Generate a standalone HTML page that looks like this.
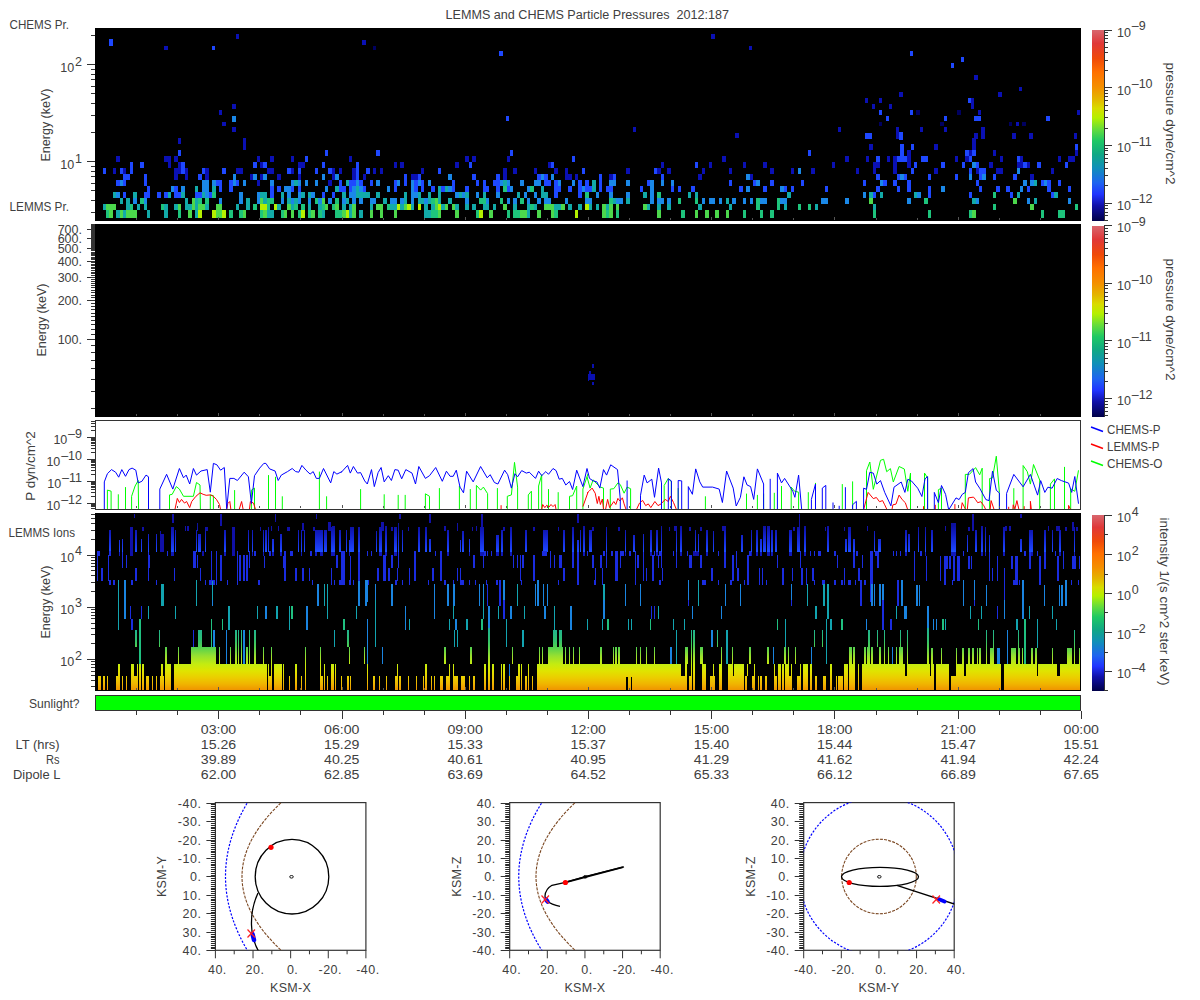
<!DOCTYPE html>
<html><head><meta charset="utf-8"><style>
html,body{margin:0;padding:0;background:#fff;width:1200px;height:1000px;overflow:hidden}
svg{display:block;font-family:"Liberation Sans", sans-serif}
</style></head><body>
<svg width="1200" height="1000" viewBox="0 0 1200 1000">
<text x="445.5" y="19" font-size="12.5" text-anchor="start" fill="#404040"  textLength="283.5" lengthAdjust="spacingAndGlyphs">LEMMS and CHEMS Particle Pressures&#160;&#160;2012:187</text>
<rect x="95" y="28" width="986" height="193" fill="#000" />
<rect x="95" y="224" width="986" height="193" fill="#000" />
<rect x="95.5" y="420.5" width="985" height="89" fill="#fff" stroke="#333" stroke-width="1"/>
<rect x="95" y="513" width="986" height="178" fill="#000" />
<rect x="95.5" y="695.5" width="985" height="15" fill="#00ff00" stroke="#333" stroke-width="1"/>
<g shape-rendering="crispEdges"><rect x="178" y="138" width="3" height="6" fill="#0a10b4"/><rect x="178" y="150" width="3" height="6" fill="#1e48ff"/><rect x="116" y="156" width="4" height="6" fill="#0a10b4"/><rect x="164" y="156" width="4" height="6" fill="#0a10b4"/><rect x="168" y="156" width="3" height="6" fill="#0a10b4"/><rect x="174" y="156" width="4" height="6" fill="#0a10b4"/><rect x="130" y="162" width="3" height="6" fill="#1e48ff"/><rect x="140" y="162" width="4" height="6" fill="#1e48ff"/><rect x="168" y="162" width="3" height="6" fill="#0a10b4"/><rect x="178" y="162" width="3" height="6" fill="#0a10b4"/><rect x="181" y="162" width="4" height="6" fill="#1e48ff"/><rect x="103" y="168" width="3" height="6" fill="#1e48ff"/><rect x="113" y="168" width="3" height="6" fill="#0a10b4"/><rect x="120" y="168" width="3" height="6" fill="#1e48ff"/><rect x="123" y="168" width="3" height="6" fill="#0a10b4"/><rect x="130" y="168" width="3" height="6" fill="#1e48ff"/><rect x="174" y="168" width="4" height="6" fill="#0a10b4"/><rect x="178" y="168" width="3" height="6" fill="#0a10b4"/><rect x="181" y="168" width="4" height="6" fill="#1e48ff"/><rect x="185" y="168" width="3" height="6" fill="#0a10b4"/><rect x="202" y="168" width="3" height="6" fill="#1e48ff"/><rect x="205" y="168" width="4" height="6" fill="#0a10b4"/><rect x="123" y="174" width="3" height="6" fill="#1e48ff"/><rect x="126" y="174" width="4" height="6" fill="#1e48ff"/><rect x="144" y="174" width="3" height="6" fill="#1e48ff"/><rect x="174" y="174" width="4" height="6" fill="#0a10b4"/><rect x="185" y="174" width="3" height="6" fill="#0a10b4"/><rect x="198" y="174" width="4" height="6" fill="#1e48ff"/><rect x="205" y="174" width="4" height="6" fill="#0a10b4"/><rect x="116" y="180" width="4" height="6" fill="#1e48ff"/><rect x="120" y="180" width="3" height="6" fill="#1a88e8"/><rect x="123" y="180" width="3" height="6" fill="#1e48ff"/><rect x="144" y="180" width="3" height="6" fill="#1e48ff"/><rect x="202" y="180" width="3" height="6" fill="#1a88e8"/><rect x="205" y="180" width="4" height="6" fill="#1a88e8"/><rect x="212" y="180" width="4" height="6" fill="#1a88e8"/><rect x="216" y="180" width="3" height="6" fill="#1e48ff"/><rect x="147" y="186" width="3" height="6" fill="#1e48ff"/><rect x="171" y="186" width="3" height="6" fill="#1a88e8"/><rect x="174" y="186" width="4" height="6" fill="#1e48ff"/><rect x="181" y="186" width="4" height="6" fill="#1a88e8"/><rect x="195" y="186" width="3" height="6" fill="#12aaa8"/><rect x="202" y="186" width="3" height="6" fill="#1a88e8"/><rect x="205" y="186" width="4" height="6" fill="#1a88e8"/><rect x="212" y="186" width="4" height="6" fill="#12aaa8"/><rect x="113" y="192" width="3" height="6" fill="#12aaa8"/><rect x="116" y="192" width="4" height="6" fill="#1a88e8"/><rect x="123" y="192" width="3" height="6" fill="#1e48ff"/><rect x="133" y="192" width="4" height="6" fill="#12aaa8"/><rect x="144" y="192" width="3" height="6" fill="#1e48ff"/><rect x="147" y="192" width="3" height="6" fill="#1e48ff"/><rect x="157" y="192" width="4" height="6" fill="#1e48ff"/><rect x="164" y="192" width="4" height="6" fill="#1e48ff"/><rect x="168" y="192" width="3" height="6" fill="#12aaa8"/><rect x="174" y="192" width="4" height="6" fill="#1e48ff"/><rect x="178" y="192" width="3" height="6" fill="#1e48ff"/><rect x="181" y="192" width="4" height="6" fill="#12aaa8"/><rect x="195" y="192" width="3" height="6" fill="#1e48ff"/><rect x="198" y="192" width="4" height="6" fill="#1e48ff"/><rect x="202" y="192" width="3" height="6" fill="#12aaa8"/><rect x="205" y="192" width="4" height="6" fill="#1a88e8"/><rect x="209" y="192" width="3" height="6" fill="#1e48ff"/><rect x="212" y="192" width="4" height="6" fill="#1ec47c"/><rect x="120" y="198" width="3" height="6" fill="#12aaa8"/><rect x="126" y="198" width="4" height="6" fill="#12aaa8"/><rect x="133" y="198" width="4" height="6" fill="#1a88e8"/><rect x="140" y="198" width="4" height="6" fill="#1ec47c"/><rect x="144" y="198" width="3" height="6" fill="#1a88e8"/><rect x="185" y="198" width="3" height="6" fill="#12aaa8"/><rect x="192" y="198" width="3" height="6" fill="#4cd84c"/><rect x="195" y="198" width="3" height="6" fill="#12aaa8"/><rect x="198" y="198" width="4" height="6" fill="#1ec47c"/><rect x="205" y="198" width="4" height="6" fill="#1ec47c"/><rect x="103" y="204" width="3" height="6" fill="#12aaa8"/><rect x="106" y="204" width="3" height="6" fill="#4cd84c"/><rect x="109" y="204" width="4" height="6" fill="#4cd84c"/><rect x="113" y="204" width="3" height="6" fill="#4cd84c"/><rect x="126" y="204" width="4" height="6" fill="#12aaa8"/><rect x="130" y="204" width="3" height="6" fill="#1ec47c"/><rect x="137" y="204" width="3" height="6" fill="#12aaa8"/><rect x="144" y="204" width="3" height="6" fill="#12aaa8"/><rect x="161" y="204" width="3" height="6" fill="#1ec47c"/><rect x="164" y="204" width="4" height="6" fill="#12aaa8"/><rect x="174" y="204" width="4" height="6" fill="#12aaa8"/><rect x="178" y="204" width="3" height="6" fill="#4cd84c"/><rect x="185" y="204" width="3" height="6" fill="#12aaa8"/><rect x="188" y="204" width="4" height="6" fill="#12aaa8"/><rect x="192" y="204" width="3" height="6" fill="#4cd84c"/><rect x="195" y="204" width="3" height="6" fill="#12aaa8"/><rect x="198" y="204" width="4" height="6" fill="#4cd84c"/><rect x="202" y="204" width="3" height="6" fill="#4cd84c"/><rect x="205" y="204" width="4" height="6" fill="#12aaa8"/><rect x="216" y="204" width="3" height="6" fill="#4cd84c"/><rect x="106" y="210" width="3" height="8" fill="#1ec47c"/><rect x="109" y="210" width="4" height="8" fill="#4cd84c"/><rect x="116" y="210" width="4" height="8" fill="#12aaa8"/><rect x="120" y="210" width="3" height="8" fill="#4cd84c"/><rect x="123" y="210" width="3" height="8" fill="#12aaa8"/><rect x="126" y="210" width="4" height="8" fill="#4cd84c"/><rect x="130" y="210" width="3" height="8" fill="#4cd84c"/><rect x="133" y="210" width="4" height="8" fill="#4cd84c"/><rect x="147" y="210" width="3" height="8" fill="#12aaa8"/><rect x="164" y="210" width="4" height="8" fill="#12aaa8"/><rect x="178" y="210" width="3" height="8" fill="#1ec47c"/><rect x="188" y="210" width="4" height="8" fill="#4cd84c"/><rect x="195" y="210" width="3" height="8" fill="#12aaa8"/><rect x="198" y="210" width="4" height="8" fill="#b4f000"/><rect x="212" y="210" width="4" height="8" fill="#b4f000"/><rect x="216" y="210" width="3" height="8" fill="#4cd84c"/><rect x="243" y="138" width="3" height="6" fill="#0a10b4"/><rect x="243" y="144" width="3" height="6" fill="#0a10b4"/><rect x="325" y="150" width="3" height="6" fill="#1e48ff"/><rect x="257" y="156" width="3" height="6" fill="#0a10b4"/><rect x="270" y="156" width="4" height="6" fill="#0a10b4"/><rect x="291" y="156" width="3" height="6" fill="#0a10b4"/><rect x="305" y="156" width="3" height="6" fill="#1e48ff"/><rect x="253" y="162" width="4" height="6" fill="#1e48ff"/><rect x="260" y="162" width="3" height="6" fill="#0a10b4"/><rect x="263" y="162" width="4" height="6" fill="#1e48ff"/><rect x="298" y="162" width="3" height="6" fill="#0a10b4"/><rect x="301" y="162" width="4" height="6" fill="#0a10b4"/><rect x="322" y="162" width="3" height="6" fill="#1e48ff"/><rect x="222" y="168" width="4" height="6" fill="#1e48ff"/><rect x="236" y="168" width="3" height="6" fill="#0a10b4"/><rect x="239" y="168" width="4" height="6" fill="#0a10b4"/><rect x="267" y="168" width="3" height="6" fill="#0a10b4"/><rect x="270" y="168" width="4" height="6" fill="#0a10b4"/><rect x="287" y="168" width="4" height="6" fill="#1e48ff"/><rect x="291" y="168" width="3" height="6" fill="#0a10b4"/><rect x="298" y="168" width="3" height="6" fill="#1e48ff"/><rect x="315" y="168" width="3" height="6" fill="#1e48ff"/><rect x="328" y="168" width="4" height="6" fill="#1e48ff"/><rect x="332" y="168" width="3" height="6" fill="#0a10b4"/><rect x="339" y="168" width="3" height="6" fill="#0a10b4"/><rect x="233" y="174" width="3" height="6" fill="#1a88e8"/><rect x="250" y="174" width="3" height="6" fill="#0a10b4"/><rect x="253" y="174" width="4" height="6" fill="#1a88e8"/><rect x="260" y="174" width="3" height="6" fill="#0a10b4"/><rect x="263" y="174" width="4" height="6" fill="#1a88e8"/><rect x="277" y="174" width="4" height="6" fill="#0a10b4"/><rect x="298" y="174" width="3" height="6" fill="#0a10b4"/><rect x="322" y="174" width="3" height="6" fill="#1a88e8"/><rect x="332" y="174" width="3" height="6" fill="#0a10b4"/><rect x="335" y="174" width="4" height="6" fill="#1a88e8"/><rect x="219" y="180" width="3" height="6" fill="#1e48ff"/><rect x="229" y="180" width="4" height="6" fill="#1e48ff"/><rect x="233" y="180" width="3" height="6" fill="#1a88e8"/><rect x="236" y="180" width="3" height="6" fill="#1e48ff"/><rect x="243" y="180" width="3" height="6" fill="#1a88e8"/><rect x="257" y="180" width="3" height="6" fill="#0a10b4"/><rect x="270" y="180" width="4" height="6" fill="#1a88e8"/><rect x="291" y="180" width="3" height="6" fill="#1a88e8"/><rect x="294" y="180" width="4" height="6" fill="#12aaa8"/><rect x="298" y="180" width="3" height="6" fill="#1a88e8"/><rect x="305" y="180" width="3" height="6" fill="#1a88e8"/><rect x="315" y="180" width="3" height="6" fill="#1a88e8"/><rect x="328" y="180" width="4" height="6" fill="#0a10b4"/><rect x="339" y="180" width="3" height="6" fill="#1e48ff"/><rect x="219" y="186" width="3" height="6" fill="#1e48ff"/><rect x="229" y="186" width="4" height="6" fill="#1e48ff"/><rect x="270" y="186" width="4" height="6" fill="#1e48ff"/><rect x="277" y="186" width="4" height="6" fill="#1e48ff"/><rect x="284" y="186" width="3" height="6" fill="#1a88e8"/><rect x="287" y="186" width="4" height="6" fill="#1a88e8"/><rect x="291" y="186" width="3" height="6" fill="#1e48ff"/><rect x="298" y="186" width="3" height="6" fill="#1e48ff"/><rect x="325" y="186" width="3" height="6" fill="#1a88e8"/><rect x="335" y="186" width="4" height="6" fill="#12aaa8"/><rect x="339" y="186" width="3" height="6" fill="#1e48ff"/><rect x="239" y="192" width="4" height="6" fill="#1a88e8"/><rect x="257" y="192" width="3" height="6" fill="#1a88e8"/><rect x="260" y="192" width="3" height="6" fill="#12aaa8"/><rect x="263" y="192" width="4" height="6" fill="#12aaa8"/><rect x="270" y="192" width="4" height="6" fill="#1e48ff"/><rect x="281" y="192" width="3" height="6" fill="#12aaa8"/><rect x="287" y="192" width="4" height="6" fill="#1a88e8"/><rect x="298" y="192" width="3" height="6" fill="#1a88e8"/><rect x="301" y="192" width="4" height="6" fill="#12aaa8"/><rect x="308" y="192" width="3" height="6" fill="#12aaa8"/><rect x="311" y="192" width="4" height="6" fill="#1a88e8"/><rect x="322" y="192" width="3" height="6" fill="#1e48ff"/><rect x="332" y="192" width="3" height="6" fill="#1e48ff"/><rect x="219" y="198" width="3" height="6" fill="#1a88e8"/><rect x="239" y="198" width="4" height="6" fill="#1a88e8"/><rect x="246" y="198" width="4" height="6" fill="#12aaa8"/><rect x="257" y="198" width="3" height="6" fill="#1a88e8"/><rect x="260" y="198" width="3" height="6" fill="#4cd84c"/><rect x="263" y="198" width="4" height="6" fill="#12aaa8"/><rect x="267" y="198" width="3" height="6" fill="#1ec47c"/><rect x="270" y="198" width="4" height="6" fill="#1ec47c"/><rect x="281" y="198" width="3" height="6" fill="#1a88e8"/><rect x="287" y="198" width="4" height="6" fill="#12aaa8"/><rect x="291" y="198" width="3" height="6" fill="#1a88e8"/><rect x="294" y="198" width="4" height="6" fill="#12aaa8"/><rect x="298" y="198" width="3" height="6" fill="#1a88e8"/><rect x="308" y="198" width="3" height="6" fill="#1a88e8"/><rect x="315" y="198" width="3" height="6" fill="#1ec47c"/><rect x="318" y="198" width="4" height="6" fill="#1a88e8"/><rect x="322" y="198" width="3" height="6" fill="#4cd84c"/><rect x="328" y="198" width="4" height="6" fill="#1a88e8"/><rect x="335" y="198" width="4" height="6" fill="#1ec47c"/><rect x="219" y="204" width="3" height="6" fill="#4cd84c"/><rect x="236" y="204" width="3" height="6" fill="#12aaa8"/><rect x="246" y="204" width="4" height="6" fill="#12aaa8"/><rect x="253" y="204" width="4" height="6" fill="#1ec47c"/><rect x="260" y="204" width="3" height="6" fill="#b4f000"/><rect x="263" y="204" width="4" height="6" fill="#b4f000"/><rect x="267" y="204" width="3" height="6" fill="#1ec47c"/><rect x="274" y="204" width="3" height="6" fill="#b4f000"/><rect x="277" y="204" width="4" height="6" fill="#12aaa8"/><rect x="287" y="204" width="4" height="6" fill="#4cd84c"/><rect x="291" y="204" width="3" height="6" fill="#12aaa8"/><rect x="294" y="204" width="4" height="6" fill="#1ec47c"/><rect x="301" y="204" width="4" height="6" fill="#1ec47c"/><rect x="308" y="204" width="3" height="6" fill="#12aaa8"/><rect x="318" y="204" width="4" height="6" fill="#12aaa8"/><rect x="322" y="204" width="3" height="6" fill="#1ec47c"/><rect x="325" y="204" width="3" height="6" fill="#4cd84c"/><rect x="332" y="204" width="3" height="6" fill="#1ec47c"/><rect x="335" y="204" width="4" height="6" fill="#4cd84c"/><rect x="219" y="210" width="3" height="8" fill="#4cd84c"/><rect x="222" y="210" width="4" height="8" fill="#b4f000"/><rect x="229" y="210" width="4" height="8" fill="#1ec47c"/><rect x="239" y="210" width="4" height="8" fill="#1ec47c"/><rect x="243" y="210" width="3" height="8" fill="#4cd84c"/><rect x="260" y="210" width="3" height="8" fill="#1ec47c"/><rect x="263" y="210" width="4" height="8" fill="#4cd84c"/><rect x="267" y="210" width="3" height="8" fill="#12aaa8"/><rect x="270" y="210" width="4" height="8" fill="#12aaa8"/><rect x="281" y="210" width="3" height="8" fill="#1ec47c"/><rect x="284" y="210" width="3" height="8" fill="#4cd84c"/><rect x="291" y="210" width="3" height="8" fill="#4cd84c"/><rect x="298" y="210" width="3" height="8" fill="#1ec47c"/><rect x="301" y="210" width="4" height="8" fill="#b4f000"/><rect x="308" y="210" width="3" height="8" fill="#1ec47c"/><rect x="311" y="210" width="4" height="8" fill="#4cd84c"/><rect x="318" y="210" width="4" height="8" fill="#1ec47c"/><rect x="322" y="210" width="3" height="8" fill="#12aaa8"/><rect x="335" y="210" width="4" height="8" fill="#1ec47c"/><rect x="339" y="210" width="3" height="8" fill="#1ec47c"/><rect x="376" y="150" width="4" height="6" fill="#1e48ff"/><rect x="349" y="156" width="3" height="6" fill="#0a10b4"/><rect x="356" y="162" width="3" height="6" fill="#1e48ff"/><rect x="394" y="162" width="3" height="6" fill="#0a10b4"/><rect x="400" y="162" width="4" height="6" fill="#0a10b4"/><rect x="455" y="162" width="4" height="6" fill="#0a10b4"/><rect x="352" y="168" width="4" height="6" fill="#0a10b4"/><rect x="356" y="168" width="3" height="6" fill="#1e48ff"/><rect x="366" y="168" width="4" height="6" fill="#1e48ff"/><rect x="373" y="168" width="3" height="6" fill="#0a10b4"/><rect x="380" y="168" width="3" height="6" fill="#0a10b4"/><rect x="421" y="168" width="3" height="6" fill="#0a10b4"/><rect x="438" y="168" width="3" height="6" fill="#1e48ff"/><rect x="352" y="174" width="4" height="6" fill="#0a10b4"/><rect x="356" y="174" width="3" height="6" fill="#1e48ff"/><rect x="363" y="174" width="3" height="6" fill="#0a10b4"/><rect x="404" y="174" width="3" height="6" fill="#1e48ff"/><rect x="411" y="174" width="3" height="6" fill="#0a10b4"/><rect x="414" y="174" width="4" height="6" fill="#0a10b4"/><rect x="418" y="174" width="3" height="6" fill="#1e48ff"/><rect x="448" y="174" width="4" height="6" fill="#1a88e8"/><rect x="346" y="180" width="3" height="6" fill="#12aaa8"/><rect x="349" y="180" width="3" height="6" fill="#1e48ff"/><rect x="352" y="180" width="4" height="6" fill="#1e48ff"/><rect x="356" y="180" width="3" height="6" fill="#1a88e8"/><rect x="359" y="180" width="4" height="6" fill="#1e48ff"/><rect x="370" y="180" width="3" height="6" fill="#1e48ff"/><rect x="376" y="180" width="4" height="6" fill="#1a88e8"/><rect x="394" y="180" width="3" height="6" fill="#1e48ff"/><rect x="397" y="180" width="3" height="6" fill="#1a88e8"/><rect x="404" y="180" width="3" height="6" fill="#1e48ff"/><rect x="411" y="180" width="3" height="6" fill="#1a88e8"/><rect x="414" y="180" width="4" height="6" fill="#1e48ff"/><rect x="418" y="180" width="3" height="6" fill="#1a88e8"/><rect x="421" y="180" width="3" height="6" fill="#1e48ff"/><rect x="428" y="180" width="3" height="6" fill="#1a88e8"/><rect x="452" y="180" width="3" height="6" fill="#1e48ff"/><rect x="342" y="186" width="4" height="6" fill="#1e48ff"/><rect x="349" y="186" width="3" height="6" fill="#1e48ff"/><rect x="352" y="186" width="4" height="6" fill="#1a88e8"/><rect x="356" y="186" width="3" height="6" fill="#12aaa8"/><rect x="359" y="186" width="4" height="6" fill="#1a88e8"/><rect x="363" y="186" width="3" height="6" fill="#1e48ff"/><rect x="387" y="186" width="3" height="6" fill="#1a88e8"/><rect x="394" y="186" width="3" height="6" fill="#1e48ff"/><rect x="411" y="186" width="3" height="6" fill="#1a88e8"/><rect x="414" y="186" width="4" height="6" fill="#1e48ff"/><rect x="421" y="186" width="3" height="6" fill="#1e48ff"/><rect x="431" y="186" width="4" height="6" fill="#1e48ff"/><rect x="438" y="186" width="3" height="6" fill="#12aaa8"/><rect x="441" y="186" width="4" height="6" fill="#1e48ff"/><rect x="445" y="186" width="3" height="6" fill="#12aaa8"/><rect x="448" y="186" width="4" height="6" fill="#1a88e8"/><rect x="452" y="186" width="3" height="6" fill="#1e48ff"/><rect x="342" y="192" width="4" height="6" fill="#12aaa8"/><rect x="349" y="192" width="3" height="6" fill="#1a88e8"/><rect x="352" y="192" width="4" height="6" fill="#1a88e8"/><rect x="356" y="192" width="3" height="6" fill="#12aaa8"/><rect x="359" y="192" width="4" height="6" fill="#12aaa8"/><rect x="363" y="192" width="3" height="6" fill="#12aaa8"/><rect x="366" y="192" width="4" height="6" fill="#12aaa8"/><rect x="376" y="192" width="4" height="6" fill="#12aaa8"/><rect x="404" y="192" width="3" height="6" fill="#12aaa8"/><rect x="411" y="192" width="3" height="6" fill="#1a88e8"/><rect x="414" y="192" width="4" height="6" fill="#1a88e8"/><rect x="418" y="192" width="3" height="6" fill="#12aaa8"/><rect x="428" y="192" width="3" height="6" fill="#12aaa8"/><rect x="438" y="192" width="3" height="6" fill="#12aaa8"/><rect x="455" y="192" width="4" height="6" fill="#1a88e8"/><rect x="459" y="192" width="3" height="6" fill="#12aaa8"/><rect x="462" y="192" width="3" height="6" fill="#1a88e8"/><rect x="342" y="198" width="4" height="6" fill="#1a88e8"/><rect x="346" y="198" width="3" height="6" fill="#12aaa8"/><rect x="352" y="198" width="4" height="6" fill="#1a88e8"/><rect x="359" y="198" width="4" height="6" fill="#1a88e8"/><rect x="370" y="198" width="3" height="6" fill="#1a88e8"/><rect x="373" y="198" width="3" height="6" fill="#1a88e8"/><rect x="383" y="198" width="4" height="6" fill="#12aaa8"/><rect x="390" y="198" width="4" height="6" fill="#1a88e8"/><rect x="394" y="198" width="3" height="6" fill="#1a88e8"/><rect x="400" y="198" width="4" height="6" fill="#1a88e8"/><rect x="404" y="198" width="3" height="6" fill="#12aaa8"/><rect x="411" y="198" width="3" height="6" fill="#1a88e8"/><rect x="418" y="198" width="3" height="6" fill="#12aaa8"/><rect x="421" y="198" width="3" height="6" fill="#12aaa8"/><rect x="424" y="198" width="4" height="6" fill="#1a88e8"/><rect x="428" y="198" width="3" height="6" fill="#12aaa8"/><rect x="431" y="198" width="4" height="6" fill="#1ec47c"/><rect x="435" y="198" width="3" height="6" fill="#4cd84c"/><rect x="438" y="198" width="3" height="6" fill="#12aaa8"/><rect x="448" y="198" width="4" height="6" fill="#12aaa8"/><rect x="342" y="204" width="4" height="6" fill="#12aaa8"/><rect x="349" y="204" width="3" height="6" fill="#12aaa8"/><rect x="352" y="204" width="4" height="6" fill="#4cd84c"/><rect x="370" y="204" width="3" height="6" fill="#12aaa8"/><rect x="376" y="204" width="4" height="6" fill="#4cd84c"/><rect x="380" y="204" width="3" height="6" fill="#4cd84c"/><rect x="387" y="204" width="3" height="6" fill="#1ec47c"/><rect x="390" y="204" width="4" height="6" fill="#12aaa8"/><rect x="394" y="204" width="3" height="6" fill="#12aaa8"/><rect x="397" y="204" width="3" height="6" fill="#b4f000"/><rect x="400" y="204" width="4" height="6" fill="#12aaa8"/><rect x="404" y="204" width="3" height="6" fill="#4cd84c"/><rect x="407" y="204" width="4" height="6" fill="#b4f000"/><rect x="411" y="204" width="3" height="6" fill="#12aaa8"/><rect x="418" y="204" width="3" height="6" fill="#b4f000"/><rect x="424" y="204" width="4" height="6" fill="#12aaa8"/><rect x="431" y="204" width="4" height="6" fill="#12aaa8"/><rect x="435" y="204" width="3" height="6" fill="#4cd84c"/><rect x="438" y="204" width="3" height="6" fill="#b4f000"/><rect x="441" y="204" width="4" height="6" fill="#12aaa8"/><rect x="445" y="204" width="3" height="6" fill="#4cd84c"/><rect x="452" y="204" width="3" height="6" fill="#4cd84c"/><rect x="455" y="204" width="4" height="6" fill="#12aaa8"/><rect x="342" y="210" width="4" height="8" fill="#4cd84c"/><rect x="346" y="210" width="3" height="8" fill="#b4f000"/><rect x="349" y="210" width="3" height="8" fill="#12aaa8"/><rect x="352" y="210" width="4" height="8" fill="#4cd84c"/><rect x="359" y="210" width="4" height="8" fill="#12aaa8"/><rect x="370" y="210" width="3" height="8" fill="#4cd84c"/><rect x="380" y="210" width="3" height="8" fill="#4cd84c"/><rect x="394" y="210" width="3" height="8" fill="#4cd84c"/><rect x="424" y="210" width="4" height="8" fill="#12aaa8"/><rect x="428" y="210" width="3" height="8" fill="#12aaa8"/><rect x="431" y="210" width="4" height="8" fill="#1ec47c"/><rect x="435" y="210" width="3" height="8" fill="#1ec47c"/><rect x="438" y="210" width="3" height="8" fill="#4cd84c"/><rect x="455" y="210" width="4" height="8" fill="#4cd84c"/><rect x="510" y="150" width="3" height="6" fill="#1e48ff"/><rect x="465" y="156" width="4" height="6" fill="#0a10b4"/><rect x="472" y="156" width="4" height="6" fill="#0a10b4"/><rect x="507" y="156" width="3" height="6" fill="#0a10b4"/><rect x="572" y="156" width="3" height="6" fill="#1e48ff"/><rect x="469" y="162" width="3" height="6" fill="#1e48ff"/><rect x="548" y="162" width="3" height="6" fill="#0a10b4"/><rect x="551" y="162" width="3" height="6" fill="#1e48ff"/><rect x="503" y="168" width="4" height="6" fill="#0a10b4"/><rect x="513" y="168" width="4" height="6" fill="#0a10b4"/><rect x="534" y="168" width="3" height="6" fill="#0a10b4"/><rect x="554" y="168" width="4" height="6" fill="#0a10b4"/><rect x="565" y="168" width="3" height="6" fill="#0a10b4"/><rect x="582" y="168" width="3" height="6" fill="#1e48ff"/><rect x="472" y="174" width="4" height="6" fill="#1e48ff"/><rect x="496" y="174" width="4" height="6" fill="#1e48ff"/><rect x="503" y="174" width="4" height="6" fill="#0a10b4"/><rect x="537" y="174" width="4" height="6" fill="#1e48ff"/><rect x="541" y="174" width="3" height="6" fill="#1a88e8"/><rect x="544" y="174" width="4" height="6" fill="#1e48ff"/><rect x="551" y="174" width="3" height="6" fill="#1a88e8"/><rect x="565" y="174" width="3" height="6" fill="#0a10b4"/><rect x="568" y="174" width="4" height="6" fill="#0a10b4"/><rect x="575" y="174" width="3" height="6" fill="#0a10b4"/><rect x="476" y="180" width="3" height="6" fill="#1e48ff"/><rect x="483" y="180" width="3" height="6" fill="#1e48ff"/><rect x="493" y="180" width="3" height="6" fill="#1e48ff"/><rect x="496" y="180" width="4" height="6" fill="#1e48ff"/><rect x="500" y="180" width="3" height="6" fill="#1a88e8"/><rect x="503" y="180" width="4" height="6" fill="#12aaa8"/><rect x="507" y="180" width="3" height="6" fill="#1a88e8"/><rect x="520" y="180" width="4" height="6" fill="#1a88e8"/><rect x="534" y="180" width="3" height="6" fill="#1a88e8"/><rect x="537" y="180" width="4" height="6" fill="#1a88e8"/><rect x="544" y="180" width="4" height="6" fill="#1e48ff"/><rect x="548" y="180" width="3" height="6" fill="#1e48ff"/><rect x="554" y="180" width="4" height="6" fill="#1e48ff"/><rect x="558" y="180" width="3" height="6" fill="#1a88e8"/><rect x="572" y="180" width="3" height="6" fill="#1a88e8"/><rect x="578" y="180" width="4" height="6" fill="#1e48ff"/><rect x="585" y="180" width="4" height="6" fill="#1e48ff"/><rect x="465" y="186" width="4" height="6" fill="#1e48ff"/><rect x="483" y="186" width="3" height="6" fill="#1e48ff"/><rect x="486" y="186" width="3" height="6" fill="#1e48ff"/><rect x="496" y="186" width="4" height="6" fill="#1e48ff"/><rect x="503" y="186" width="4" height="6" fill="#1ec47c"/><rect x="507" y="186" width="3" height="6" fill="#1e48ff"/><rect x="510" y="186" width="3" height="6" fill="#1a88e8"/><rect x="527" y="186" width="3" height="6" fill="#1a88e8"/><rect x="530" y="186" width="4" height="6" fill="#1ec47c"/><rect x="541" y="186" width="3" height="6" fill="#12aaa8"/><rect x="554" y="186" width="4" height="6" fill="#1e48ff"/><rect x="558" y="186" width="3" height="6" fill="#1e48ff"/><rect x="568" y="186" width="4" height="6" fill="#1e48ff"/><rect x="578" y="186" width="4" height="6" fill="#1e48ff"/><rect x="582" y="186" width="3" height="6" fill="#1a88e8"/><rect x="585" y="186" width="4" height="6" fill="#1e48ff"/><rect x="465" y="192" width="4" height="6" fill="#12aaa8"/><rect x="476" y="192" width="3" height="6" fill="#1a88e8"/><rect x="483" y="192" width="3" height="6" fill="#12aaa8"/><rect x="496" y="192" width="4" height="6" fill="#1a88e8"/><rect x="517" y="192" width="3" height="6" fill="#12aaa8"/><rect x="524" y="192" width="3" height="6" fill="#1a88e8"/><rect x="534" y="192" width="3" height="6" fill="#1a88e8"/><rect x="541" y="192" width="3" height="6" fill="#12aaa8"/><rect x="544" y="192" width="4" height="6" fill="#12aaa8"/><rect x="554" y="192" width="4" height="6" fill="#1e48ff"/><rect x="578" y="192" width="4" height="6" fill="#1e48ff"/><rect x="585" y="192" width="4" height="6" fill="#1ec47c"/><rect x="465" y="198" width="4" height="6" fill="#1a88e8"/><rect x="479" y="198" width="4" height="6" fill="#1ec47c"/><rect x="483" y="198" width="3" height="6" fill="#1ec47c"/><rect x="486" y="198" width="3" height="6" fill="#1a88e8"/><rect x="500" y="198" width="3" height="6" fill="#1ec47c"/><rect x="507" y="198" width="3" height="6" fill="#1a88e8"/><rect x="513" y="198" width="4" height="6" fill="#1a88e8"/><rect x="520" y="198" width="4" height="6" fill="#1ec47c"/><rect x="527" y="198" width="3" height="6" fill="#1a88e8"/><rect x="537" y="198" width="4" height="6" fill="#1a88e8"/><rect x="544" y="198" width="4" height="6" fill="#1a88e8"/><rect x="548" y="198" width="3" height="6" fill="#1a88e8"/><rect x="565" y="198" width="3" height="6" fill="#1a88e8"/><rect x="585" y="198" width="4" height="6" fill="#1a88e8"/><rect x="465" y="204" width="4" height="6" fill="#12aaa8"/><rect x="472" y="204" width="4" height="6" fill="#12aaa8"/><rect x="483" y="204" width="3" height="6" fill="#12aaa8"/><rect x="486" y="204" width="3" height="6" fill="#12aaa8"/><rect x="493" y="204" width="3" height="6" fill="#12aaa8"/><rect x="503" y="204" width="4" height="6" fill="#4cd84c"/><rect x="513" y="204" width="4" height="6" fill="#12aaa8"/><rect x="527" y="204" width="3" height="6" fill="#12aaa8"/><rect x="530" y="204" width="4" height="6" fill="#1ec47c"/><rect x="534" y="204" width="3" height="6" fill="#12aaa8"/><rect x="544" y="204" width="4" height="6" fill="#4cd84c"/><rect x="548" y="204" width="3" height="6" fill="#4cd84c"/><rect x="551" y="204" width="3" height="6" fill="#4cd84c"/><rect x="554" y="204" width="4" height="6" fill="#12aaa8"/><rect x="558" y="204" width="3" height="6" fill="#12aaa8"/><rect x="561" y="204" width="4" height="6" fill="#4cd84c"/><rect x="568" y="204" width="4" height="6" fill="#12aaa8"/><rect x="578" y="204" width="4" height="6" fill="#12aaa8"/><rect x="585" y="204" width="4" height="6" fill="#b4f000"/><rect x="476" y="210" width="3" height="8" fill="#1ec47c"/><rect x="479" y="210" width="4" height="8" fill="#b4f000"/><rect x="489" y="210" width="4" height="8" fill="#4cd84c"/><rect x="507" y="210" width="3" height="8" fill="#1ec47c"/><rect x="513" y="210" width="4" height="8" fill="#1ec47c"/><rect x="517" y="210" width="3" height="8" fill="#1ec47c"/><rect x="520" y="210" width="4" height="8" fill="#4cd84c"/><rect x="524" y="210" width="3" height="8" fill="#4cd84c"/><rect x="527" y="210" width="3" height="8" fill="#12aaa8"/><rect x="537" y="210" width="4" height="8" fill="#4cd84c"/><rect x="551" y="210" width="3" height="8" fill="#4cd84c"/><rect x="554" y="210" width="4" height="8" fill="#1ec47c"/><rect x="575" y="210" width="3" height="8" fill="#b4f000"/><rect x="661" y="162" width="3" height="6" fill="#0a10b4"/><rect x="695" y="162" width="3" height="6" fill="#1e48ff"/><rect x="709" y="162" width="3" height="6" fill="#0a10b4"/><rect x="626" y="168" width="4" height="6" fill="#0a10b4"/><rect x="654" y="168" width="3" height="6" fill="#1e48ff"/><rect x="657" y="168" width="4" height="6" fill="#0a10b4"/><rect x="667" y="168" width="4" height="6" fill="#0a10b4"/><rect x="702" y="168" width="3" height="6" fill="#0a10b4"/><rect x="599" y="174" width="3" height="6" fill="#1e48ff"/><rect x="609" y="174" width="4" height="6" fill="#0a10b4"/><rect x="613" y="174" width="3" height="6" fill="#1e48ff"/><rect x="661" y="174" width="3" height="6" fill="#1e48ff"/><rect x="698" y="174" width="4" height="6" fill="#0a10b4"/><rect x="592" y="180" width="4" height="6" fill="#12aaa8"/><rect x="599" y="180" width="3" height="6" fill="#1e48ff"/><rect x="609" y="180" width="4" height="6" fill="#1a88e8"/><rect x="613" y="180" width="3" height="6" fill="#1a88e8"/><rect x="626" y="180" width="4" height="6" fill="#1a88e8"/><rect x="647" y="180" width="3" height="6" fill="#1e48ff"/><rect x="650" y="180" width="4" height="6" fill="#1a88e8"/><rect x="661" y="180" width="3" height="6" fill="#1a88e8"/><rect x="671" y="180" width="3" height="6" fill="#1a88e8"/><rect x="589" y="186" width="3" height="6" fill="#1e48ff"/><rect x="592" y="186" width="4" height="6" fill="#12aaa8"/><rect x="599" y="186" width="3" height="6" fill="#1e48ff"/><rect x="606" y="186" width="3" height="6" fill="#1e48ff"/><rect x="609" y="186" width="4" height="6" fill="#1e48ff"/><rect x="640" y="186" width="3" height="6" fill="#1e48ff"/><rect x="650" y="186" width="4" height="6" fill="#1a88e8"/><rect x="671" y="186" width="3" height="6" fill="#1e48ff"/><rect x="678" y="186" width="3" height="6" fill="#1e48ff"/><rect x="691" y="186" width="4" height="6" fill="#1e48ff"/><rect x="596" y="192" width="3" height="6" fill="#1a88e8"/><rect x="609" y="192" width="4" height="6" fill="#1a88e8"/><rect x="626" y="192" width="4" height="6" fill="#1a88e8"/><rect x="643" y="192" width="4" height="6" fill="#12aaa8"/><rect x="650" y="192" width="4" height="6" fill="#1a88e8"/><rect x="657" y="192" width="4" height="6" fill="#1ec47c"/><rect x="688" y="192" width="3" height="6" fill="#12aaa8"/><rect x="695" y="192" width="3" height="6" fill="#12aaa8"/><rect x="589" y="198" width="3" height="6" fill="#1a88e8"/><rect x="609" y="198" width="4" height="6" fill="#1ec47c"/><rect x="613" y="198" width="3" height="6" fill="#12aaa8"/><rect x="616" y="198" width="3" height="6" fill="#1a88e8"/><rect x="619" y="198" width="4" height="6" fill="#1a88e8"/><rect x="626" y="198" width="4" height="6" fill="#12aaa8"/><rect x="650" y="198" width="4" height="6" fill="#1a88e8"/><rect x="657" y="198" width="4" height="6" fill="#1a88e8"/><rect x="661" y="198" width="3" height="6" fill="#1a88e8"/><rect x="667" y="198" width="4" height="6" fill="#1a88e8"/><rect x="678" y="198" width="3" height="6" fill="#1ec47c"/><rect x="695" y="198" width="3" height="6" fill="#1ec47c"/><rect x="702" y="198" width="3" height="6" fill="#1a88e8"/><rect x="709" y="198" width="3" height="6" fill="#1a88e8"/><rect x="589" y="204" width="3" height="6" fill="#12aaa8"/><rect x="596" y="204" width="3" height="6" fill="#12aaa8"/><rect x="602" y="204" width="4" height="6" fill="#4cd84c"/><rect x="606" y="204" width="3" height="6" fill="#12aaa8"/><rect x="609" y="204" width="4" height="6" fill="#4cd84c"/><rect x="616" y="204" width="3" height="6" fill="#4cd84c"/><rect x="643" y="204" width="4" height="6" fill="#4cd84c"/><rect x="647" y="204" width="3" height="6" fill="#12aaa8"/><rect x="657" y="204" width="4" height="6" fill="#12aaa8"/><rect x="667" y="204" width="4" height="6" fill="#12aaa8"/><rect x="698" y="204" width="4" height="6" fill="#12aaa8"/><rect x="602" y="210" width="4" height="8" fill="#4cd84c"/><rect x="606" y="210" width="3" height="8" fill="#1ec47c"/><rect x="609" y="210" width="4" height="8" fill="#4cd84c"/><rect x="616" y="210" width="3" height="8" fill="#1ec47c"/><rect x="657" y="210" width="4" height="8" fill="#4cd84c"/><rect x="681" y="210" width="4" height="8" fill="#1ec47c"/><rect x="695" y="210" width="3" height="8" fill="#4cd84c"/><rect x="705" y="210" width="4" height="8" fill="#4cd84c"/><rect x="808" y="150" width="3" height="6" fill="#1e48ff"/><rect x="722" y="156" width="4" height="6" fill="#0a10b4"/><rect x="743" y="162" width="3" height="6" fill="#0a10b4"/><rect x="763" y="162" width="4" height="6" fill="#0a10b4"/><rect x="832" y="162" width="3" height="6" fill="#0a10b4"/><rect x="729" y="168" width="3" height="6" fill="#0a10b4"/><rect x="770" y="168" width="4" height="6" fill="#0a10b4"/><rect x="791" y="168" width="3" height="6" fill="#0a10b4"/><rect x="798" y="168" width="3" height="6" fill="#1a88e8"/><rect x="811" y="168" width="4" height="6" fill="#0a10b4"/><rect x="746" y="174" width="4" height="6" fill="#1a88e8"/><rect x="750" y="174" width="3" height="6" fill="#0a10b4"/><rect x="729" y="180" width="3" height="6" fill="#1e48ff"/><rect x="753" y="180" width="3" height="6" fill="#1e48ff"/><rect x="756" y="180" width="4" height="6" fill="#1a88e8"/><rect x="770" y="180" width="4" height="6" fill="#1e48ff"/><rect x="801" y="180" width="3" height="6" fill="#1e48ff"/><rect x="739" y="186" width="4" height="6" fill="#1e48ff"/><rect x="746" y="186" width="4" height="6" fill="#1a88e8"/><rect x="763" y="186" width="4" height="6" fill="#1e48ff"/><rect x="780" y="186" width="4" height="6" fill="#1a88e8"/><rect x="784" y="186" width="3" height="6" fill="#1e48ff"/><rect x="791" y="186" width="3" height="6" fill="#1e48ff"/><rect x="825" y="186" width="3" height="6" fill="#1e48ff"/><rect x="787" y="192" width="4" height="6" fill="#12aaa8"/><rect x="712" y="198" width="3" height="6" fill="#1a88e8"/><rect x="719" y="198" width="3" height="6" fill="#1a88e8"/><rect x="726" y="198" width="3" height="6" fill="#12aaa8"/><rect x="732" y="198" width="4" height="6" fill="#1a88e8"/><rect x="743" y="198" width="3" height="6" fill="#1a88e8"/><rect x="750" y="198" width="3" height="6" fill="#1a88e8"/><rect x="756" y="198" width="4" height="6" fill="#1ec47c"/><rect x="760" y="198" width="3" height="6" fill="#1a88e8"/><rect x="763" y="198" width="4" height="6" fill="#1a88e8"/><rect x="777" y="198" width="3" height="6" fill="#1ec47c"/><rect x="780" y="198" width="4" height="6" fill="#1a88e8"/><rect x="784" y="198" width="3" height="6" fill="#1a88e8"/><rect x="821" y="198" width="4" height="6" fill="#1a88e8"/><rect x="825" y="198" width="3" height="6" fill="#1a88e8"/><rect x="729" y="204" width="3" height="6" fill="#12aaa8"/><rect x="756" y="204" width="4" height="6" fill="#1ec47c"/><rect x="777" y="204" width="3" height="6" fill="#1ec47c"/><rect x="784" y="204" width="3" height="6" fill="#12aaa8"/><rect x="798" y="204" width="3" height="6" fill="#1ec47c"/><rect x="808" y="204" width="3" height="6" fill="#1ec47c"/><rect x="815" y="204" width="3" height="6" fill="#12aaa8"/><rect x="715" y="210" width="4" height="8" fill="#4cd84c"/><rect x="726" y="210" width="3" height="8" fill="#4cd84c"/><rect x="743" y="210" width="3" height="8" fill="#1ec47c"/><rect x="760" y="210" width="3" height="8" fill="#1ec47c"/><rect x="770" y="210" width="4" height="8" fill="#1ec47c"/><rect x="869" y="144" width="4" height="6" fill="#0a10b4"/><rect x="900" y="144" width="4" height="6" fill="#1e48ff"/><rect x="911" y="144" width="3" height="6" fill="#1e48ff"/><rect x="934" y="144" width="4" height="6" fill="#0a10b4"/><rect x="900" y="150" width="4" height="6" fill="#1e48ff"/><rect x="907" y="150" width="4" height="6" fill="#0a10b4"/><rect x="845" y="156" width="4" height="6" fill="#0a10b4"/><rect x="866" y="156" width="3" height="6" fill="#0a10b4"/><rect x="876" y="156" width="4" height="6" fill="#1e48ff"/><rect x="887" y="156" width="3" height="6" fill="#0a10b4"/><rect x="893" y="156" width="4" height="6" fill="#0a10b4"/><rect x="897" y="156" width="3" height="6" fill="#1e48ff"/><rect x="900" y="156" width="4" height="6" fill="#1e48ff"/><rect x="904" y="156" width="3" height="6" fill="#1e48ff"/><rect x="907" y="156" width="4" height="6" fill="#0a10b4"/><rect x="921" y="156" width="3" height="6" fill="#1e48ff"/><rect x="924" y="156" width="4" height="6" fill="#1e48ff"/><rect x="955" y="156" width="3" height="6" fill="#0a10b4"/><rect x="873" y="162" width="3" height="6" fill="#0a10b4"/><rect x="876" y="162" width="4" height="6" fill="#0a10b4"/><rect x="893" y="162" width="4" height="6" fill="#0a10b4"/><rect x="907" y="162" width="4" height="6" fill="#0a10b4"/><rect x="914" y="162" width="3" height="6" fill="#1e48ff"/><rect x="941" y="162" width="4" height="6" fill="#1e48ff"/><rect x="856" y="168" width="3" height="6" fill="#0a10b4"/><rect x="873" y="168" width="3" height="6" fill="#0a10b4"/><rect x="893" y="168" width="4" height="6" fill="#0a10b4"/><rect x="911" y="168" width="3" height="6" fill="#1e48ff"/><rect x="934" y="168" width="4" height="6" fill="#0a10b4"/><rect x="876" y="174" width="4" height="6" fill="#1e48ff"/><rect x="897" y="174" width="3" height="6" fill="#1e48ff"/><rect x="900" y="174" width="4" height="6" fill="#1a88e8"/><rect x="904" y="174" width="3" height="6" fill="#1e48ff"/><rect x="928" y="174" width="3" height="6" fill="#1e48ff"/><rect x="955" y="174" width="3" height="6" fill="#1e48ff"/><rect x="863" y="180" width="3" height="6" fill="#1e48ff"/><rect x="880" y="180" width="3" height="6" fill="#1a88e8"/><rect x="883" y="180" width="4" height="6" fill="#1e48ff"/><rect x="893" y="180" width="4" height="6" fill="#1e48ff"/><rect x="907" y="180" width="4" height="6" fill="#1e48ff"/><rect x="876" y="186" width="4" height="6" fill="#1e48ff"/><rect x="897" y="186" width="3" height="6" fill="#1e48ff"/><rect x="907" y="186" width="4" height="6" fill="#1e48ff"/><rect x="928" y="186" width="3" height="6" fill="#1e48ff"/><rect x="941" y="186" width="4" height="6" fill="#1a88e8"/><rect x="863" y="192" width="3" height="6" fill="#1a88e8"/><rect x="869" y="192" width="4" height="6" fill="#12aaa8"/><rect x="873" y="192" width="3" height="6" fill="#1e48ff"/><rect x="880" y="192" width="3" height="6" fill="#12aaa8"/><rect x="914" y="192" width="3" height="6" fill="#12aaa8"/><rect x="917" y="192" width="4" height="6" fill="#1a88e8"/><rect x="928" y="192" width="3" height="6" fill="#1e48ff"/><rect x="845" y="198" width="4" height="6" fill="#1a88e8"/><rect x="869" y="198" width="4" height="6" fill="#4cd84c"/><rect x="907" y="198" width="4" height="6" fill="#1a88e8"/><rect x="924" y="198" width="4" height="6" fill="#1ec47c"/><rect x="873" y="204" width="3" height="6" fill="#12aaa8"/><rect x="873" y="210" width="3" height="8" fill="#1ec47c"/><rect x="928" y="210" width="3" height="8" fill="#1ec47c"/><rect x="972" y="138" width="4" height="6" fill="#0a10b4"/><rect x="972" y="144" width="4" height="6" fill="#0a10b4"/><rect x="1075" y="144" width="3" height="6" fill="#1e48ff"/><rect x="965" y="150" width="4" height="6" fill="#1e48ff"/><rect x="969" y="150" width="3" height="6" fill="#0a10b4"/><rect x="972" y="150" width="4" height="6" fill="#1e48ff"/><rect x="993" y="150" width="3" height="6" fill="#0a10b4"/><rect x="1075" y="150" width="3" height="6" fill="#0a10b4"/><rect x="965" y="156" width="4" height="6" fill="#0a10b4"/><rect x="969" y="156" width="3" height="6" fill="#1e48ff"/><rect x="1000" y="156" width="3" height="6" fill="#0a10b4"/><rect x="1017" y="156" width="3" height="6" fill="#1e48ff"/><rect x="1020" y="156" width="3" height="6" fill="#0a10b4"/><rect x="1058" y="156" width="3" height="6" fill="#0a10b4"/><rect x="1068" y="156" width="3" height="6" fill="#0a10b4"/><rect x="1071" y="156" width="4" height="6" fill="#0a10b4"/><rect x="962" y="162" width="3" height="6" fill="#1e48ff"/><rect x="972" y="162" width="4" height="6" fill="#1a88e8"/><rect x="976" y="162" width="3" height="6" fill="#1e48ff"/><rect x="989" y="162" width="4" height="6" fill="#0a10b4"/><rect x="1017" y="162" width="3" height="6" fill="#0a10b4"/><rect x="1020" y="162" width="3" height="6" fill="#0a10b4"/><rect x="1023" y="162" width="4" height="6" fill="#1e48ff"/><rect x="1027" y="162" width="3" height="6" fill="#0a10b4"/><rect x="1037" y="162" width="4" height="6" fill="#1e48ff"/><rect x="1065" y="162" width="3" height="6" fill="#1e48ff"/><rect x="969" y="168" width="3" height="6" fill="#1e48ff"/><rect x="976" y="168" width="3" height="6" fill="#0a10b4"/><rect x="979" y="168" width="3" height="6" fill="#1e48ff"/><rect x="982" y="168" width="4" height="6" fill="#1e48ff"/><rect x="996" y="168" width="4" height="6" fill="#0a10b4"/><rect x="1000" y="168" width="3" height="6" fill="#0a10b4"/><rect x="1017" y="168" width="3" height="6" fill="#1a88e8"/><rect x="1051" y="168" width="3" height="6" fill="#0a10b4"/><rect x="969" y="174" width="3" height="6" fill="#1a88e8"/><rect x="979" y="174" width="3" height="6" fill="#1e48ff"/><rect x="982" y="174" width="4" height="6" fill="#1a88e8"/><rect x="993" y="174" width="3" height="6" fill="#1e48ff"/><rect x="1013" y="174" width="4" height="6" fill="#1e48ff"/><rect x="1030" y="174" width="4" height="6" fill="#0a10b4"/><rect x="976" y="180" width="3" height="6" fill="#1e48ff"/><rect x="1023" y="180" width="4" height="6" fill="#1a88e8"/><rect x="1030" y="180" width="4" height="6" fill="#1a88e8"/><rect x="1034" y="180" width="3" height="6" fill="#12aaa8"/><rect x="1041" y="180" width="3" height="6" fill="#1e48ff"/><rect x="1044" y="180" width="3" height="6" fill="#1a88e8"/><rect x="1047" y="180" width="4" height="6" fill="#1e48ff"/><rect x="1058" y="180" width="3" height="6" fill="#1e48ff"/><rect x="979" y="186" width="3" height="6" fill="#1e48ff"/><rect x="996" y="186" width="4" height="6" fill="#1e48ff"/><rect x="1006" y="186" width="4" height="6" fill="#1e48ff"/><rect x="1020" y="186" width="3" height="6" fill="#1a88e8"/><rect x="1027" y="186" width="3" height="6" fill="#1e48ff"/><rect x="1047" y="186" width="4" height="6" fill="#1e48ff"/><rect x="1068" y="186" width="3" height="6" fill="#1e48ff"/><rect x="969" y="192" width="3" height="6" fill="#1e48ff"/><rect x="993" y="192" width="3" height="6" fill="#1ec47c"/><rect x="1010" y="192" width="3" height="6" fill="#1e48ff"/><rect x="1017" y="192" width="3" height="6" fill="#12aaa8"/><rect x="1051" y="192" width="3" height="6" fill="#1e48ff"/><rect x="1054" y="192" width="4" height="6" fill="#12aaa8"/><rect x="972" y="198" width="4" height="6" fill="#12aaa8"/><rect x="976" y="198" width="3" height="6" fill="#1a88e8"/><rect x="1013" y="198" width="4" height="6" fill="#4cd84c"/><rect x="1027" y="198" width="3" height="6" fill="#1a88e8"/><rect x="1034" y="198" width="3" height="6" fill="#12aaa8"/><rect x="1068" y="198" width="3" height="6" fill="#1a88e8"/><rect x="993" y="204" width="3" height="6" fill="#1ec47c"/><rect x="1030" y="204" width="4" height="6" fill="#4cd84c"/><rect x="1075" y="204" width="3" height="6" fill="#1ec47c"/><rect x="969" y="210" width="3" height="8" fill="#1ec47c"/><rect x="972" y="210" width="4" height="8" fill="#4cd84c"/><rect x="1041" y="210" width="3" height="8" fill="#1ec47c"/><rect x="1058" y="210" width="3" height="8" fill="#1ec47c"/><rect x="1061" y="210" width="4" height="8" fill="#1ec47c"/><rect x="109" y="39" width="4" height="7" fill="#1e48ff"/><rect x="164" y="46" width="4" height="4" fill="#0a10b4"/><rect x="212" y="46" width="3" height="4" fill="#1e48ff"/><rect x="236" y="34" width="3" height="5" fill="#0a10b4"/><rect x="232" y="104" width="4" height="5" fill="#0a10b4"/><rect x="219" y="110" width="3" height="5" fill="#0a10b4"/><rect x="232" y="116" width="4" height="6" fill="#1a88e8"/><rect x="222" y="122" width="4" height="4" fill="#0a10b4"/><rect x="232" y="127" width="4" height="5" fill="#0a10b4"/><rect x="362" y="40" width="4" height="5" fill="#0a10b4"/><rect x="373" y="46" width="3" height="4" fill="#000060"/><rect x="499" y="51" width="4" height="5" fill="#1e48ff"/><rect x="506" y="116" width="3" height="5" fill="#1e48ff"/><rect x="711" y="34" width="4" height="5" fill="#0a10b4"/><rect x="749" y="46" width="3" height="4" fill="#0a10b4"/><rect x="633" y="127" width="3" height="5" fill="#0a10b4"/><rect x="735" y="133" width="4" height="5" fill="#0a10b4"/><rect x="910" y="51" width="3" height="5" fill="#1e48ff"/><rect x="961" y="57" width="3" height="5" fill="#1e48ff"/><rect x="951" y="63" width="3" height="5" fill="#1e48ff"/><rect x="974" y="75" width="4" height="5" fill="#0a10b4"/><rect x="1019" y="87" width="3" height="4" fill="#0a10b4"/><rect x="899" y="92" width="4" height="5" fill="#0a10b4"/><rect x="998" y="92" width="4" height="5" fill="#0a10b4"/><rect x="865" y="98" width="3" height="5" fill="#0a10b4"/><rect x="879" y="98" width="3" height="5" fill="#0a10b4"/><rect x="968" y="98" width="3" height="5" fill="#1e48ff"/><rect x="971" y="98" width="3" height="11" fill="#0a10b4"/><rect x="872" y="104" width="3" height="5" fill="#0a10b4"/><rect x="889" y="104" width="3" height="5" fill="#0a10b4"/><rect x="879" y="110" width="3" height="5" fill="#1e48ff"/><rect x="910" y="110" width="3" height="5" fill="#1e48ff"/><rect x="916" y="110" width="4" height="5" fill="#000060"/><rect x="957" y="110" width="4" height="5" fill="#000060"/><rect x="978" y="110" width="3" height="5" fill="#0a10b4"/><rect x="1077" y="110" width="3" height="5" fill="#0a10b4"/><rect x="886" y="116" width="3" height="5" fill="#1e48ff"/><rect x="944" y="116" width="3" height="5" fill="#1e48ff"/><rect x="974" y="116" width="7" height="5" fill="#1e48ff"/><rect x="1046" y="116" width="4" height="5" fill="#1e48ff"/><rect x="879" y="122" width="3" height="4" fill="#000060"/><rect x="940" y="122" width="4" height="4" fill="#000060"/><rect x="1009" y="122" width="3" height="4" fill="#000060"/><rect x="1016" y="122" width="3" height="4" fill="#0a10b4"/><rect x="1022" y="122" width="4" height="4" fill="#000060"/><rect x="838" y="127" width="3" height="5" fill="#0a10b4"/><rect x="896" y="127" width="3" height="12" fill="#0a10b4"/><rect x="920" y="127" width="3" height="5" fill="#0a10b4"/><rect x="944" y="127" width="3" height="5" fill="#0a10b4"/><rect x="981" y="127" width="4" height="12" fill="#0a10b4"/><rect x="865" y="133" width="7" height="6" fill="#1e48ff"/><rect x="899" y="132" width="4" height="8" fill="#1e48ff"/><rect x="974" y="133" width="4" height="6" fill="#0a10b4"/><rect x="1012" y="133" width="4" height="6" fill="#0a10b4"/><rect x="1029" y="133" width="4" height="6" fill="#0a10b4"/><rect x="1074" y="133" width="3" height="6" fill="#0a10b4"/></g><g clip-path="url(#p3clip)" fill="none" stroke-width="1" stroke-linejoin="round"><polyline points="107.4,509.7 107.4,490.1 111.1,491.2 111.1,509.7" stroke="#00ff00"/><polyline points="118.3,509.7 118.3,494.3" stroke="#00ff00"/><polyline points="125.5,509.7 125.5,487.1" stroke="#00ff00"/><polyline points="131.6,509.7 131.6,496.3 135.1,486.0 138.2,480.5 138.6,509.7" stroke="#00ff00"/><polyline points="148.5,509.7 148.5,496.3" stroke="#00ff00"/><polyline points="169.5,509.7 169.5,494.9 172.2,494.3 176.3,486.6 179.4,489.1 183.5,496.3 193.4,496.3 196.5,482.5 200.0,485.0 200.4,509.7" stroke="#00ff00"/><polyline points="210.3,509.7 210.3,494.9 213.4,495.7 213.4,509.7" stroke="#00ff00"/><polyline points="234.6,509.7 234.6,490.1" stroke="#00ff00"/><polyline points="251.4,509.7 251.4,490.1 254.5,488.1 254.5,509.7" stroke="#00ff00"/><polyline points="268.5,509.7 268.5,475.1" stroke="#00ff00"/><polyline points="275.5,509.7 275.5,476.8" stroke="#00ff00"/><polyline points="282.3,509.7 282.3,496.3" stroke="#00ff00"/><polyline points="319.4,509.7 319.4,471.6" stroke="#00ff00"/><polyline points="326.6,509.7 326.6,496.3" stroke="#00ff00"/><polyline points="174.9,509.7 177.3,498.4 179.4,502.5 181.5,499.4 184.5,503.1 186.6,501.5 189.7,507.6 191.7,501.5 195.9,496.3 200.0,492.8 203.1,494.3 206.2,495.3 210.3,494.9 213.4,496.3 216.4,499.4 219.5,504.5 220.6,509.7" stroke="#ff0000"/><polyline points="226.7,509.7 227.8,503.5 229.8,501.5 230.9,509.7" stroke="#ff0000"/><polyline points="239.1,509.7 241.6,501.5 243.2,509.7" stroke="#ff0000"/><polyline points="249.4,509.7 250.4,501.5 253.5,503.1 255.6,509.7" stroke="#ff0000"/><polyline points="104.3,509.7 104.3,481.9 107.4,473.7 111.5,469.6 115.6,472.2 118.7,477.2 121.8,469.6 125.5,476.3 129.0,469.6 132.1,468.1 135.8,470.2 138.2,482.9 141.9,481.3 146.0,475.1 148.5,476.8 148.5,509.7" stroke="#0000ff"/><polyline points="159.8,509.7 159.8,489.1 166.6,474.3 172.8,489.1 179.4,468.5 183.5,477.8 186.2,475.1 189.7,484.0 193.4,468.5 196.5,475.1 201.0,471.0 207.2,469.6 210.3,492.2 213.4,463.4 216.9,464.8 220.6,470.2 224.3,467.5 226.7,508.7 229.8,478.4 233.9,478.4 237.4,480.5 244.2,472.2 248.4,476.8 251.4,503.5 254.5,475.7 259.7,468.1 263.8,463.4 265.9,463.4 269.6,468.9 275.1,471.0 278.2,480.5 281.3,475.1 287.5,471.6 292.2,468.5 295.7,471.6 298.8,472.2 301.9,465.4 306.0,470.2 310.1,474.1 313.2,471.6 316.3,478.4 319.4,478.4 323.5,468.5 330.7,482.9 333.8,471.6 336.9,474.1 342.0,471.6" stroke="#0000ff"/><polyline points="360.6,509.7 360.6,489.1" stroke="#00ff00"/><polyline points="384.2,509.7 384.2,494.3" stroke="#00ff00"/><polyline points="398.2,509.7 398.2,494.9" stroke="#00ff00"/><polyline points="405.2,509.7 405.2,494.9" stroke="#00ff00"/><polyline points="425.4,509.7 425.4,493.8 429.5,496.3 429.5,509.7" stroke="#00ff00"/><polyline points="439.4,509.7 439.4,488.1" stroke="#00ff00"/><polyline points="459.4,509.7 459.4,486.0" stroke="#00ff00"/><polyline points="470.3,509.7 470.3,489.1" stroke="#00ff00"/><polyline points="476.4,509.7 476.4,485.4 480.6,490.1 483.4,487.1 487.6,493.6 487.6,509.7" stroke="#00ff00"/><polyline points="497.4,509.7 497.4,488.1" stroke="#00ff00"/><polyline points="507.3,509.7 507.3,496.3 511.4,494.9 514.5,462.4 517.6,487.1 517.6,509.7" stroke="#00ff00"/><polyline points="528.3,509.7 528.3,494.9 531.4,491.2 531.4,509.7" stroke="#00ff00"/><polyline points="538.6,509.7 538.6,486.0 541.7,474.7 541.7,509.7" stroke="#00ff00"/><polyline points="548.5,509.7 548.5,489.1" stroke="#00ff00"/><polyline points="558.2,509.7 558.2,492.2" stroke="#00ff00"/><polyline points="569.5,509.7 569.5,496.3 572.6,495.7 576.7,486.0 576.7,509.7" stroke="#00ff00"/><polyline points="582.9,509.7 582.9,489.1 588.0,473.7" stroke="#00ff00"/><polyline points="501.1,509.7 501.1,505.2" stroke="#ff0000"/><polyline points="541.7,509.7 542.7,504.5 544.8,507.6 546.8,505.2 548.9,507.2 551.0,504.5 553.0,506.6 555.1,504.5 556.1,509.7" stroke="#ff0000"/><polyline points="582.9,506.6 588.0,492.2" stroke="#ff0000"/><polyline points="341.0,472.6 347.6,465.4 350.3,473.1 353.4,466.5 357.5,473.1 360.6,472.6 364.7,480.9 367.3,484.0 371.5,469.6 374.3,486.6 378.1,472.6 381.1,467.5 384.2,481.9 388.3,475.7 391.4,480.5 394.9,469.6 398.2,470.2 401.7,478.8 405.8,469.6 412.0,473.1 415.5,484.0 418.8,466.5 425.4,478.4 429.5,475.7 435.7,467.5 442.3,481.3 446.4,471.2 450.1,476.3 453.2,476.3 456.3,470.2 460.0,487.1 463.5,492.8 466.6,471.2 473.2,481.9 480.6,466.5 487.2,477.8 490.2,474.7 494.4,482.5 497.9,484.0 504.6,470.2 507.7,474.7 511.4,488.1 514.9,473.7 517.6,476.8 521.7,470.6 526.3,473.1 529.3,472.2 535.5,478.4 538.6,471.2 541.7,475.7 545.8,471.6 548.5,474.3 553.0,468.5 556.1,470.6 559.2,479.2 562.3,478.4 565.8,485.0 569.5,481.5 572.6,489.5 576.7,470.2 582.9,486.6 587.0,468.5" stroke="#0000ff"/><polyline points="587.0,476.8 590.1,488.1 593.2,479.8 596.9,484.0 600.4,487.1 603.5,488.1 603.5,509.7" stroke="#00ff00"/><polyline points="610.3,509.7 610.3,489.1 613.8,488.7 617.9,482.9 620.3,484.6 624.1,493.2 627.1,487.1 630.6,488.7 630.6,509.7" stroke="#00ff00"/><polyline points="640.5,509.7 640.5,495.7" stroke="#00ff00"/><polyline points="664.2,509.7 664.2,485.4 668.3,478.4 671.4,481.9 671.4,509.7" stroke="#00ff00"/><polyline points="678.2,509.7 678.2,488.1" stroke="#00ff00"/><polyline points="705.4,509.7 705.4,496.3" stroke="#00ff00"/><polyline points="746.5,509.7 746.5,493.6" stroke="#00ff00"/><polyline points="757.4,509.7 757.4,494.9" stroke="#00ff00"/><polyline points="763.6,509.7 763.6,493.6" stroke="#00ff00"/><polyline points="774.3,509.7 774.3,492.8" stroke="#00ff00"/><polyline points="781.5,509.7 781.5,486.0" stroke="#00ff00"/><polyline points="791.2,509.7 791.2,487.1 794.5,491.2 798.6,492.2 798.6,509.7" stroke="#00ff00"/><polyline points="808.3,509.7 808.3,492.2" stroke="#00ff00"/><polyline points="815.5,509.7 815.5,482.9" stroke="#00ff00"/><polyline points="587.0,493.2 589.1,491.2 592.1,488.1 595.2,493.2 597.3,503.5 598.9,496.3 600.4,504.5 602.4,499.0 603.5,509.7" stroke="#ff0000"/><polyline points="605.5,509.7 607.6,499.4 609.6,507.6 613.8,501.5 615.8,504.5 617.9,498.4 619.9,501.0 622.4,497.8 624.1,503.9 626.1,509.7" stroke="#ff0000"/><polyline points="636.4,509.7 639.5,503.1 642.6,500.4 645.7,505.6 648.3,503.9 650.8,507.6 654.9,501.5 658.0,505.6 661.1,503.9 665.2,499.4 668.3,501.5 670.4,496.3 673.5,502.5 676.5,509.7" stroke="#ff0000"/><polyline points="587.0,468.5 589.5,478.4 593.2,480.9 596.9,481.9 599.8,488.1 603.5,469.6 606.6,475.1 610.7,464.8 617.5,469.6 620.3,499.4 620.3,509.7" stroke="#0000ff"/><polyline points="627.1,509.7 627.1,480.5" stroke="#0000ff"/><polyline points="640.5,509.7 640.5,495.3 644.2,475.1 647.1,482.9 651.8,479.2 654.5,497.3 658.6,468.1 661.5,482.9 661.5,509.7" stroke="#0000ff"/><polyline points="668.3,509.7 668.3,478.8 671.4,480.9 671.4,509.7" stroke="#0000ff"/><polyline points="678.2,509.7 678.2,480.5 681.7,480.9 681.7,509.7" stroke="#0000ff"/><polyline points="688.3,509.7 688.3,486.6 692.4,494.3 695.7,468.9 699.8,481.9 702.7,487.1 712.6,487.1 719.2,489.1 722.4,502.5 726.6,471.0 733.2,488.1 736.2,506.0 740.4,497.3 743.9,476.8 747.1,485.0 750.6,486.6 753.7,499.4 757.4,468.9 763.6,484.0 763.6,509.7" stroke="#0000ff"/><polyline points="770.2,509.7 770.2,478.8" stroke="#0000ff"/><polyline points="777.4,509.7 777.4,473.1 781.5,482.9 784.6,478.4 792.8,491.2 794.9,497.3 798.6,475.1 801.7,509.7" stroke="#0000ff"/><polyline points="811.4,509.7 811.4,499.4 815.5,484.0 815.5,509.7" stroke="#0000ff"/><polyline points="822.3,509.7 822.3,488.1 825.8,485.4 825.8,509.7" stroke="#0000ff"/><polyline points="833.0,509.7 833.0,502.5" stroke="#0000ff"/><polyline points="842.3,509.9 842.3,484.1" stroke="#00ff00"/><polyline points="852.6,509.9 852.6,481.4" stroke="#00ff00"/><polyline points="866.5,509.9 866.5,470.7 869.8,462.0 873.3,489.3 880.5,460.3 883.6,459.3 886.7,471.7 890.4,468.6 893.3,482.0 899.1,466.5 904.3,469.0 907.8,491.3 910.5,473.1 910.5,509.9" stroke="#00ff00"/><polyline points="924.5,509.9 924.5,473.1 927.6,477.9 927.6,509.9" stroke="#00ff00"/><polyline points="938.4,509.9 938.4,489.7 941.5,488.2 941.5,509.9" stroke="#00ff00"/><polyline points="965.3,509.9 965.3,474.4 969.4,474.4 975.6,467.6 979.7,474.8 982.2,468.2 982.2,509.9" stroke="#00ff00"/><polyline points="989.6,509.9 989.6,478.5 992.5,477.9 996.3,456.2 999.4,492.4 999.4,509.9" stroke="#00ff00"/><polyline points="1013.8,509.9 1013.8,488.2" stroke="#00ff00"/><polyline points="1023.1,509.9 1023.1,465.5 1027.3,471.7 1030.4,484.1 1033.5,464.5 1039.7,480.0 1039.7,509.9" stroke="#00ff00"/><polyline points="1050.4,509.9 1050.4,484.1 1054.5,478.9 1054.5,509.9" stroke="#00ff00"/><polyline points="1064.5,509.9 1064.5,466.9" stroke="#00ff00"/><polyline points="1070.7,509.9 1070.7,488.9 1074.8,491.3 1078.5,470.3" stroke="#00ff00"/><polyline points="863.6,509.9 868.1,492.4 873.3,498.6 876.4,497.5 879.5,501.7 882.6,500.6 884.7,504.8 887.1,509.9" stroke="#ff0000"/><polyline points="891.9,509.9 892.9,504.8 896.0,504.1 899.1,495.1 902.2,499.6 905.3,502.7 907.8,509.9" stroke="#ff0000"/><polyline points="923.5,509.9 923.5,506.2" stroke="#ff0000"/><polyline points="935.3,509.9 935.3,504.8" stroke="#ff0000"/><polyline points="954.9,509.9 954.9,504.1" stroke="#ff0000"/><polyline points="961.1,509.9 962.2,502.7 965.3,508.9" stroke="#ff0000"/><polyline points="967.3,509.9 968.4,497.9 973.5,497.1 975.6,499.6 977.7,502.7 980.8,501.7 983.9,505.8 985.9,509.9" stroke="#ff0000"/><polyline points="990.1,509.9 991.1,500.6 994.2,509.9" stroke="#ff0000"/><polyline points="1008.7,509.9 1008.7,506.8" stroke="#ff0000"/><polyline points="1012.8,509.9 1013.2,504.8 1014.9,508.9 1016.9,500.6 1019.0,509.9" stroke="#ff0000"/><polyline points="1024.2,509.9 1024.2,506.2" stroke="#ff0000"/><polyline points="1030.4,509.9 1030.4,501.3 1031.4,509.9" stroke="#ff0000"/><polyline points="1068.6,509.9 1068.6,505.4 1070.7,509.9" stroke="#ff0000"/><polyline points="839.2,509.9 839.2,505.8" stroke="#0000ff"/><polyline points="845.4,509.9 845.4,487.2" stroke="#0000ff"/><polyline points="852.6,509.9 852.6,504.8 856.4,501.3 856.4,509.9" stroke="#0000ff"/><polyline points="863.6,509.9 863.6,488.2 866.5,489.3 869.8,472.3 873.3,473.1 876.8,484.1 880.5,480.6 884.7,492.4 890.9,505.8 894.0,487.2 901.2,482.0 904.9,492.4 907.8,479.3 911.5,481.0 917.7,488.2 921.9,496.5 925.0,478.9 927.6,476.5 927.6,509.9" stroke="#0000ff"/><polyline points="934.3,509.9 934.3,492.4 938.4,502.7 941.5,485.5 945.6,494.4 948.7,509.9 956.0,497.9 959.1,499.6 962.2,494.4 965.3,492.4 968.4,472.7 973.1,468.6 975.6,482.0 979.7,488.2 985.9,499.6 989.0,500.6 992.5,471.1 996.3,490.3 999.4,493.0 999.4,509.9" stroke="#0000ff"/><polyline points="1006.6,509.9 1006.6,493.4 1013.8,474.4 1023.1,486.8 1030.4,474.4 1037.6,495.1 1040.7,480.6 1044.8,492.4 1047.9,487.2 1052.1,488.2 1057.2,478.5 1061.4,480.6 1068.6,483.1 1071.7,492.4 1074.8,476.5 1078.5,503.7" stroke="#0000ff"/></g><g shape-rendering="crispEdges" fill="#0a10b0"><rect x="588" y="374" width="7" height="6"/><rect x="589" y="371" width="2" height="3"/><rect x="592" y="364" width="2" height="4"/><rect x="592" y="382" width="2" height="3"/><rect x="588" y="380" width="1" height="1"/></g><g shape-rendering="crispEdges"><rect x="134" y="514" width="1" height="4" fill="#1010a8"/><rect x="172" y="514" width="2" height="9" fill="#1010a8"/><rect x="220" y="514" width="2" height="12" fill="#1010a8"/><rect x="185" y="526" width="1" height="5" fill="#1010a8"/><rect x="187" y="526" width="2" height="5" fill="#1010a8"/><rect x="197" y="523" width="1" height="8" fill="url(#bgrad)"/><rect x="109" y="530" width="2" height="22" fill="url(#bgrad)"/><rect x="130" y="527" width="3" height="29" fill="#1010a8"/><rect x="135" y="530" width="2" height="22" fill="url(#bgrad)"/><rect x="142" y="527" width="2" height="4" fill="#1010a8"/><rect x="141" y="539" width="1" height="13" fill="url(#bgrad)"/><rect x="119" y="540" width="1" height="16" fill="url(#bgrad)"/><rect x="122" y="539" width="1" height="13" fill="url(#bgrad)"/><rect x="122" y="552" width="1" height="16" fill="#1a2ce0"/><rect x="148" y="534" width="1" height="18" fill="url(#bgrad)"/><rect x="148" y="552" width="1" height="29" fill="#1a2ce0"/><rect x="149" y="555" width="1" height="13" fill="#1a2ce0"/><rect x="156" y="534" width="1" height="18" fill="url(#bgrad)"/><rect x="160" y="531" width="1" height="21" fill="#1010a8"/><rect x="161" y="534" width="3" height="18" fill="#1010a8"/><rect x="171" y="527" width="3" height="29" fill="url(#bgrad)"/><rect x="175" y="530" width="1" height="22" fill="url(#bgrad)"/><rect x="196" y="530" width="1" height="22" fill="url(#bgrad)"/><rect x="198" y="534" width="3" height="18" fill="url(#bgrad)"/><rect x="205" y="527" width="1" height="25" fill="url(#bgrad)"/><rect x="206" y="527" width="2" height="4" fill="#1010a8"/><rect x="224" y="530" width="2" height="26" fill="url(#bgrad)"/><rect x="232" y="527" width="3" height="29" fill="#1010a8"/><rect x="248" y="530" width="1" height="22" fill="url(#bgrad)"/><rect x="252" y="530" width="1" height="26" fill="url(#bgrad)"/><rect x="97" y="551" width="3" height="5" fill="#1a2ce0"/><rect x="97" y="556" width="1" height="25" fill="#1a2ce0"/><rect x="101" y="568" width="2" height="13" fill="#1a2ce0"/><rect x="108" y="555" width="1" height="26" fill="#1a2ce0"/><rect x="109" y="551" width="2" height="5" fill="#1a2ce0"/><rect x="109" y="580" width="2" height="5" fill="#1a2ce0"/><rect x="113" y="580" width="2" height="5" fill="#1a2ce0"/><rect x="118" y="580" width="1" height="22" fill="#12a4b0"/><rect x="124" y="580" width="2" height="22" fill="#1a84e0"/><rect x="126" y="555" width="1" height="13" fill="#1a2ce0"/><rect x="131" y="580" width="2" height="5" fill="#1a2ce0"/><rect x="135" y="568" width="2" height="13" fill="#1a2ce0"/><rect x="156" y="580" width="1" height="5" fill="#1a2ce0"/><rect x="161" y="584" width="3" height="18" fill="#12a4b0"/><rect x="167" y="551" width="1" height="5" fill="#1a2ce0"/><rect x="174" y="568" width="1" height="13" fill="#1a2ce0"/><rect x="193" y="551" width="3" height="17" fill="#1a2ce0"/><rect x="197" y="555" width="1" height="13" fill="#1a2ce0"/><rect x="202" y="551" width="2" height="5" fill="#1010a8"/><rect x="196" y="580" width="1" height="22" fill="#12a4b0"/><rect x="200" y="568" width="1" height="13" fill="#1a2ce0"/><rect x="205" y="580" width="1" height="5" fill="#1a2ce0"/><rect x="209" y="580" width="6" height="5" fill="#1a2ce0"/><rect x="211" y="551" width="1" height="30" fill="#1a2ce0"/><rect x="212" y="581" width="1" height="21" fill="#12a4b0"/><rect x="216" y="551" width="1" height="34" fill="#1a2ce0"/><rect x="220" y="555" width="2" height="26" fill="#1a2ce0"/><rect x="227" y="580" width="1" height="5" fill="#1a2ce0"/><rect x="237" y="551" width="1" height="34" fill="#1a2ce0"/><rect x="239" y="555" width="2" height="26" fill="#1a2ce0"/><rect x="243" y="555" width="2" height="26" fill="#1a2ce0"/><rect x="246" y="555" width="2" height="26" fill="#1a2ce0"/><rect x="249" y="551" width="1" height="17" fill="#1a2ce0"/><rect x="254" y="551" width="2" height="5" fill="#1a2ce0"/><rect x="258" y="580" width="2" height="5" fill="#1a2ce0"/><rect x="118" y="600" width="1" height="30" fill="#12a4b0"/><rect x="124" y="600" width="2" height="19" fill="#1a84e0"/><rect x="130" y="606" width="1" height="13" fill="#1a2ce0"/><rect x="131" y="619" width="2" height="11" fill="#1a2ce0"/><rect x="141" y="606" width="1" height="13" fill="#1a2ce0"/><rect x="139" y="619" width="2" height="45" fill="#20c080"/><rect x="139" y="664" width="2" height="26" fill="url(#ygrad)"/><rect x="148" y="606" width="1" height="13" fill="#12a4b0"/><rect x="161" y="600" width="3" height="6" fill="#12a4b0"/><rect x="175" y="606" width="1" height="13" fill="#12a4b0"/><rect x="196" y="600" width="1" height="6" fill="#12a4b0"/><rect x="212" y="600" width="1" height="6" fill="#1a84e0"/><rect x="228" y="606" width="2" height="24" fill="#12a4b0"/><rect x="257" y="606" width="1" height="13" fill="#12a4b0"/><rect x="135" y="630" width="2" height="17" fill="url(#ygrad)"/><rect x="159" y="630" width="1" height="17" fill="url(#ygrad)"/><rect x="193" y="630" width="1" height="17" fill="#1a2ce0"/><rect x="198" y="630" width="4" height="17" fill="url(#ygrad)"/><rect x="211" y="619" width="1" height="28" fill="#20c080"/><rect x="213" y="630" width="2" height="17" fill="#1a84e0"/><rect x="222" y="619" width="1" height="11" fill="#20c080"/><rect x="226" y="630" width="1" height="42" fill="#1a84e0"/><rect x="235" y="630" width="2" height="34" fill="url(#ygrad)"/><rect x="238" y="630" width="1" height="34" fill="url(#ygrad)"/><rect x="241" y="630" width="1" height="34" fill="url(#ygrad)"/><rect x="243" y="630" width="2" height="34" fill="#1a84e0"/><rect x="249" y="630" width="1" height="34" fill="url(#ygrad)"/><rect x="254" y="630" width="2" height="34" fill="url(#ygrad)"/><rect x="165" y="647" width="2" height="43" fill="url(#ygrad)"/><rect x="178" y="647" width="1" height="17" fill="url(#ygrad)"/><rect x="191" y="647" width="6" height="17" fill="url(#ygrad)"/><rect x="197" y="647" width="19" height="17" fill="url(#ygrad)"/><rect x="219" y="647" width="1" height="17" fill="url(#ygrad)"/><rect x="230" y="647" width="1" height="17" fill="url(#ygrad)"/><rect x="246" y="647" width="2" height="17" fill="url(#ygrad)"/><rect x="174" y="664" width="86" height="26" fill="url(#ygrad)"/><rect x="98" y="676" width="3" height="14" fill="url(#ygrad)"/><rect x="103" y="676" width="2" height="14" fill="url(#ygrad)"/><rect x="107" y="676" width="1" height="14" fill="url(#ygrad)"/><rect x="116" y="676" width="4" height="14" fill="url(#ygrad)"/><rect x="118" y="664" width="2" height="12" fill="url(#ygrad)"/><rect x="122" y="676" width="1" height="14" fill="url(#ygrad)"/><rect x="126" y="676" width="1" height="14" fill="url(#ygrad)"/><rect x="131" y="676" width="6" height="14" fill="url(#ygrad)"/><rect x="131" y="664" width="3" height="12" fill="url(#ygrad)"/><rect x="137" y="664" width="1" height="26" fill="url(#ygrad)"/><rect x="142" y="664" width="2" height="26" fill="url(#ygrad)"/><rect x="146" y="676" width="3" height="14" fill="url(#ygrad)"/><rect x="152" y="676" width="1" height="14" fill="url(#ygrad)"/><rect x="156" y="676" width="1" height="14" fill="url(#ygrad)"/><rect x="160" y="676" width="4" height="14" fill="url(#ygrad)"/><rect x="161" y="664" width="2" height="12" fill="url(#ygrad)"/><rect x="167" y="664" width="4" height="26" fill="url(#ygrad)"/><rect x="275" y="514" width="1" height="8" fill="#1010a8"/><rect x="316" y="514" width="1" height="5" fill="#1010a8"/><rect x="399" y="514" width="2" height="5" fill="#1010a8"/><rect x="260" y="527" width="1" height="4" fill="#1010a8"/><rect x="271" y="526" width="1" height="5" fill="#1010a8"/><rect x="278" y="526" width="1" height="5" fill="#1010a8"/><rect x="287" y="527" width="3" height="4" fill="#1010a8"/><rect x="302" y="523" width="2" height="8" fill="#1010a8"/><rect x="313" y="527" width="2" height="4" fill="#1010a8"/><rect x="328" y="522" width="3" height="9" fill="#1010a8"/><rect x="332" y="526" width="3" height="5" fill="#1010a8"/><rect x="381" y="522" width="3" height="9" fill="#1010a8"/><rect x="391" y="527" width="2" height="4" fill="#1010a8"/><rect x="408" y="527" width="1" height="4" fill="#1010a8"/><rect x="263" y="530" width="1" height="26" fill="url(#bgrad)"/><rect x="265" y="530" width="2" height="22" fill="url(#bgrad)"/><rect x="268" y="527" width="1" height="25" fill="url(#bgrad)"/><rect x="269" y="551" width="2" height="5" fill="#1a2ce0"/><rect x="272" y="539" width="2" height="17" fill="url(#bgrad)"/><rect x="280" y="534" width="2" height="22" fill="url(#bgrad)"/><rect x="284" y="551" width="2" height="30" fill="#1a2ce0"/><rect x="283" y="556" width="1" height="12" fill="#1a2ce0"/><rect x="290" y="551" width="3" height="5" fill="#1a2ce0"/><rect x="298" y="530" width="1" height="22" fill="url(#bgrad)"/><rect x="301" y="530" width="1" height="26" fill="url(#bgrad)"/><rect x="304" y="530" width="1" height="22" fill="url(#bgrad)"/><rect x="310" y="551" width="2" height="5" fill="#1a2ce0"/><rect x="315" y="530" width="2" height="26" fill="url(#bgrad)"/><rect x="317" y="530" width="3" height="22" fill="url(#bgrad)"/><rect x="320" y="530" width="3" height="26" fill="url(#bgrad)"/><rect x="324" y="530" width="3" height="22" fill="url(#bgrad)"/><rect x="331" y="527" width="4" height="29" fill="url(#bgrad)"/><rect x="339" y="530" width="2" height="22" fill="url(#bgrad)"/><rect x="341" y="551" width="4" height="34" fill="#1a2ce0"/><rect x="346" y="530" width="1" height="22" fill="url(#bgrad)"/><rect x="349" y="540" width="1" height="16" fill="url(#bgrad)"/><rect x="350" y="527" width="4" height="25" fill="url(#bgrad)"/><rect x="358" y="527" width="2" height="25" fill="url(#bgrad)"/><rect x="358" y="552" width="2" height="29" fill="#1a2ce0"/><rect x="358" y="581" width="2" height="21" fill="#1a84e0"/><rect x="367" y="551" width="1" height="5" fill="#1a2ce0"/><rect x="371" y="551" width="1" height="5" fill="#1a2ce0"/><rect x="376" y="531" width="1" height="21" fill="url(#bgrad)"/><rect x="379" y="527" width="3" height="29" fill="url(#bgrad)"/><rect x="385" y="526" width="2" height="30" fill="url(#bgrad)"/><rect x="394" y="527" width="3" height="29" fill="url(#bgrad)"/><rect x="398" y="523" width="1" height="29" fill="url(#bgrad)"/><rect x="398" y="552" width="1" height="16" fill="#1a2ce0"/><rect x="402" y="530" width="1" height="22" fill="url(#bgrad)"/><rect x="418" y="527" width="2" height="25" fill="url(#bgrad)"/><rect x="264" y="556" width="1" height="12" fill="#1a2ce0"/><rect x="259" y="580" width="1" height="5" fill="#1a2ce0"/><rect x="295" y="568" width="2" height="13" fill="#1a2ce0"/><rect x="302" y="568" width="2" height="13" fill="#1a2ce0"/><rect x="309" y="568" width="1" height="13" fill="#1a2ce0"/><rect x="312" y="580" width="1" height="5" fill="#1a2ce0"/><rect x="331" y="568" width="1" height="17" fill="#1a2ce0"/><rect x="334" y="580" width="1" height="5" fill="#1a2ce0"/><rect x="336" y="555" width="2" height="13" fill="#1a2ce0"/><rect x="339" y="580" width="3" height="5" fill="#1a2ce0"/><rect x="349" y="580" width="2" height="5" fill="#1a2ce0"/><rect x="350" y="556" width="1" height="25" fill="#1a2ce0"/><rect x="353" y="580" width="1" height="5" fill="#1a2ce0"/><rect x="365" y="580" width="3" height="22" fill="#1a84e0"/><rect x="368" y="580" width="1" height="5" fill="#1a2ce0"/><rect x="377" y="568" width="2" height="13" fill="#1a2ce0"/><rect x="383" y="555" width="3" height="26" fill="#1a2ce0"/><rect x="388" y="568" width="2" height="13" fill="#1a2ce0"/><rect x="391" y="555" width="2" height="13" fill="#1a2ce0"/><rect x="395" y="580" width="2" height="5" fill="#1a2ce0"/><rect x="397" y="568" width="1" height="13" fill="#1a2ce0"/><rect x="402" y="580" width="1" height="5" fill="#1a2ce0"/><rect x="409" y="568" width="1" height="17" fill="#1a2ce0"/><rect x="414" y="551" width="2" height="30" fill="#1a2ce0"/><rect x="317" y="584" width="2" height="18" fill="#1a84e0"/><rect x="324" y="584" width="1" height="18" fill="#12a4b0"/><rect x="327" y="584" width="1" height="18" fill="#12a4b0"/><rect x="375" y="584" width="1" height="18" fill="#1a84e0"/><rect x="391" y="584" width="2" height="18" fill="#1a84e0"/><rect x="317" y="600" width="2" height="6" fill="#1a84e0"/><rect x="324" y="600" width="1" height="6" fill="#12a4b0"/><rect x="327" y="600" width="1" height="19" fill="#12a4b0"/><rect x="358" y="600" width="2" height="6" fill="#1a84e0"/><rect x="365" y="600" width="2" height="6" fill="#1a84e0"/><rect x="375" y="600" width="1" height="47" fill="#12a4b0"/><rect x="391" y="600" width="2" height="6" fill="#1a84e0"/><rect x="265" y="606" width="2" height="13" fill="#1a84e0"/><rect x="276" y="606" width="2" height="13" fill="#12a4b0"/><rect x="289" y="606" width="1" height="24" fill="#12a4b0"/><rect x="291" y="606" width="2" height="13" fill="#20c080"/><rect x="306" y="606" width="2" height="24" fill="#1a84e0"/><rect x="356" y="606" width="1" height="13" fill="#12a4b0"/><rect x="405" y="606" width="1" height="24" fill="#1a84e0"/><rect x="409" y="619" width="1" height="11" fill="#12a4b0"/><rect x="343" y="619" width="2" height="11" fill="#20c080"/><rect x="334" y="630" width="1" height="17" fill="#12a4b0"/><rect x="347" y="630" width="2" height="17" fill="url(#ygrad)"/><rect x="349" y="647" width="1" height="17" fill="url(#ygrad)"/><rect x="367" y="619" width="1" height="45" fill="#1a84e0"/><rect x="367" y="664" width="1" height="26" fill="url(#ygrad)"/><rect x="263" y="647" width="1" height="17" fill="url(#ygrad)"/><rect x="271" y="647" width="1" height="43" fill="url(#ygrad)"/><rect x="305" y="647" width="1" height="43" fill="url(#ygrad)"/><rect x="320" y="647" width="1" height="29" fill="url(#ygrad)"/><rect x="364" y="647" width="1" height="17" fill="url(#ygrad)"/><rect x="382" y="647" width="1" height="17" fill="#1a84e0"/><rect x="259" y="664" width="8" height="26" fill="url(#ygrad)"/><rect x="268" y="664" width="1" height="26" fill="url(#ygrad)"/><rect x="269" y="676" width="3" height="14" fill="url(#ygrad)"/><rect x="274" y="664" width="8" height="26" fill="url(#ygrad)"/><rect x="283" y="664" width="1" height="26" fill="url(#ygrad)"/><rect x="289" y="676" width="1" height="14" fill="url(#ygrad)"/><rect x="295" y="664" width="2" height="26" fill="url(#ygrad)"/><rect x="301" y="676" width="1" height="14" fill="url(#ygrad)"/><rect x="320" y="676" width="3" height="14" fill="url(#ygrad)"/><rect x="324" y="664" width="1" height="26" fill="url(#ygrad)"/><rect x="327" y="676" width="1" height="14" fill="url(#ygrad)"/><rect x="331" y="664" width="3" height="26" fill="url(#ygrad)"/><rect x="335" y="664" width="1" height="26" fill="url(#ygrad)"/><rect x="341" y="676" width="1" height="14" fill="url(#ygrad)"/><rect x="347" y="676" width="2" height="14" fill="url(#ygrad)"/><rect x="350" y="676" width="1" height="14" fill="url(#ygrad)"/><rect x="373" y="676" width="2" height="14" fill="url(#ygrad)"/><rect x="379" y="676" width="1" height="14" fill="url(#ygrad)"/><rect x="386" y="676" width="1" height="14" fill="url(#ygrad)"/><rect x="395" y="676" width="3" height="14" fill="url(#ygrad)"/><rect x="397" y="664" width="1" height="12" fill="url(#ygrad)"/><rect x="399" y="676" width="2" height="14" fill="url(#ygrad)"/><rect x="408" y="676" width="1" height="14" fill="url(#ygrad)"/><rect x="416" y="676" width="1" height="14" fill="url(#ygrad)"/><rect x="423" y="676" width="1" height="14" fill="url(#ygrad)"/><rect x="429" y="514" width="2" height="9" fill="#1010a8"/><rect x="481" y="514" width="2" height="13" fill="#1010a8"/><rect x="481" y="527" width="2" height="25" fill="url(#bgrad)"/><rect x="577" y="514" width="2" height="9" fill="#1010a8"/><rect x="425" y="527" width="2" height="25" fill="url(#bgrad)"/><rect x="429" y="539" width="2" height="13" fill="url(#bgrad)"/><rect x="444" y="526" width="2" height="5" fill="#1010a8"/><rect x="447" y="530" width="2" height="26" fill="url(#bgrad)"/><rect x="457" y="523" width="1" height="8" fill="#1010a8"/><rect x="460" y="540" width="1" height="12" fill="url(#bgrad)"/><rect x="462" y="531" width="2" height="21" fill="url(#bgrad)"/><rect x="469" y="539" width="1" height="17" fill="url(#bgrad)"/><rect x="472" y="527" width="1" height="4" fill="#1010a8"/><rect x="476" y="526" width="1" height="5" fill="#1010a8"/><rect x="480" y="527" width="4" height="29" fill="url(#bgrad)"/><rect x="484" y="551" width="2" height="5" fill="#1a2ce0"/><rect x="487" y="551" width="1" height="5" fill="#1a2ce0"/><rect x="491" y="551" width="1" height="5" fill="#1a2ce0"/><rect x="496" y="535" width="3" height="21" fill="url(#bgrad)"/><rect x="501" y="530" width="2" height="26" fill="url(#bgrad)"/><rect x="503" y="527" width="2" height="4" fill="#1010a8"/><rect x="510" y="527" width="2" height="29" fill="url(#bgrad)"/><rect x="525" y="530" width="2" height="22" fill="url(#bgrad)"/><rect x="533" y="527" width="2" height="4" fill="#1010a8"/><rect x="543" y="530" width="5" height="22" fill="url(#bgrad)"/><rect x="542" y="551" width="5" height="5" fill="#1a2ce0"/><rect x="550" y="551" width="1" height="17" fill="#1a2ce0"/><rect x="558" y="527" width="1" height="4" fill="#1010a8"/><rect x="563" y="530" width="2" height="22" fill="url(#bgrad)"/><rect x="572" y="527" width="2" height="25" fill="url(#bgrad)"/><rect x="572" y="552" width="2" height="16" fill="#1a2ce0"/><rect x="577" y="540" width="2" height="12" fill="url(#bgrad)"/><rect x="577" y="552" width="2" height="33" fill="#1a2ce0"/><rect x="580" y="530" width="1" height="22" fill="url(#bgrad)"/><rect x="583" y="526" width="2" height="30" fill="url(#bgrad)"/><rect x="587" y="551" width="1" height="5" fill="#1a2ce0"/><rect x="435" y="551" width="1" height="5" fill="#1a2ce0"/><rect x="440" y="551" width="2" height="30" fill="#1a2ce0"/><rect x="432" y="568" width="2" height="13" fill="#1a2ce0"/><rect x="428" y="580" width="1" height="5" fill="#1a2ce0"/><rect x="444" y="580" width="2" height="5" fill="#1a2ce0"/><rect x="453" y="580" width="1" height="5" fill="#1a2ce0"/><rect x="457" y="568" width="1" height="13" fill="#1a2ce0"/><rect x="460" y="568" width="1" height="13" fill="#1a2ce0"/><rect x="460" y="580" width="4" height="5" fill="#1a2ce0"/><rect x="469" y="580" width="1" height="5" fill="#1a2ce0"/><rect x="473" y="555" width="2" height="13" fill="#1a2ce0"/><rect x="475" y="580" width="1" height="5" fill="#1a2ce0"/><rect x="483" y="555" width="1" height="13" fill="#1a2ce0"/><rect x="486" y="580" width="1" height="5" fill="#1a2ce0"/><rect x="496" y="580" width="2" height="5" fill="#1a2ce0"/><rect x="513" y="555" width="1" height="13" fill="#1a2ce0"/><rect x="517" y="555" width="1" height="13" fill="#1a2ce0"/><rect x="520" y="555" width="1" height="26" fill="#1a2ce0"/><rect x="522" y="555" width="2" height="13" fill="#1a2ce0"/><rect x="521" y="580" width="1" height="5" fill="#1a2ce0"/><rect x="533" y="555" width="2" height="26" fill="#1a2ce0"/><rect x="554" y="555" width="1" height="13" fill="#1a2ce0"/><rect x="559" y="555" width="3" height="13" fill="#1a2ce0"/><rect x="563" y="568" width="2" height="13" fill="#1a2ce0"/><rect x="558" y="580" width="1" height="5" fill="#1a2ce0"/><rect x="434" y="584" width="1" height="18" fill="#1a84e0"/><rect x="447" y="584" width="2" height="18" fill="#1a84e0"/><rect x="453" y="584" width="2" height="18" fill="#1a84e0"/><rect x="479" y="584" width="1" height="18" fill="#1a84e0"/><rect x="483" y="584" width="1" height="18" fill="#1a84e0"/><rect x="487" y="584" width="1" height="18" fill="#1a2ce0"/><rect x="499" y="580" width="2" height="22" fill="#1a2ce0"/><rect x="503" y="580" width="2" height="22" fill="#1a84e0"/><rect x="517" y="584" width="1" height="18" fill="#12a4b0"/><rect x="535" y="584" width="1" height="18" fill="#1a84e0"/><rect x="537" y="580" width="2" height="22" fill="#1a84e0"/><rect x="543" y="584" width="1" height="18" fill="#1a84e0"/><rect x="547" y="584" width="1" height="18" fill="#1a84e0"/><rect x="434" y="600" width="1" height="19" fill="#1a84e0"/><rect x="447" y="600" width="2" height="6" fill="#1a84e0"/><rect x="453" y="600" width="2" height="6" fill="#1a84e0"/><rect x="453" y="606" width="1" height="13" fill="#12a4b0"/><rect x="479" y="600" width="1" height="6" fill="#1a84e0"/><rect x="483" y="600" width="1" height="19" fill="#12a4b0"/><rect x="487" y="600" width="1" height="6" fill="#1a2ce0"/><rect x="499" y="600" width="2" height="6" fill="#1a2ce0"/><rect x="503" y="600" width="2" height="19" fill="#1a2ce0"/><rect x="517" y="600" width="1" height="6" fill="#12a4b0"/><rect x="535" y="600" width="1" height="6" fill="#1a84e0"/><rect x="537" y="600" width="2" height="6" fill="#1a84e0"/><rect x="543" y="600" width="1" height="6" fill="#1a84e0"/><rect x="547" y="600" width="1" height="6" fill="#1a84e0"/><rect x="544" y="606" width="2" height="13" fill="#1a84e0"/><rect x="488" y="606" width="2" height="22" fill="#1a84e0"/><rect x="488" y="628" width="2" height="36" fill="url(#ygrad)"/><rect x="488" y="664" width="2" height="26" fill="url(#ygrad)"/><rect x="498" y="606" width="1" height="13" fill="#12a4b0"/><rect x="510" y="606" width="2" height="13" fill="#1a84e0"/><rect x="524" y="606" width="1" height="13" fill="#12a4b0"/><rect x="554" y="606" width="1" height="24" fill="#12a4b0"/><rect x="570" y="606" width="2" height="24" fill="#1a84e0"/><rect x="587" y="619" width="1" height="11" fill="#12a4b0"/><rect x="449" y="619" width="1" height="11" fill="#12a4b0"/><rect x="455" y="619" width="2" height="11" fill="#1a84e0"/><rect x="454" y="630" width="1" height="17" fill="#12a4b0"/><rect x="457" y="630" width="1" height="17" fill="#12a4b0"/><rect x="466" y="619" width="2" height="11" fill="#12a4b0"/><rect x="481" y="619" width="2" height="11" fill="#20c080"/><rect x="506" y="619" width="1" height="28" fill="#12a4b0"/><rect x="522" y="630" width="2" height="17" fill="#12a4b0"/><rect x="444" y="647" width="2" height="17" fill="url(#ygrad)"/><rect x="470" y="647" width="2" height="17" fill="url(#ygrad)"/><rect x="512" y="647" width="1" height="17" fill="url(#ygrad)"/><rect x="425" y="664" width="2" height="26" fill="url(#ygrad)"/><rect x="423" y="676" width="1" height="14" fill="url(#ygrad)"/><rect x="431" y="676" width="1" height="14" fill="url(#ygrad)"/><rect x="434" y="676" width="1" height="14" fill="url(#ygrad)"/><rect x="440" y="676" width="3" height="14" fill="url(#ygrad)"/><rect x="446" y="676" width="4" height="14" fill="url(#ygrad)"/><rect x="449" y="664" width="1" height="12" fill="url(#ygrad)"/><rect x="453" y="664" width="1" height="12" fill="url(#ygrad)"/><rect x="453" y="676" width="5" height="14" fill="url(#ygrad)"/><rect x="461" y="676" width="4" height="14" fill="url(#ygrad)"/><rect x="469" y="676" width="1" height="14" fill="url(#ygrad)"/><rect x="473" y="676" width="2" height="14" fill="url(#ygrad)"/><rect x="484" y="664" width="2" height="26" fill="url(#ygrad)"/><rect x="492" y="664" width="2" height="26" fill="url(#ygrad)"/><rect x="501" y="664" width="1" height="26" fill="url(#ygrad)"/><rect x="503" y="664" width="2" height="26" fill="url(#ygrad)"/><rect x="509" y="664" width="1" height="12" fill="#1a84e0"/><rect x="509" y="676" width="1" height="14" fill="url(#ygrad)"/><rect x="516" y="676" width="4" height="14" fill="url(#ygrad)"/><rect x="518" y="664" width="2" height="12" fill="url(#ygrad)"/><rect x="521" y="664" width="1" height="26" fill="url(#ygrad)"/><rect x="525" y="676" width="2" height="14" fill="url(#ygrad)"/><rect x="528" y="664" width="1" height="26" fill="url(#ygrad)"/><rect x="532" y="676" width="1" height="14" fill="url(#ygrad)"/><rect x="537" y="664" width="51" height="26" fill="url(#ygrad)"/><rect x="548" y="647" width="15" height="17" fill="url(#ygrad)"/><rect x="553" y="630" width="4" height="17" fill="url(#ygrad)"/><rect x="559" y="630" width="3" height="17" fill="url(#ygrad)"/><rect x="539" y="647" width="1" height="17" fill="url(#ygrad)"/><rect x="542" y="647" width="1" height="17" fill="url(#ygrad)"/><rect x="565" y="647" width="1" height="17" fill="url(#ygrad)"/><rect x="569" y="647" width="1" height="17" fill="url(#ygrad)"/><rect x="573" y="647" width="1" height="17" fill="url(#ygrad)"/><rect x="579" y="647" width="1" height="17" fill="url(#ygrad)"/><rect x="589" y="530" width="3" height="22" fill="url(#bgrad)"/><rect x="592" y="527" width="2" height="4" fill="#1010a8"/><rect x="587" y="551" width="1" height="5" fill="#1a2ce0"/><rect x="592" y="555" width="2" height="13" fill="#1a2ce0"/><rect x="595" y="568" width="1" height="17" fill="#1a2ce0"/><rect x="594" y="580" width="1" height="5" fill="#1a2ce0"/><rect x="600" y="555" width="2" height="13" fill="#1a2ce0"/><rect x="602" y="568" width="1" height="17" fill="#1a2ce0"/><rect x="603" y="551" width="2" height="5" fill="#1a2ce0"/><rect x="603" y="584" width="2" height="18" fill="#12a4b0"/><rect x="606" y="527" width="1" height="25" fill="url(#bgrad)"/><rect x="606" y="552" width="1" height="16" fill="#1a2ce0"/><rect x="611" y="551" width="2" height="5" fill="#1a2ce0"/><rect x="615" y="551" width="3" height="30" fill="#1a2ce0"/><rect x="618" y="527" width="2" height="4" fill="#1010a8"/><rect x="620" y="551" width="1" height="17" fill="#1a2ce0"/><rect x="621" y="551" width="3" height="5" fill="#1a2ce0"/><rect x="625" y="530" width="1" height="26" fill="url(#bgrad)"/><rect x="625" y="584" width="1" height="18" fill="#1a84e0"/><rect x="629" y="551" width="2" height="5" fill="#1a2ce0"/><rect x="633" y="535" width="2" height="17" fill="url(#bgrad)"/><rect x="635" y="551" width="1" height="34" fill="#1a2ce0"/><rect x="637" y="555" width="2" height="13" fill="#1a2ce0"/><rect x="640" y="584" width="1" height="18" fill="#1a84e0"/><rect x="643" y="534" width="1" height="18" fill="url(#bgrad)"/><rect x="643" y="552" width="1" height="29" fill="#1a2ce0"/><rect x="646" y="568" width="1" height="13" fill="#1a2ce0"/><rect x="650" y="530" width="2" height="26" fill="url(#bgrad)"/><rect x="652" y="555" width="2" height="26" fill="#1a2ce0"/><rect x="654" y="551" width="1" height="5" fill="#1a2ce0"/><rect x="656" y="530" width="2" height="26" fill="url(#bgrad)"/><rect x="658" y="555" width="1" height="13" fill="#1a2ce0"/><rect x="659" y="551" width="3" height="5" fill="#1a2ce0"/><rect x="661" y="526" width="1" height="26" fill="url(#bgrad)"/><rect x="661" y="552" width="1" height="16" fill="#1a2ce0"/><rect x="662" y="568" width="1" height="13" fill="#1a2ce0"/><rect x="659" y="580" width="2" height="5" fill="#1a2ce0"/><rect x="669" y="527" width="1" height="4" fill="#1010a8"/><rect x="673" y="551" width="1" height="5" fill="#1a2ce0"/><rect x="674" y="526" width="3" height="5" fill="#1010a8"/><rect x="676" y="530" width="1" height="22" fill="url(#bgrad)"/><rect x="676" y="552" width="1" height="16" fill="#1a2ce0"/><rect x="680" y="526" width="2" height="30" fill="url(#bgrad)"/><rect x="687" y="551" width="1" height="5" fill="#1a2ce0"/><rect x="688" y="580" width="1" height="22" fill="#1a84e0"/><rect x="689" y="527" width="2" height="4" fill="#1010a8"/><rect x="689" y="555" width="3" height="13" fill="#1a2ce0"/><rect x="693" y="551" width="6" height="5" fill="#1010a8"/><rect x="695" y="530" width="1" height="22" fill="url(#bgrad)"/><rect x="698" y="534" width="1" height="18" fill="url(#bgrad)"/><rect x="698" y="580" width="1" height="22" fill="#12a4b0"/><rect x="700" y="527" width="2" height="4" fill="#1010a8"/><rect x="700" y="555" width="2" height="13" fill="#1a2ce0"/><rect x="702" y="580" width="4" height="5" fill="#1a2ce0"/><rect x="706" y="530" width="2" height="26" fill="url(#bgrad)"/><rect x="711" y="568" width="2" height="13" fill="#1a2ce0"/><rect x="713" y="531" width="1" height="21" fill="url(#bgrad)"/><rect x="718" y="551" width="1" height="5" fill="#1a2ce0"/><rect x="718" y="580" width="1" height="5" fill="#1a2ce0"/><rect x="722" y="526" width="4" height="5" fill="#1010a8"/><rect x="724" y="530" width="2" height="22" fill="url(#bgrad)"/><rect x="724" y="552" width="2" height="16" fill="#1a2ce0"/><rect x="725" y="584" width="1" height="18" fill="#1a84e0"/><rect x="730" y="580" width="2" height="5" fill="#1a2ce0"/><rect x="732" y="555" width="2" height="26" fill="#1a2ce0"/><rect x="736" y="551" width="1" height="17" fill="#1a2ce0"/><rect x="737" y="568" width="2" height="13" fill="#1a2ce0"/><rect x="740" y="584" width="1" height="18" fill="#1a84e0"/><rect x="741" y="535" width="2" height="17" fill="url(#bgrad)"/><rect x="744" y="580" width="1" height="5" fill="#1a2ce0"/><rect x="747" y="555" width="2" height="30" fill="#1a2ce0"/><rect x="749" y="551" width="3" height="5" fill="#1a2ce0"/><rect x="751" y="530" width="1" height="22" fill="url(#bgrad)"/><rect x="603" y="600" width="2" height="19" fill="#1a84e0"/><rect x="625" y="600" width="1" height="6" fill="#1a84e0"/><rect x="640" y="600" width="1" height="6" fill="#1a84e0"/><rect x="651" y="606" width="1" height="13" fill="#1a2ce0"/><rect x="654" y="606" width="1" height="13" fill="#1a2ce0"/><rect x="658" y="606" width="1" height="13" fill="#12a4b0"/><rect x="688" y="600" width="1" height="6" fill="#1a2ce0"/><rect x="692" y="606" width="1" height="13" fill="#1a84e0"/><rect x="698" y="600" width="1" height="6" fill="#12a4b0"/><rect x="721" y="606" width="1" height="13" fill="#1a84e0"/><rect x="725" y="600" width="1" height="6" fill="#1a84e0"/><rect x="740" y="600" width="1" height="6" fill="#1a84e0"/><rect x="587" y="619" width="1" height="11" fill="#12a4b0"/><rect x="602" y="619" width="1" height="11" fill="#12a4b0"/><rect x="607" y="619" width="2" height="11" fill="#20c080"/><rect x="628" y="619" width="1" height="11" fill="#12a4b0"/><rect x="631" y="619" width="1" height="11" fill="#12a4b0"/><rect x="650" y="619" width="1" height="11" fill="#20c080"/><rect x="673" y="619" width="1" height="11" fill="#12a4b0"/><rect x="684" y="619" width="1" height="11" fill="#12a4b0"/><rect x="676" y="630" width="1" height="34" fill="#12a4b0"/><rect x="691" y="630" width="1" height="34" fill="url(#ygrad)"/><rect x="691" y="664" width="1" height="26" fill="url(#ygrad)"/><rect x="693" y="630" width="2" height="34" fill="url(#ygrad)"/><rect x="693" y="664" width="2" height="26" fill="url(#ygrad)"/><rect x="711" y="630" width="2" height="17" fill="#1a84e0"/><rect x="717" y="630" width="1" height="17" fill="url(#ygrad)"/><rect x="726" y="630" width="2" height="34" fill="#12a4b0"/><rect x="600" y="647" width="2" height="17" fill="url(#ygrad)"/><rect x="613" y="647" width="1" height="17" fill="url(#ygrad)"/><rect x="615" y="647" width="2" height="17" fill="url(#ygrad)"/><rect x="618" y="647" width="2" height="17" fill="url(#ygrad)"/><rect x="636" y="647" width="1" height="17" fill="url(#ygrad)"/><rect x="640" y="647" width="1" height="17" fill="url(#ygrad)"/><rect x="646" y="647" width="1" height="17" fill="url(#ygrad)"/><rect x="654" y="647" width="1" height="17" fill="url(#ygrad)"/><rect x="670" y="647" width="2" height="17" fill="#1a84e0"/><rect x="685" y="647" width="3" height="17" fill="url(#ygrad)"/><rect x="700" y="647" width="3" height="17" fill="url(#ygrad)"/><rect x="721" y="647" width="1" height="17" fill="url(#ygrad)"/><rect x="732" y="647" width="1" height="17" fill="url(#ygrad)"/><rect x="749" y="647" width="2" height="17" fill="url(#ygrad)"/><rect x="587" y="664" width="39" height="26" fill="url(#ygrad)"/><rect x="626" y="664" width="2" height="13" fill="url(#ygrad)"/><rect x="628" y="664" width="3" height="26" fill="url(#ygrad)"/><rect x="631" y="664" width="1" height="13" fill="url(#ygrad)"/><rect x="632" y="664" width="49" height="26" fill="url(#ygrad)"/><rect x="681" y="676" width="5" height="14" fill="url(#ygrad)"/><rect x="685" y="664" width="2" height="26" fill="url(#ygrad)"/><rect x="689" y="676" width="2" height="14" fill="url(#ygrad)"/><rect x="702" y="664" width="4" height="26" fill="url(#ygrad)"/><rect x="710" y="676" width="5" height="14" fill="url(#ygrad)"/><rect x="713" y="664" width="1" height="12" fill="url(#ygrad)"/><rect x="719" y="664" width="3" height="26" fill="url(#ygrad)"/><rect x="728" y="664" width="5" height="26" fill="url(#ygrad)"/><rect x="734" y="664" width="10" height="26" fill="url(#ygrad)"/><rect x="733" y="676" width="1" height="14" fill="url(#ygrad)"/><rect x="745" y="676" width="2" height="14" fill="url(#ygrad)"/><rect x="747" y="664" width="1" height="12" fill="url(#ygrad)"/><rect x="799" y="514" width="1" height="13" fill="#1010a8"/><rect x="751" y="530" width="1" height="26" fill="url(#bgrad)"/><rect x="756" y="530" width="2" height="26" fill="url(#bgrad)"/><rect x="760" y="539" width="2" height="17" fill="url(#bgrad)"/><rect x="763" y="526" width="3" height="26" fill="url(#bgrad)"/><rect x="767" y="526" width="3" height="30" fill="url(#bgrad)"/><rect x="771" y="530" width="2" height="26" fill="url(#bgrad)"/><rect x="775" y="530" width="2" height="22" fill="url(#bgrad)"/><rect x="777" y="555" width="1" height="13" fill="#1a2ce0"/><rect x="789" y="530" width="3" height="26" fill="url(#bgrad)"/><rect x="793" y="527" width="2" height="4" fill="#1010a8"/><rect x="797" y="527" width="3" height="25" fill="url(#bgrad)"/><rect x="800" y="551" width="1" height="17" fill="#1a2ce0"/><rect x="804" y="526" width="2" height="30" fill="url(#bgrad)"/><rect x="810" y="551" width="1" height="5" fill="#1a2ce0"/><rect x="814" y="551" width="1" height="5" fill="#1a2ce0"/><rect x="818" y="551" width="3" height="5" fill="#1a2ce0"/><rect x="825" y="527" width="1" height="4" fill="#1010a8"/><rect x="827" y="526" width="2" height="26" fill="url(#bgrad)"/><rect x="834" y="551" width="2" height="5" fill="#1a2ce0"/><rect x="837" y="555" width="1" height="13" fill="#1a2ce0"/><rect x="844" y="527" width="1" height="4" fill="#1010a8"/><rect x="845" y="539" width="2" height="13" fill="url(#bgrad)"/><rect x="848" y="527" width="3" height="25" fill="url(#bgrad)"/><rect x="853" y="539" width="2" height="13" fill="url(#bgrad)"/><rect x="853" y="552" width="2" height="16" fill="#1a2ce0"/><rect x="856" y="551" width="2" height="5" fill="#1a2ce0"/><rect x="862" y="555" width="1" height="13" fill="#1a2ce0"/><rect x="867" y="526" width="1" height="5" fill="#1010a8"/><rect x="870" y="551" width="3" height="51" fill="#1a2ce0"/><rect x="874" y="531" width="1" height="21" fill="url(#bgrad)"/><rect x="875" y="551" width="2" height="5" fill="#1a2ce0"/><rect x="877" y="551" width="2" height="17" fill="#1a2ce0"/><rect x="878" y="539" width="3" height="13" fill="url(#bgrad)"/><rect x="893" y="551" width="1" height="5" fill="#1a2ce0"/><rect x="896" y="551" width="1" height="5" fill="#1a2ce0"/><rect x="900" y="551" width="1" height="5" fill="#1a2ce0"/><rect x="905" y="530" width="2" height="26" fill="url(#bgrad)"/><rect x="908" y="534" width="2" height="18" fill="url(#bgrad)"/><rect x="914" y="551" width="1" height="30" fill="#1a2ce0"/><rect x="759" y="568" width="1" height="17" fill="#1a2ce0"/><rect x="762" y="568" width="1" height="17" fill="#1a2ce0"/><rect x="766" y="580" width="1" height="5" fill="#1a2ce0"/><rect x="782" y="568" width="2" height="17" fill="#1a2ce0"/><rect x="792" y="568" width="1" height="13" fill="#1a2ce0"/><rect x="801" y="568" width="2" height="17" fill="#1a2ce0"/><rect x="806" y="568" width="1" height="17" fill="#1a2ce0"/><rect x="812" y="568" width="2" height="13" fill="#1a2ce0"/><rect x="814" y="580" width="1" height="5" fill="#1a2ce0"/><rect x="822" y="580" width="3" height="5" fill="#1a2ce0"/><rect x="834" y="580" width="2" height="5" fill="#1a2ce0"/><rect x="841" y="580" width="2" height="5" fill="#1a2ce0"/><rect x="844" y="568" width="1" height="17" fill="#1a2ce0"/><rect x="848" y="580" width="3" height="5" fill="#1a2ce0"/><rect x="855" y="580" width="1" height="5" fill="#1a2ce0"/><rect x="858" y="568" width="2" height="13" fill="#1a2ce0"/><rect x="860" y="580" width="2" height="22" fill="#1a2ce0"/><rect x="864" y="580" width="2" height="5" fill="#1a2ce0"/><rect x="897" y="580" width="2" height="22" fill="#1a2ce0"/><rect x="901" y="580" width="2" height="22" fill="#1a84e0"/><rect x="791" y="584" width="1" height="18" fill="#1a84e0"/><rect x="807" y="584" width="1" height="18" fill="#12a4b0"/><rect x="823" y="584" width="2" height="18" fill="#12a4b0"/><rect x="827" y="584" width="2" height="18" fill="#12a4b0"/><rect x="871" y="584" width="2" height="18" fill="#1a84e0"/><rect x="874" y="584" width="1" height="18" fill="#1a84e0"/><rect x="879" y="584" width="2" height="18" fill="#1a84e0"/><rect x="882" y="584" width="2" height="18" fill="#1a84e0"/><rect x="791" y="600" width="1" height="6" fill="#1a2ce0"/><rect x="807" y="600" width="1" height="6" fill="#12a4b0"/><rect x="823" y="600" width="2" height="6" fill="#12a4b0"/><rect x="827" y="600" width="2" height="19" fill="#12a4b0"/><rect x="860" y="600" width="2" height="6" fill="#1a2ce0"/><rect x="871" y="600" width="2" height="6" fill="#1a84e0"/><rect x="874" y="600" width="1" height="6" fill="#1a84e0"/><rect x="879" y="600" width="2" height="6" fill="#1a84e0"/><rect x="882" y="600" width="2" height="30" fill="#1a2ce0"/><rect x="897" y="600" width="2" height="6" fill="#1a2ce0"/><rect x="901" y="600" width="2" height="6" fill="#1a84e0"/><rect x="815" y="606" width="2" height="13" fill="#12a4b0"/><rect x="896" y="606" width="1" height="13" fill="#12a4b0"/><rect x="904" y="606" width="3" height="13" fill="#1a84e0"/><rect x="777" y="619" width="1" height="11" fill="#20c080"/><rect x="785" y="619" width="1" height="28" fill="#12a4b0"/><rect x="826" y="619" width="1" height="45" fill="#12a4b0"/><rect x="830" y="619" width="2" height="11" fill="#12a4b0"/><rect x="841" y="619" width="2" height="11" fill="#20c080"/><rect x="866" y="619" width="1" height="11" fill="#1a84e0"/><rect x="890" y="619" width="2" height="11" fill="#1a2ce0"/><rect x="814" y="630" width="1" height="17" fill="url(#ygrad)"/><rect x="822" y="630" width="1" height="17" fill="url(#ygrad)"/><rect x="868" y="630" width="2" height="17" fill="url(#ygrad)"/><rect x="877" y="630" width="1" height="17" fill="url(#ygrad)"/><rect x="884" y="630" width="1" height="34" fill="url(#ygrad)"/><rect x="900" y="630" width="1" height="17" fill="url(#ygrad)"/><rect x="907" y="630" width="1" height="34" fill="url(#ygrad)"/><rect x="767" y="647" width="2" height="17" fill="url(#ygrad)"/><rect x="773" y="647" width="1" height="17" fill="#1a84e0"/><rect x="784" y="647" width="2" height="17" fill="url(#ygrad)"/><rect x="788" y="647" width="1" height="17" fill="url(#ygrad)"/><rect x="795" y="647" width="1" height="17" fill="url(#ygrad)"/><rect x="811" y="647" width="1" height="17" fill="#1a84e0"/><rect x="849" y="647" width="3" height="17" fill="url(#ygrad)"/><rect x="853" y="647" width="2" height="17" fill="url(#ygrad)"/><rect x="864" y="647" width="2" height="17" fill="url(#ygrad)"/><rect x="867" y="647" width="3" height="17" fill="url(#ygrad)"/><rect x="871" y="647" width="2" height="17" fill="url(#ygrad)"/><rect x="879" y="647" width="2" height="17" fill="url(#ygrad)"/><rect x="888" y="647" width="1" height="17" fill="url(#ygrad)"/><rect x="892" y="647" width="1" height="17" fill="#1a84e0"/><rect x="896" y="647" width="1" height="17" fill="url(#ygrad)"/><rect x="899" y="647" width="4" height="17" fill="url(#ygrad)"/><rect x="754" y="664" width="1" height="26" fill="url(#ygrad)"/><rect x="752" y="676" width="3" height="14" fill="url(#ygrad)"/><rect x="758" y="676" width="1" height="14" fill="url(#ygrad)"/><rect x="760" y="676" width="2" height="14" fill="url(#ygrad)"/><rect x="765" y="676" width="2" height="14" fill="url(#ygrad)"/><rect x="774" y="676" width="3" height="14" fill="url(#ygrad)"/><rect x="774" y="664" width="1" height="12" fill="url(#ygrad)"/><rect x="778" y="664" width="3" height="26" fill="url(#ygrad)"/><rect x="782" y="664" width="2" height="26" fill="url(#ygrad)"/><rect x="785" y="664" width="4" height="26" fill="url(#ygrad)"/><rect x="789" y="676" width="3" height="14" fill="url(#ygrad)"/><rect x="791" y="664" width="1" height="12" fill="url(#ygrad)"/><rect x="797" y="676" width="4" height="14" fill="url(#ygrad)"/><rect x="800" y="664" width="1" height="12" fill="url(#ygrad)"/><rect x="803" y="664" width="5" height="26" fill="url(#ygrad)"/><rect x="810" y="664" width="2" height="26" fill="url(#ygrad)"/><rect x="815" y="676" width="2" height="14" fill="url(#ygrad)"/><rect x="823" y="676" width="3" height="14" fill="url(#ygrad)"/><rect x="830" y="664" width="2" height="26" fill="url(#ygrad)"/><rect x="836" y="676" width="1" height="14" fill="url(#ygrad)"/><rect x="838" y="676" width="5" height="14" fill="url(#ygrad)"/><rect x="844" y="664" width="2" height="26" fill="url(#ygrad)"/><rect x="846" y="664" width="2" height="26" fill="url(#ygrad)"/><rect x="849" y="664" width="6" height="26" fill="url(#ygrad)"/><rect x="858" y="664" width="1" height="26" fill="url(#ygrad)"/><rect x="862" y="664" width="43" height="26" fill="url(#ygrad)"/><rect x="905" y="676" width="2" height="14" fill="url(#ygrad)"/><rect x="907" y="664" width="9" height="26" fill="url(#ygrad)"/><rect x="972" y="514" width="2" height="17" fill="#1010a8"/><rect x="1020" y="514" width="2" height="4" fill="#1010a8"/><rect x="1072" y="522" width="2" height="9" fill="#1010a8"/><rect x="918" y="527" width="1" height="25" fill="url(#bgrad)"/><rect x="920" y="551" width="2" height="5" fill="#1a2ce0"/><rect x="925" y="527" width="1" height="29" fill="url(#bgrad)"/><rect x="926" y="556" width="1" height="25" fill="#1a2ce0"/><rect x="931" y="530" width="2" height="22" fill="url(#bgrad)"/><rect x="940" y="556" width="1" height="25" fill="#1a2ce0"/><rect x="945" y="526" width="1" height="5" fill="#1010a8"/><rect x="944" y="556" width="4" height="13" fill="#1a2ce0"/><rect x="944" y="569" width="2" height="16" fill="#1a2ce0"/><rect x="949" y="556" width="2" height="13" fill="#1a2ce0"/><rect x="951" y="523" width="5" height="33" fill="url(#bgrad)"/><rect x="953" y="556" width="2" height="25" fill="#1a2ce0"/><rect x="952" y="580" width="1" height="5" fill="#1a2ce0"/><rect x="957" y="556" width="3" height="25" fill="#1a2ce0"/><rect x="963" y="551" width="1" height="5" fill="#1a2ce0"/><rect x="963" y="580" width="1" height="23" fill="#1a84e0"/><rect x="967" y="535" width="1" height="17" fill="url(#bgrad)"/><rect x="968" y="527" width="2" height="4" fill="#1010a8"/><rect x="968" y="556" width="2" height="13" fill="#1a2ce0"/><rect x="971" y="556" width="1" height="13" fill="#1a2ce0"/><rect x="975" y="530" width="2" height="22" fill="url(#bgrad)"/><rect x="981" y="526" width="2" height="30" fill="url(#bgrad)"/><rect x="985" y="527" width="1" height="29" fill="url(#bgrad)"/><rect x="989" y="535" width="1" height="17" fill="url(#bgrad)"/><rect x="989" y="552" width="1" height="29" fill="#1a2ce0"/><rect x="992" y="568" width="1" height="13" fill="#1a2ce0"/><rect x="997" y="556" width="1" height="25" fill="#1a2ce0"/><rect x="1003" y="527" width="2" height="29" fill="url(#bgrad)"/><rect x="1004" y="568" width="1" height="35" fill="#1a2ce0"/><rect x="1005" y="526" width="2" height="5" fill="#1010a8"/><rect x="1009" y="526" width="2" height="5" fill="#1010a8"/><rect x="1011" y="556" width="2" height="13" fill="#1a2ce0"/><rect x="1013" y="580" width="2" height="5" fill="#1a2ce0"/><rect x="1015" y="556" width="3" height="29" fill="#1a2ce0"/><rect x="1019" y="580" width="1" height="5" fill="#1a2ce0"/><rect x="1020" y="539" width="2" height="13" fill="url(#bgrad)"/><rect x="1022" y="580" width="2" height="23" fill="#1a84e0"/><rect x="1024" y="551" width="2" height="5" fill="#1a2ce0"/><rect x="1029" y="530" width="2" height="22" fill="url(#bgrad)"/><rect x="1029" y="552" width="2" height="17" fill="#1a2ce0"/><rect x="1031" y="530" width="2" height="26" fill="url(#bgrad)"/><rect x="1037" y="551" width="1" height="5" fill="#1a2ce0"/><rect x="1039" y="556" width="2" height="29" fill="#1a2ce0"/><rect x="1044" y="530" width="2" height="22" fill="url(#bgrad)"/><rect x="1044" y="552" width="2" height="17" fill="#1a2ce0"/><rect x="1048" y="526" width="1" height="5" fill="#1010a8"/><rect x="1052" y="530" width="1" height="22" fill="url(#bgrad)"/><rect x="1055" y="551" width="1" height="5" fill="#1a2ce0"/><rect x="1056" y="526" width="4" height="5" fill="#1010a8"/><rect x="1057" y="556" width="2" height="25" fill="#1a2ce0"/><rect x="1059" y="530" width="2" height="26" fill="url(#bgrad)"/><rect x="1063" y="551" width="1" height="18" fill="#1a2ce0"/><rect x="1065" y="527" width="2" height="4" fill="#1010a8"/><rect x="1065" y="580" width="2" height="23" fill="#1a84e0"/><rect x="1071" y="580" width="1" height="5" fill="#1a2ce0"/><rect x="1072" y="556" width="4" height="13" fill="#1a2ce0"/><rect x="1074" y="527" width="1" height="29" fill="url(#bgrad)"/><rect x="1076" y="527" width="2" height="4" fill="#1010a8"/><rect x="1078" y="580" width="1" height="5" fill="#1a2ce0"/><rect x="1079" y="556" width="1" height="13" fill="#1a2ce0"/><rect x="916" y="585" width="2" height="18" fill="#1a84e0"/><rect x="919" y="585" width="1" height="18" fill="#1a84e0"/><rect x="974" y="580" width="1" height="23" fill="#1a84e0"/><rect x="986" y="585" width="1" height="18" fill="#1a84e0"/><rect x="1044" y="585" width="1" height="18" fill="#1a84e0"/><rect x="1059" y="585" width="1" height="18" fill="#1a84e0"/><rect x="1061" y="585" width="2" height="18" fill="#1a84e0"/><rect x="916" y="600" width="2" height="6" fill="#1a84e0"/><rect x="919" y="600" width="1" height="6" fill="#1a84e0"/><rect x="963" y="600" width="1" height="6" fill="#1a84e0"/><rect x="974" y="600" width="1" height="6" fill="#1a2ce0"/><rect x="986" y="600" width="1" height="6" fill="#1a84e0"/><rect x="1004" y="600" width="1" height="19" fill="#1a84e0"/><rect x="1022" y="600" width="2" height="19" fill="#1a84e0"/><rect x="1044" y="600" width="1" height="6" fill="#1a84e0"/><rect x="1059" y="600" width="1" height="6" fill="#1a84e0"/><rect x="1061" y="600" width="2" height="6" fill="#1a84e0"/><rect x="1065" y="600" width="2" height="6" fill="#1a84e0"/><rect x="927" y="606" width="2" height="22" fill="#1a84e0"/><rect x="927" y="628" width="2" height="36" fill="url(#ygrad)"/><rect x="970" y="606" width="1" height="13" fill="#12a4b0"/><rect x="981" y="606" width="1" height="13" fill="#12a4b0"/><rect x="997" y="606" width="1" height="13" fill="#1a2ce0"/><rect x="1029" y="606" width="1" height="13" fill="#12a4b0"/><rect x="1052" y="606" width="1" height="13" fill="#12a4b0"/><rect x="933" y="619" width="1" height="11" fill="#1a84e0"/><rect x="936" y="619" width="1" height="11" fill="#1a84e0"/><rect x="942" y="619" width="2" height="11" fill="#20c080"/><rect x="945" y="619" width="1" height="11" fill="#12a4b0"/><rect x="978" y="619" width="1" height="11" fill="#20c080"/><rect x="1016" y="619" width="2" height="11" fill="#12a4b0"/><rect x="1024" y="619" width="2" height="45" fill="#20c080"/><rect x="1037" y="619" width="1" height="29" fill="#12a4b0"/><rect x="1056" y="619" width="1" height="11" fill="#12a4b0"/><rect x="986" y="630" width="1" height="34" fill="url(#ygrad)"/><rect x="993" y="630" width="1" height="34" fill="url(#ygrad)"/><rect x="1007" y="630" width="1" height="34" fill="#1a84e0"/><rect x="1018" y="630" width="1" height="34" fill="url(#ygrad)"/><rect x="1074" y="630" width="1" height="34" fill="url(#ygrad)"/><rect x="931" y="648" width="2" height="28" fill="url(#ygrad)"/><rect x="941" y="648" width="1" height="16" fill="url(#ygrad)"/><rect x="956" y="648" width="1" height="16" fill="url(#ygrad)"/><rect x="962" y="648" width="2" height="16" fill="url(#ygrad)"/><rect x="968" y="648" width="2" height="16" fill="url(#ygrad)"/><rect x="972" y="648" width="2" height="16" fill="url(#ygrad)"/><rect x="977" y="648" width="1" height="16" fill="url(#ygrad)"/><rect x="979" y="648" width="2" height="16" fill="url(#ygrad)"/><rect x="990" y="648" width="4" height="16" fill="url(#ygrad)"/><rect x="997" y="648" width="3" height="16" fill="#1a84e0"/><rect x="1011" y="648" width="5" height="16" fill="url(#ygrad)"/><rect x="1018" y="648" width="2" height="16" fill="url(#ygrad)"/><rect x="1022" y="648" width="1" height="16" fill="url(#ygrad)"/><rect x="1031" y="648" width="2" height="16" fill="url(#ygrad)"/><rect x="1035" y="648" width="2" height="16" fill="url(#ygrad)"/><rect x="1052" y="648" width="1" height="16" fill="url(#ygrad)"/><rect x="1067" y="648" width="5" height="16" fill="url(#ygrad)"/><rect x="1079" y="648" width="1" height="16" fill="url(#ygrad)"/><rect x="915" y="664" width="15" height="26" fill="url(#ygrad)"/><rect x="931" y="664" width="3" height="26" fill="url(#ygrad)"/><rect x="930" y="676" width="1" height="14" fill="url(#ygrad)"/><rect x="936" y="664" width="13" height="26" fill="url(#ygrad)"/><rect x="951" y="676" width="5" height="14" fill="url(#ygrad)"/><rect x="956" y="664" width="8" height="26" fill="url(#ygrad)"/><rect x="964" y="676" width="2" height="14" fill="url(#ygrad)"/><rect x="966" y="664" width="35" height="26" fill="url(#ygrad)"/><rect x="1004" y="664" width="33" height="26" fill="url(#ygrad)"/><rect x="1037" y="676" width="1" height="14" fill="url(#ygrad)"/><rect x="1038" y="664" width="19" height="26" fill="url(#ygrad)"/><rect x="1057" y="676" width="3" height="14" fill="url(#ygrad)"/><rect x="1060" y="664" width="20" height="26" fill="url(#ygrad)"/></g>
<line x1="91" y1="212.5" x2="95" y2="212.5" stroke="#333" stroke-width="1" />
<line x1="91" y1="200.5" x2="95" y2="200.5" stroke="#333" stroke-width="1" />
<line x1="91" y1="190.5" x2="95" y2="190.5" stroke="#333" stroke-width="1" />
<line x1="91" y1="183.5" x2="95" y2="183.5" stroke="#333" stroke-width="1" />
<line x1="91" y1="176.5" x2="95" y2="176.5" stroke="#333" stroke-width="1" />
<line x1="91" y1="171.5" x2="95" y2="171.5" stroke="#333" stroke-width="1" />
<line x1="91" y1="166.5" x2="95" y2="166.5" stroke="#333" stroke-width="1" />
<line x1="87" y1="161.5" x2="95" y2="161.5" stroke="#333" stroke-width="1" />
<line x1="91" y1="132.5" x2="95" y2="132.5" stroke="#333" stroke-width="1" />
<line x1="91" y1="115.5" x2="95" y2="115.5" stroke="#333" stroke-width="1" />
<line x1="91" y1="103.5" x2="95" y2="103.5" stroke="#333" stroke-width="1" />
<line x1="91" y1="93.5" x2="95" y2="93.5" stroke="#333" stroke-width="1" />
<line x1="91" y1="86.5" x2="95" y2="86.5" stroke="#333" stroke-width="1" />
<line x1="91" y1="79.5" x2="95" y2="79.5" stroke="#333" stroke-width="1" />
<line x1="91" y1="74.5" x2="95" y2="74.5" stroke="#333" stroke-width="1" />
<line x1="91" y1="69.5" x2="95" y2="69.5" stroke="#333" stroke-width="1" />
<line x1="87" y1="64.5" x2="95" y2="64.5" stroke="#333" stroke-width="1" />
<line x1="91" y1="35.5" x2="95" y2="35.5" stroke="#333" stroke-width="1" />
<text x="82" y="72" font-size="12.5" text-anchor="end" fill="#404040">10<tspan dx="0.8" dy="-6.5">2</tspan></text>
<text x="82" y="169" font-size="12.5" text-anchor="end" fill="#404040">10<tspan dx="0.8" dy="-6.5">1</tspan></text>
<text x="9.5" y="29" font-size="12.5" text-anchor="start" fill="#404040"  textLength="59.5" lengthAdjust="spacingAndGlyphs">CHEMS Pr.</text>
<text x="9.5" y="211" font-size="12.5" text-anchor="start" fill="#404040"  textLength="59.5" lengthAdjust="spacingAndGlyphs">LEMMS Pr.</text>
<text transform="translate(50,125) rotate(-90)" font-size="12.5" text-anchor="middle" fill="#404040">Energy (keV)</text>
<line x1="91" y1="408.5" x2="95" y2="408.5" stroke="#333" stroke-width="1" />
<line x1="91" y1="391.5" x2="95" y2="391.5" stroke="#333" stroke-width="1" />
<line x1="91" y1="379.5" x2="95" y2="379.5" stroke="#333" stroke-width="1" />
<line x1="91" y1="368.5" x2="95" y2="368.5" stroke="#333" stroke-width="1" />
<line x1="91" y1="360.5" x2="95" y2="360.5" stroke="#333" stroke-width="1" />
<line x1="91" y1="352.5" x2="95" y2="352.5" stroke="#333" stroke-width="1" />
<line x1="91" y1="345.5" x2="95" y2="345.5" stroke="#333" stroke-width="1" />
<line x1="87" y1="339.5" x2="95" y2="339.5" stroke="#333" stroke-width="1" />
<line x1="91" y1="334.5" x2="95" y2="334.5" stroke="#333" stroke-width="1" />
<line x1="91" y1="329.5" x2="95" y2="329.5" stroke="#333" stroke-width="1" />
<line x1="91" y1="324.5" x2="95" y2="324.5" stroke="#333" stroke-width="1" />
<line x1="91" y1="320.5" x2="95" y2="320.5" stroke="#333" stroke-width="1" />
<line x1="91" y1="316.5" x2="95" y2="316.5" stroke="#333" stroke-width="1" />
<line x1="91" y1="313.5" x2="95" y2="313.5" stroke="#333" stroke-width="1" />
<line x1="91" y1="309.5" x2="95" y2="309.5" stroke="#333" stroke-width="1" />
<line x1="91" y1="306.5" x2="95" y2="306.5" stroke="#333" stroke-width="1" />
<line x1="91" y1="303.5" x2="95" y2="303.5" stroke="#333" stroke-width="1" />
<line x1="87" y1="300.5" x2="95" y2="300.5" stroke="#333" stroke-width="1" />
<line x1="91" y1="297.5" x2="95" y2="297.5" stroke="#333" stroke-width="1" />
<line x1="91" y1="295.5" x2="95" y2="295.5" stroke="#333" stroke-width="1" />
<line x1="91" y1="292.5" x2="95" y2="292.5" stroke="#333" stroke-width="1" />
<line x1="91" y1="290.5" x2="95" y2="290.5" stroke="#333" stroke-width="1" />
<line x1="91" y1="287.5" x2="95" y2="287.5" stroke="#333" stroke-width="1" />
<line x1="91" y1="285.5" x2="95" y2="285.5" stroke="#333" stroke-width="1" />
<line x1="91" y1="283.5" x2="95" y2="283.5" stroke="#333" stroke-width="1" />
<line x1="91" y1="281.5" x2="95" y2="281.5" stroke="#333" stroke-width="1" />
<line x1="91" y1="279.5" x2="95" y2="279.5" stroke="#333" stroke-width="1" />
<line x1="87" y1="277.5" x2="95" y2="277.5" stroke="#333" stroke-width="1" />
<line x1="91" y1="275.5" x2="95" y2="275.5" stroke="#333" stroke-width="1" />
<line x1="91" y1="273.5" x2="95" y2="273.5" stroke="#333" stroke-width="1" />
<line x1="91" y1="272.5" x2="95" y2="272.5" stroke="#333" stroke-width="1" />
<line x1="91" y1="270.5" x2="95" y2="270.5" stroke="#333" stroke-width="1" />
<line x1="91" y1="268.5" x2="95" y2="268.5" stroke="#333" stroke-width="1" />
<line x1="91" y1="267.5" x2="95" y2="267.5" stroke="#333" stroke-width="1" />
<line x1="91" y1="265.5" x2="95" y2="265.5" stroke="#333" stroke-width="1" />
<line x1="91" y1="264.5" x2="95" y2="264.5" stroke="#333" stroke-width="1" />
<line x1="91" y1="262.5" x2="95" y2="262.5" stroke="#333" stroke-width="1" />
<line x1="87" y1="261.5" x2="95" y2="261.5" stroke="#333" stroke-width="1" />
<line x1="91" y1="259.5" x2="95" y2="259.5" stroke="#333" stroke-width="1" />
<line x1="91" y1="258.5" x2="95" y2="258.5" stroke="#333" stroke-width="1" />
<line x1="91" y1="257.5" x2="95" y2="257.5" stroke="#333" stroke-width="1" />
<line x1="91" y1="255.5" x2="95" y2="255.5" stroke="#333" stroke-width="1" />
<line x1="91" y1="254.5" x2="95" y2="254.5" stroke="#333" stroke-width="1" />
<line x1="91" y1="253.5" x2="95" y2="253.5" stroke="#333" stroke-width="1" />
<line x1="91" y1="252.5" x2="95" y2="252.5" stroke="#333" stroke-width="1" />
<line x1="91" y1="250.5" x2="95" y2="250.5" stroke="#333" stroke-width="1" />
<line x1="91" y1="249.5" x2="95" y2="249.5" stroke="#333" stroke-width="1" />
<line x1="87" y1="248.5" x2="95" y2="248.5" stroke="#333" stroke-width="1" />
<line x1="91" y1="247.5" x2="95" y2="247.5" stroke="#333" stroke-width="1" />
<line x1="91" y1="246.5" x2="95" y2="246.5" stroke="#333" stroke-width="1" />
<line x1="91" y1="245.5" x2="95" y2="245.5" stroke="#333" stroke-width="1" />
<line x1="91" y1="244.5" x2="95" y2="244.5" stroke="#333" stroke-width="1" />
<line x1="91" y1="243.5" x2="95" y2="243.5" stroke="#333" stroke-width="1" />
<line x1="91" y1="242.5" x2="95" y2="242.5" stroke="#333" stroke-width="1" />
<line x1="91" y1="241.5" x2="95" y2="241.5" stroke="#333" stroke-width="1" />
<line x1="91" y1="240.5" x2="95" y2="240.5" stroke="#333" stroke-width="1" />
<line x1="91" y1="239.5" x2="95" y2="239.5" stroke="#333" stroke-width="1" />
<line x1="87" y1="238.5" x2="95" y2="238.5" stroke="#333" stroke-width="1" />
<line x1="91" y1="237.5" x2="95" y2="237.5" stroke="#333" stroke-width="1" />
<line x1="91" y1="236.5" x2="95" y2="236.5" stroke="#333" stroke-width="1" />
<line x1="91" y1="235.5" x2="95" y2="235.5" stroke="#333" stroke-width="1" />
<line x1="91" y1="234.5" x2="95" y2="234.5" stroke="#333" stroke-width="1" />
<line x1="91" y1="233.5" x2="95" y2="233.5" stroke="#333" stroke-width="1" />
<line x1="91" y1="232.5" x2="95" y2="232.5" stroke="#333" stroke-width="1" />
<line x1="91" y1="231.5" x2="95" y2="231.5" stroke="#333" stroke-width="1" />
<line x1="91" y1="231.5" x2="95" y2="231.5" stroke="#333" stroke-width="1" />
<line x1="91" y1="230.5" x2="95" y2="230.5" stroke="#333" stroke-width="1" />
<line x1="87" y1="229.5" x2="95" y2="229.5" stroke="#333" stroke-width="1" />
<line x1="91" y1="228.5" x2="95" y2="228.5" stroke="#333" stroke-width="1" />
<line x1="91" y1="227.5" x2="95" y2="227.5" stroke="#333" stroke-width="1" />
<line x1="91" y1="227.5" x2="95" y2="227.5" stroke="#333" stroke-width="1" />
<line x1="91" y1="226.5" x2="95" y2="226.5" stroke="#333" stroke-width="1" />
<line x1="91" y1="225.5" x2="95" y2="225.5" stroke="#333" stroke-width="1" />
<line x1="91" y1="224.5" x2="95" y2="224.5" stroke="#333" stroke-width="1" />
<text x="82" y="344.3" font-size="12.5" text-anchor="end" fill="#404040" >100.</text>
<text x="82" y="305.0155855658505" font-size="12.5" text-anchor="end" fill="#404040" >200.</text>
<text x="82" y="282.0356762590841" font-size="12.5" text-anchor="end" fill="#404040" >300.</text>
<text x="82" y="265.73117113170093" font-size="12.5" text-anchor="end" fill="#404040" >400.</text>
<text x="82" y="253.08441443414955" font-size="12.5" text-anchor="end" fill="#404040" >500.</text>
<text x="82" y="242.75126182493452" font-size="12.5" text-anchor="end" fill="#404040" >600.</text>
<text x="82" y="234.0147057781395" font-size="12.5" text-anchor="end" fill="#404040" >700.</text>
<text transform="translate(46,320) rotate(-90)" font-size="12.5" text-anchor="middle" fill="#404040">Energy (keV)</text>
<line x1="91" y1="508.5" x2="95" y2="508.5" stroke="#333" stroke-width="1" />
<line x1="91" y1="506.5" x2="95" y2="506.5" stroke="#333" stroke-width="1" />
<line x1="91" y1="505.5" x2="95" y2="505.5" stroke="#333" stroke-width="1" />
<line x1="91" y1="504.5" x2="95" y2="504.5" stroke="#333" stroke-width="1" />
<line x1="87" y1="503.5" x2="95" y2="503.5" stroke="#333" stroke-width="1" />
<line x1="91" y1="496.5" x2="95" y2="496.5" stroke="#333" stroke-width="1" />
<line x1="91" y1="492.5" x2="95" y2="492.5" stroke="#333" stroke-width="1" />
<line x1="91" y1="489.5" x2="95" y2="489.5" stroke="#333" stroke-width="1" />
<line x1="91" y1="487.5" x2="95" y2="487.5" stroke="#333" stroke-width="1" />
<line x1="91" y1="486.5" x2="95" y2="486.5" stroke="#333" stroke-width="1" />
<line x1="91" y1="484.5" x2="95" y2="484.5" stroke="#333" stroke-width="1" />
<line x1="91" y1="483.5" x2="95" y2="483.5" stroke="#333" stroke-width="1" />
<line x1="91" y1="482.5" x2="95" y2="482.5" stroke="#333" stroke-width="1" />
<line x1="87" y1="481.5" x2="95" y2="481.5" stroke="#333" stroke-width="1" />
<line x1="91" y1="474.5" x2="95" y2="474.5" stroke="#333" stroke-width="1" />
<line x1="91" y1="470.5" x2="95" y2="470.5" stroke="#333" stroke-width="1" />
<line x1="91" y1="467.5" x2="95" y2="467.5" stroke="#333" stroke-width="1" />
<line x1="91" y1="465.5" x2="95" y2="465.5" stroke="#333" stroke-width="1" />
<line x1="91" y1="464.5" x2="95" y2="464.5" stroke="#333" stroke-width="1" />
<line x1="91" y1="462.5" x2="95" y2="462.5" stroke="#333" stroke-width="1" />
<line x1="91" y1="461.5" x2="95" y2="461.5" stroke="#333" stroke-width="1" />
<line x1="91" y1="460.5" x2="95" y2="460.5" stroke="#333" stroke-width="1" />
<line x1="87" y1="459.5" x2="95" y2="459.5" stroke="#333" stroke-width="1" />
<line x1="91" y1="452.5" x2="95" y2="452.5" stroke="#333" stroke-width="1" />
<line x1="91" y1="448.5" x2="95" y2="448.5" stroke="#333" stroke-width="1" />
<line x1="91" y1="445.5" x2="95" y2="445.5" stroke="#333" stroke-width="1" />
<line x1="91" y1="443.5" x2="95" y2="443.5" stroke="#333" stroke-width="1" />
<line x1="91" y1="442.5" x2="95" y2="442.5" stroke="#333" stroke-width="1" />
<line x1="91" y1="440.5" x2="95" y2="440.5" stroke="#333" stroke-width="1" />
<line x1="91" y1="439.5" x2="95" y2="439.5" stroke="#333" stroke-width="1" />
<line x1="91" y1="438.5" x2="95" y2="438.5" stroke="#333" stroke-width="1" />
<line x1="87" y1="437.5" x2="95" y2="437.5" stroke="#333" stroke-width="1" />
<line x1="91" y1="430.5" x2="95" y2="430.5" stroke="#333" stroke-width="1" />
<line x1="91" y1="426.5" x2="95" y2="426.5" stroke="#333" stroke-width="1" />
<line x1="91" y1="423.5" x2="95" y2="423.5" stroke="#333" stroke-width="1" />
<line x1="91" y1="421.5" x2="95" y2="421.5" stroke="#333" stroke-width="1" />
<text x="82" y="444.09999999999997" font-size="12.5" text-anchor="end" fill="#404040">10<tspan dx="0.8" dy="-6.5">&#8211;9</tspan></text>
<text x="82" y="466.09999999999997" font-size="12.5" text-anchor="end" fill="#404040">10<tspan dx="0.8" dy="-6.5">&#8211;10</tspan></text>
<text x="82" y="488.09999999999997" font-size="12.5" text-anchor="end" fill="#404040">10<tspan dx="0.8" dy="-6.5">&#8211;11</tspan></text>
<text x="82" y="510.09999999999997" font-size="12.5" text-anchor="end" fill="#404040">10<tspan dx="0.8" dy="-6.5">&#8211;12</tspan></text>
<text transform="translate(34.5,466) rotate(-90)" font-size="12.5" text-anchor="middle" fill="#404040" textLength="69.5" lengthAdjust="spacingAndGlyphs">P dyn/cm^2</text>
<line x1="91" y1="686.5" x2="95" y2="686.5" stroke="#333" stroke-width="1" />
<line x1="91" y1="680.5" x2="95" y2="680.5" stroke="#333" stroke-width="1" />
<line x1="91" y1="675.5" x2="95" y2="675.5" stroke="#333" stroke-width="1" />
<line x1="91" y1="671.5" x2="95" y2="671.5" stroke="#333" stroke-width="1" />
<line x1="91" y1="667.5" x2="95" y2="667.5" stroke="#333" stroke-width="1" />
<line x1="91" y1="664.5" x2="95" y2="664.5" stroke="#333" stroke-width="1" />
<line x1="91" y1="661.5" x2="95" y2="661.5" stroke="#333" stroke-width="1" />
<line x1="87" y1="659.5" x2="95" y2="659.5" stroke="#333" stroke-width="1" />
<line x1="91" y1="643.5" x2="95" y2="643.5" stroke="#333" stroke-width="1" />
<line x1="91" y1="634.5" x2="95" y2="634.5" stroke="#333" stroke-width="1" />
<line x1="91" y1="628.5" x2="95" y2="628.5" stroke="#333" stroke-width="1" />
<line x1="91" y1="623.5" x2="95" y2="623.5" stroke="#333" stroke-width="1" />
<line x1="91" y1="618.5" x2="95" y2="618.5" stroke="#333" stroke-width="1" />
<line x1="91" y1="615.5" x2="95" y2="615.5" stroke="#333" stroke-width="1" />
<line x1="91" y1="612.5" x2="95" y2="612.5" stroke="#333" stroke-width="1" />
<line x1="91" y1="609.5" x2="95" y2="609.5" stroke="#333" stroke-width="1" />
<line x1="87" y1="607.5" x2="95" y2="607.5" stroke="#333" stroke-width="1" />
<line x1="91" y1="591.5" x2="95" y2="591.5" stroke="#333" stroke-width="1" />
<line x1="91" y1="582.5" x2="95" y2="582.5" stroke="#333" stroke-width="1" />
<line x1="91" y1="575.5" x2="95" y2="575.5" stroke="#333" stroke-width="1" />
<line x1="91" y1="570.5" x2="95" y2="570.5" stroke="#333" stroke-width="1" />
<line x1="91" y1="566.5" x2="95" y2="566.5" stroke="#333" stroke-width="1" />
<line x1="91" y1="563.5" x2="95" y2="563.5" stroke="#333" stroke-width="1" />
<line x1="91" y1="560.5" x2="95" y2="560.5" stroke="#333" stroke-width="1" />
<line x1="91" y1="557.5" x2="95" y2="557.5" stroke="#333" stroke-width="1" />
<line x1="87" y1="555.5" x2="95" y2="555.5" stroke="#333" stroke-width="1" />
<line x1="91" y1="539.5" x2="95" y2="539.5" stroke="#333" stroke-width="1" />
<line x1="91" y1="530.5" x2="95" y2="530.5" stroke="#333" stroke-width="1" />
<line x1="91" y1="523.5" x2="95" y2="523.5" stroke="#333" stroke-width="1" />
<line x1="91" y1="518.5" x2="95" y2="518.5" stroke="#333" stroke-width="1" />
<line x1="91" y1="514.5" x2="95" y2="514.5" stroke="#333" stroke-width="1" />
<text x="82" y="561.6" font-size="12.5" text-anchor="end" fill="#404040">10<tspan dx="0.8" dy="-6.5">4</tspan></text>
<text x="82" y="613.8" font-size="12.5" text-anchor="end" fill="#404040">10<tspan dx="0.8" dy="-6.5">3</tspan></text>
<text x="82" y="666.0" font-size="12.5" text-anchor="end" fill="#404040">10<tspan dx="0.8" dy="-6.5">2</tspan></text>
<text x="8.5" y="537" font-size="12.5" text-anchor="start" fill="#404040"  textLength="66.5" lengthAdjust="spacingAndGlyphs">LEMMS Ions</text>
<text transform="translate(50,602) rotate(-90)" font-size="12.5" text-anchor="middle" fill="#404040">Energy (keV)</text>
<text x="79.5" y="708" font-size="12.5" text-anchor="end" fill="#404040"  textLength="50.5" lengthAdjust="spacingAndGlyphs">Sunlight?</text>
<rect x="136" y="218" width="1" height="2" fill="#555"/>
<rect x="136" y="414" width="1" height="2" fill="#555"/>
<rect x="136" y="506" width="1" height="2" fill="#555"/>
<rect x="136" y="688" width="1" height="2" fill="#555"/>
<rect x="177" y="218" width="1" height="2" fill="#555"/>
<rect x="177" y="414" width="1" height="2" fill="#555"/>
<rect x="177" y="506" width="1" height="2" fill="#555"/>
<rect x="177" y="688" width="1" height="2" fill="#555"/>
<rect x="218" y="217" width="1" height="3" fill="#555"/>
<rect x="218" y="413" width="1" height="3" fill="#555"/>
<rect x="218" y="505" width="1" height="3" fill="#555"/>
<rect x="218" y="687" width="1" height="3" fill="#555"/>
<rect x="259" y="218" width="1" height="2" fill="#555"/>
<rect x="259" y="414" width="1" height="2" fill="#555"/>
<rect x="259" y="506" width="1" height="2" fill="#555"/>
<rect x="259" y="688" width="1" height="2" fill="#555"/>
<rect x="300" y="218" width="1" height="2" fill="#555"/>
<rect x="300" y="414" width="1" height="2" fill="#555"/>
<rect x="300" y="506" width="1" height="2" fill="#555"/>
<rect x="300" y="688" width="1" height="2" fill="#555"/>
<rect x="342" y="217" width="1" height="3" fill="#555"/>
<rect x="342" y="413" width="1" height="3" fill="#555"/>
<rect x="342" y="505" width="1" height="3" fill="#555"/>
<rect x="342" y="687" width="1" height="3" fill="#555"/>
<rect x="383" y="218" width="1" height="2" fill="#555"/>
<rect x="383" y="414" width="1" height="2" fill="#555"/>
<rect x="383" y="506" width="1" height="2" fill="#555"/>
<rect x="383" y="688" width="1" height="2" fill="#555"/>
<rect x="424" y="218" width="1" height="2" fill="#555"/>
<rect x="424" y="414" width="1" height="2" fill="#555"/>
<rect x="424" y="506" width="1" height="2" fill="#555"/>
<rect x="424" y="688" width="1" height="2" fill="#555"/>
<rect x="465" y="217" width="1" height="3" fill="#555"/>
<rect x="465" y="413" width="1" height="3" fill="#555"/>
<rect x="465" y="505" width="1" height="3" fill="#555"/>
<rect x="465" y="687" width="1" height="3" fill="#555"/>
<rect x="506" y="218" width="1" height="2" fill="#555"/>
<rect x="506" y="414" width="1" height="2" fill="#555"/>
<rect x="506" y="506" width="1" height="2" fill="#555"/>
<rect x="506" y="688" width="1" height="2" fill="#555"/>
<rect x="547" y="218" width="1" height="2" fill="#555"/>
<rect x="547" y="414" width="1" height="2" fill="#555"/>
<rect x="547" y="506" width="1" height="2" fill="#555"/>
<rect x="547" y="688" width="1" height="2" fill="#555"/>
<rect x="588" y="217" width="1" height="3" fill="#555"/>
<rect x="588" y="413" width="1" height="3" fill="#555"/>
<rect x="588" y="505" width="1" height="3" fill="#555"/>
<rect x="588" y="687" width="1" height="3" fill="#555"/>
<rect x="629" y="218" width="1" height="2" fill="#555"/>
<rect x="629" y="414" width="1" height="2" fill="#555"/>
<rect x="629" y="506" width="1" height="2" fill="#555"/>
<rect x="629" y="688" width="1" height="2" fill="#555"/>
<rect x="670" y="218" width="1" height="2" fill="#555"/>
<rect x="670" y="414" width="1" height="2" fill="#555"/>
<rect x="670" y="506" width="1" height="2" fill="#555"/>
<rect x="670" y="688" width="1" height="2" fill="#555"/>
<rect x="711" y="217" width="1" height="3" fill="#555"/>
<rect x="711" y="413" width="1" height="3" fill="#555"/>
<rect x="711" y="505" width="1" height="3" fill="#555"/>
<rect x="711" y="687" width="1" height="3" fill="#555"/>
<rect x="752" y="218" width="1" height="2" fill="#555"/>
<rect x="752" y="414" width="1" height="2" fill="#555"/>
<rect x="752" y="506" width="1" height="2" fill="#555"/>
<rect x="752" y="688" width="1" height="2" fill="#555"/>
<rect x="793" y="218" width="1" height="2" fill="#555"/>
<rect x="793" y="414" width="1" height="2" fill="#555"/>
<rect x="793" y="506" width="1" height="2" fill="#555"/>
<rect x="793" y="688" width="1" height="2" fill="#555"/>
<rect x="834" y="217" width="1" height="3" fill="#555"/>
<rect x="834" y="413" width="1" height="3" fill="#555"/>
<rect x="834" y="505" width="1" height="3" fill="#555"/>
<rect x="834" y="687" width="1" height="3" fill="#555"/>
<rect x="876" y="218" width="1" height="2" fill="#555"/>
<rect x="876" y="414" width="1" height="2" fill="#555"/>
<rect x="876" y="506" width="1" height="2" fill="#555"/>
<rect x="876" y="688" width="1" height="2" fill="#555"/>
<rect x="917" y="218" width="1" height="2" fill="#555"/>
<rect x="917" y="414" width="1" height="2" fill="#555"/>
<rect x="917" y="506" width="1" height="2" fill="#555"/>
<rect x="917" y="688" width="1" height="2" fill="#555"/>
<rect x="958" y="217" width="1" height="3" fill="#555"/>
<rect x="958" y="413" width="1" height="3" fill="#555"/>
<rect x="958" y="505" width="1" height="3" fill="#555"/>
<rect x="958" y="687" width="1" height="3" fill="#555"/>
<rect x="999" y="218" width="1" height="2" fill="#555"/>
<rect x="999" y="414" width="1" height="2" fill="#555"/>
<rect x="999" y="506" width="1" height="2" fill="#555"/>
<rect x="999" y="688" width="1" height="2" fill="#555"/>
<rect x="1040" y="218" width="1" height="2" fill="#555"/>
<rect x="1040" y="414" width="1" height="2" fill="#555"/>
<rect x="1040" y="506" width="1" height="2" fill="#555"/>
<rect x="1040" y="688" width="1" height="2" fill="#555"/>
<line x1="136.5" y1="711" x2="136.5" y2="715" stroke="#333" stroke-width="1" />
<line x1="177.5" y1="711" x2="177.5" y2="715" stroke="#333" stroke-width="1" />
<line x1="218.5" y1="711" x2="218.5" y2="719" stroke="#333" stroke-width="1" />
<line x1="259.5" y1="711" x2="259.5" y2="715" stroke="#333" stroke-width="1" />
<line x1="300.5" y1="711" x2="300.5" y2="715" stroke="#333" stroke-width="1" />
<line x1="342.5" y1="711" x2="342.5" y2="719" stroke="#333" stroke-width="1" />
<line x1="383.5" y1="711" x2="383.5" y2="715" stroke="#333" stroke-width="1" />
<line x1="424.5" y1="711" x2="424.5" y2="715" stroke="#333" stroke-width="1" />
<line x1="465.5" y1="711" x2="465.5" y2="719" stroke="#333" stroke-width="1" />
<line x1="506.5" y1="711" x2="506.5" y2="715" stroke="#333" stroke-width="1" />
<line x1="547.5" y1="711" x2="547.5" y2="715" stroke="#333" stroke-width="1" />
<line x1="588.5" y1="711" x2="588.5" y2="719" stroke="#333" stroke-width="1" />
<line x1="629.5" y1="711" x2="629.5" y2="715" stroke="#333" stroke-width="1" />
<line x1="670.5" y1="711" x2="670.5" y2="715" stroke="#333" stroke-width="1" />
<line x1="711.5" y1="711" x2="711.5" y2="719" stroke="#333" stroke-width="1" />
<line x1="752.5" y1="711" x2="752.5" y2="715" stroke="#333" stroke-width="1" />
<line x1="793.5" y1="711" x2="793.5" y2="715" stroke="#333" stroke-width="1" />
<line x1="834.5" y1="711" x2="834.5" y2="719" stroke="#333" stroke-width="1" />
<line x1="876.5" y1="711" x2="876.5" y2="715" stroke="#333" stroke-width="1" />
<line x1="917.5" y1="711" x2="917.5" y2="715" stroke="#333" stroke-width="1" />
<line x1="958.5" y1="711" x2="958.5" y2="719" stroke="#333" stroke-width="1" />
<line x1="999.5" y1="711" x2="999.5" y2="715" stroke="#333" stroke-width="1" />
<line x1="1040.5" y1="711" x2="1040.5" y2="715" stroke="#333" stroke-width="1" />
<line x1="1081.5" y1="711" x2="1081.5" y2="719" stroke="#333" stroke-width="1" />
<text x="218.5" y="734" font-size="12.5" text-anchor="middle" fill="#404040"  textLength="35.4" lengthAdjust="spacingAndGlyphs">03:00</text>
<text x="218.5" y="749" font-size="12.5" text-anchor="middle" fill="#404040"  textLength="35.4" lengthAdjust="spacingAndGlyphs">15.26</text>
<text x="218.5" y="764" font-size="12.5" text-anchor="middle" fill="#404040"  textLength="35.4" lengthAdjust="spacingAndGlyphs">39.89</text>
<text x="218.5" y="779" font-size="12.5" text-anchor="middle" fill="#404040"  textLength="35.4" lengthAdjust="spacingAndGlyphs">62.00</text>
<text x="341.8" y="734" font-size="12.5" text-anchor="middle" fill="#404040"  textLength="35.4" lengthAdjust="spacingAndGlyphs">06:00</text>
<text x="341.8" y="749" font-size="12.5" text-anchor="middle" fill="#404040"  textLength="35.4" lengthAdjust="spacingAndGlyphs">15.29</text>
<text x="341.8" y="764" font-size="12.5" text-anchor="middle" fill="#404040"  textLength="35.4" lengthAdjust="spacingAndGlyphs">40.25</text>
<text x="341.8" y="779" font-size="12.5" text-anchor="middle" fill="#404040"  textLength="35.4" lengthAdjust="spacingAndGlyphs">62.85</text>
<text x="465.1" y="734" font-size="12.5" text-anchor="middle" fill="#404040"  textLength="35.4" lengthAdjust="spacingAndGlyphs">09:00</text>
<text x="465.1" y="749" font-size="12.5" text-anchor="middle" fill="#404040"  textLength="35.4" lengthAdjust="spacingAndGlyphs">15.33</text>
<text x="465.1" y="764" font-size="12.5" text-anchor="middle" fill="#404040"  textLength="35.4" lengthAdjust="spacingAndGlyphs">40.61</text>
<text x="465.1" y="779" font-size="12.5" text-anchor="middle" fill="#404040"  textLength="35.4" lengthAdjust="spacingAndGlyphs">63.69</text>
<text x="588.3" y="734" font-size="12.5" text-anchor="middle" fill="#404040"  textLength="35.4" lengthAdjust="spacingAndGlyphs">12:00</text>
<text x="588.3" y="749" font-size="12.5" text-anchor="middle" fill="#404040"  textLength="35.4" lengthAdjust="spacingAndGlyphs">15.37</text>
<text x="588.3" y="764" font-size="12.5" text-anchor="middle" fill="#404040"  textLength="35.4" lengthAdjust="spacingAndGlyphs">40.95</text>
<text x="588.3" y="779" font-size="12.5" text-anchor="middle" fill="#404040"  textLength="35.4" lengthAdjust="spacingAndGlyphs">64.52</text>
<text x="711.5" y="734" font-size="12.5" text-anchor="middle" fill="#404040"  textLength="35.4" lengthAdjust="spacingAndGlyphs">15:00</text>
<text x="711.5" y="749" font-size="12.5" text-anchor="middle" fill="#404040"  textLength="35.4" lengthAdjust="spacingAndGlyphs">15.40</text>
<text x="711.5" y="764" font-size="12.5" text-anchor="middle" fill="#404040"  textLength="35.4" lengthAdjust="spacingAndGlyphs">41.29</text>
<text x="711.5" y="779" font-size="12.5" text-anchor="middle" fill="#404040"  textLength="35.4" lengthAdjust="spacingAndGlyphs">65.33</text>
<text x="834.8" y="734" font-size="12.5" text-anchor="middle" fill="#404040"  textLength="35.4" lengthAdjust="spacingAndGlyphs">18:00</text>
<text x="834.8" y="749" font-size="12.5" text-anchor="middle" fill="#404040"  textLength="35.4" lengthAdjust="spacingAndGlyphs">15.44</text>
<text x="834.8" y="764" font-size="12.5" text-anchor="middle" fill="#404040"  textLength="35.4" lengthAdjust="spacingAndGlyphs">41.62</text>
<text x="834.8" y="779" font-size="12.5" text-anchor="middle" fill="#404040"  textLength="35.4" lengthAdjust="spacingAndGlyphs">66.12</text>
<text x="958.0999999999999" y="734" font-size="12.5" text-anchor="middle" fill="#404040"  textLength="35.4" lengthAdjust="spacingAndGlyphs">21:00</text>
<text x="958.0999999999999" y="749" font-size="12.5" text-anchor="middle" fill="#404040"  textLength="35.4" lengthAdjust="spacingAndGlyphs">15.47</text>
<text x="958.0999999999999" y="764" font-size="12.5" text-anchor="middle" fill="#404040"  textLength="35.4" lengthAdjust="spacingAndGlyphs">41.94</text>
<text x="958.0999999999999" y="779" font-size="12.5" text-anchor="middle" fill="#404040"  textLength="35.4" lengthAdjust="spacingAndGlyphs">66.89</text>
<text x="1081.3" y="734" font-size="12.5" text-anchor="middle" fill="#404040"  textLength="35.4" lengthAdjust="spacingAndGlyphs">00:00</text>
<text x="1081.3" y="749" font-size="12.5" text-anchor="middle" fill="#404040"  textLength="35.4" lengthAdjust="spacingAndGlyphs">15.51</text>
<text x="1081.3" y="764" font-size="12.5" text-anchor="middle" fill="#404040"  textLength="35.4" lengthAdjust="spacingAndGlyphs">42.24</text>
<text x="1081.3" y="779" font-size="12.5" text-anchor="middle" fill="#404040"  textLength="35.4" lengthAdjust="spacingAndGlyphs">67.65</text>
<text x="59.5" y="748.5" font-size="12.5" text-anchor="end" fill="#404040"  textLength="44" lengthAdjust="spacingAndGlyphs">LT (hrs)</text>
<text x="59.5" y="763.5" font-size="12.5" text-anchor="end" fill="#404040"  textLength="13.5" lengthAdjust="spacingAndGlyphs">Rs</text>
<text x="60.5" y="778.5" font-size="12.5" text-anchor="end" fill="#404040"  textLength="47.5" lengthAdjust="spacingAndGlyphs">Dipole L</text>
<defs><linearGradient id="cm" x1="0" y1="0" x2="0" y2="1"><stop offset="0.0" stop-color="#d8666e"/><stop offset="0.07" stop-color="#e03838"/><stop offset="0.15" stop-color="#f04a08"/><stop offset="0.22" stop-color="#ff7000"/><stop offset="0.3" stop-color="#f49000"/><stop offset="0.36" stop-color="#e4b400"/><stop offset="0.41" stop-color="#d8dc00"/><stop offset="0.46" stop-color="#b4f000"/><stop offset="0.52" stop-color="#64dc3c"/><stop offset="0.58" stop-color="#1ec864"/><stop offset="0.65" stop-color="#10a884"/><stop offset="0.72" stop-color="#1090b8"/><stop offset="0.8" stop-color="#1e64f0"/><stop offset="0.86" stop-color="#2034ff"/><stop offset="0.92" stop-color="#1010a8"/><stop offset="1.0" stop-color="#000048"/></linearGradient></defs>
<rect x="1092" y="30" width="12" height="191" fill="url(#cm)" />
<line x1="1104.5" y1="30" x2="1104.5" y2="221" stroke="#333" stroke-width="1" />
<rect x="1092" y="226" width="12" height="191" fill="url(#cm)" />
<line x1="1104.5" y1="226" x2="1104.5" y2="417" stroke="#333" stroke-width="1" />
<rect x="1092" y="515" width="12" height="176" fill="url(#cm)" />
<line x1="1104.5" y1="515" x2="1104.5" y2="691" stroke="#333" stroke-width="1" />
<line x1="1104" y1="220.5" x2="1108" y2="220.5" stroke="#333" stroke-width="1" />
<line x1="1104" y1="215.5" x2="1108" y2="215.5" stroke="#333" stroke-width="1" />
<line x1="1104" y1="212.5" x2="1108" y2="212.5" stroke="#333" stroke-width="1" />
<line x1="1104" y1="208.5" x2="1108" y2="208.5" stroke="#333" stroke-width="1" />
<line x1="1104" y1="205.5" x2="1108" y2="205.5" stroke="#333" stroke-width="1" />
<line x1="1104" y1="203.5" x2="1112" y2="203.5" stroke="#333" stroke-width="1" />
<line x1="1104" y1="185.5" x2="1108" y2="185.5" stroke="#333" stroke-width="1" />
<line x1="1104" y1="175.5" x2="1108" y2="175.5" stroke="#333" stroke-width="1" />
<line x1="1104" y1="168.5" x2="1108" y2="168.5" stroke="#333" stroke-width="1" />
<line x1="1104" y1="162.5" x2="1108" y2="162.5" stroke="#333" stroke-width="1" />
<line x1="1104" y1="158.5" x2="1108" y2="158.5" stroke="#333" stroke-width="1" />
<line x1="1104" y1="154.5" x2="1108" y2="154.5" stroke="#333" stroke-width="1" />
<line x1="1104" y1="150.5" x2="1108" y2="150.5" stroke="#333" stroke-width="1" />
<line x1="1104" y1="148.5" x2="1108" y2="148.5" stroke="#333" stroke-width="1" />
<line x1="1104" y1="145.5" x2="1112" y2="145.5" stroke="#333" stroke-width="1" />
<line x1="1104" y1="128.5" x2="1108" y2="128.5" stroke="#333" stroke-width="1" />
<line x1="1104" y1="117.5" x2="1108" y2="117.5" stroke="#333" stroke-width="1" />
<line x1="1104" y1="110.5" x2="1108" y2="110.5" stroke="#333" stroke-width="1" />
<line x1="1104" y1="105.5" x2="1108" y2="105.5" stroke="#333" stroke-width="1" />
<line x1="1104" y1="100.5" x2="1108" y2="100.5" stroke="#333" stroke-width="1" />
<line x1="1104" y1="96.5" x2="1108" y2="96.5" stroke="#333" stroke-width="1" />
<line x1="1104" y1="93.5" x2="1108" y2="93.5" stroke="#333" stroke-width="1" />
<line x1="1104" y1="90.5" x2="1108" y2="90.5" stroke="#333" stroke-width="1" />
<line x1="1104" y1="87.5" x2="1112" y2="87.5" stroke="#333" stroke-width="1" />
<line x1="1104" y1="70.5" x2="1108" y2="70.5" stroke="#333" stroke-width="1" />
<line x1="1104" y1="60.5" x2="1108" y2="60.5" stroke="#333" stroke-width="1" />
<line x1="1104" y1="52.5" x2="1108" y2="52.5" stroke="#333" stroke-width="1" />
<line x1="1104" y1="47.5" x2="1108" y2="47.5" stroke="#333" stroke-width="1" />
<line x1="1104" y1="42.5" x2="1108" y2="42.5" stroke="#333" stroke-width="1" />
<line x1="1104" y1="38.5" x2="1108" y2="38.5" stroke="#333" stroke-width="1" />
<line x1="1104" y1="35.5" x2="1108" y2="35.5" stroke="#333" stroke-width="1" />
<line x1="1104" y1="32.5" x2="1108" y2="32.5" stroke="#333" stroke-width="1" />
<line x1="1104" y1="30.5" x2="1112" y2="30.5" stroke="#333" stroke-width="1" />
<text x="1117" y="36.8" font-size="12.5" fill="#404040">10<tspan dx="0.8" dy="-6.5">&#8211;9</tspan></text>
<text x="1117" y="94.5" font-size="12.5" fill="#404040">10<tspan dx="0.8" dy="-6.5">&#8211;10</tspan></text>
<text x="1117" y="152.20000000000002" font-size="12.5" fill="#404040">10<tspan dx="0.8" dy="-6.5">&#8211;11</tspan></text>
<text x="1117" y="209.90000000000003" font-size="12.5" fill="#404040">10<tspan dx="0.8" dy="-6.5">&#8211;12</tspan></text>
<line x1="1104" y1="415.5" x2="1108" y2="415.5" stroke="#333" stroke-width="1" />
<line x1="1104" y1="411.5" x2="1108" y2="411.5" stroke="#333" stroke-width="1" />
<line x1="1104" y1="407.5" x2="1108" y2="407.5" stroke="#333" stroke-width="1" />
<line x1="1104" y1="404.5" x2="1108" y2="404.5" stroke="#333" stroke-width="1" />
<line x1="1104" y1="401.5" x2="1108" y2="401.5" stroke="#333" stroke-width="1" />
<line x1="1104" y1="398.5" x2="1112" y2="398.5" stroke="#333" stroke-width="1" />
<line x1="1104" y1="381.5" x2="1108" y2="381.5" stroke="#333" stroke-width="1" />
<line x1="1104" y1="371.5" x2="1108" y2="371.5" stroke="#333" stroke-width="1" />
<line x1="1104" y1="363.5" x2="1108" y2="363.5" stroke="#333" stroke-width="1" />
<line x1="1104" y1="358.5" x2="1108" y2="358.5" stroke="#333" stroke-width="1" />
<line x1="1104" y1="353.5" x2="1108" y2="353.5" stroke="#333" stroke-width="1" />
<line x1="1104" y1="349.5" x2="1108" y2="349.5" stroke="#333" stroke-width="1" />
<line x1="1104" y1="346.5" x2="1108" y2="346.5" stroke="#333" stroke-width="1" />
<line x1="1104" y1="343.5" x2="1108" y2="343.5" stroke="#333" stroke-width="1" />
<line x1="1104" y1="340.5" x2="1112" y2="340.5" stroke="#333" stroke-width="1" />
<line x1="1104" y1="323.5" x2="1108" y2="323.5" stroke="#333" stroke-width="1" />
<line x1="1104" y1="313.5" x2="1108" y2="313.5" stroke="#333" stroke-width="1" />
<line x1="1104" y1="306.5" x2="1108" y2="306.5" stroke="#333" stroke-width="1" />
<line x1="1104" y1="300.5" x2="1108" y2="300.5" stroke="#333" stroke-width="1" />
<line x1="1104" y1="296.5" x2="1108" y2="296.5" stroke="#333" stroke-width="1" />
<line x1="1104" y1="292.5" x2="1108" y2="292.5" stroke="#333" stroke-width="1" />
<line x1="1104" y1="288.5" x2="1108" y2="288.5" stroke="#333" stroke-width="1" />
<line x1="1104" y1="285.5" x2="1108" y2="285.5" stroke="#333" stroke-width="1" />
<line x1="1104" y1="283.5" x2="1112" y2="283.5" stroke="#333" stroke-width="1" />
<line x1="1104" y1="265.5" x2="1108" y2="265.5" stroke="#333" stroke-width="1" />
<line x1="1104" y1="255.5" x2="1108" y2="255.5" stroke="#333" stroke-width="1" />
<line x1="1104" y1="248.5" x2="1108" y2="248.5" stroke="#333" stroke-width="1" />
<line x1="1104" y1="242.5" x2="1108" y2="242.5" stroke="#333" stroke-width="1" />
<line x1="1104" y1="238.5" x2="1108" y2="238.5" stroke="#333" stroke-width="1" />
<line x1="1104" y1="234.5" x2="1108" y2="234.5" stroke="#333" stroke-width="1" />
<line x1="1104" y1="231.5" x2="1108" y2="231.5" stroke="#333" stroke-width="1" />
<line x1="1104" y1="228.5" x2="1108" y2="228.5" stroke="#333" stroke-width="1" />
<line x1="1104" y1="225.5" x2="1112" y2="225.5" stroke="#333" stroke-width="1" />
<text x="1117" y="232.3" font-size="12.5" fill="#404040">10<tspan dx="0.8" dy="-6.5">&#8211;9</tspan></text>
<text x="1117" y="290.0" font-size="12.5" fill="#404040">10<tspan dx="0.8" dy="-6.5">&#8211;10</tspan></text>
<text x="1117" y="347.7" font-size="12.5" fill="#404040">10<tspan dx="0.8" dy="-6.5">&#8211;11</tspan></text>
<text x="1117" y="405.40000000000003" font-size="12.5" fill="#404040">10<tspan dx="0.8" dy="-6.5">&#8211;12</tspan></text>
<text transform="translate(1165.5,123.5) rotate(90)" font-size="12.5" text-anchor="middle" fill="#404040" textLength="122" lengthAdjust="spacingAndGlyphs">pressure dyne/cm^2</text>
<text transform="translate(1165.5,319.5) rotate(90)" font-size="12.5" text-anchor="middle" fill="#404040" textLength="122" lengthAdjust="spacingAndGlyphs">pressure dyne/cm^2</text>
<line x1="1104" y1="515.5" x2="1112" y2="515.5" stroke="#333" stroke-width="1" />
<line x1="1104" y1="534.5" x2="1108" y2="534.5" stroke="#333" stroke-width="1" />
<line x1="1104" y1="554.5" x2="1112" y2="554.5" stroke="#333" stroke-width="1" />
<line x1="1104" y1="574.5" x2="1108" y2="574.5" stroke="#333" stroke-width="1" />
<line x1="1104" y1="593.5" x2="1112" y2="593.5" stroke="#333" stroke-width="1" />
<line x1="1104" y1="612.5" x2="1108" y2="612.5" stroke="#333" stroke-width="1" />
<line x1="1104" y1="632.5" x2="1112" y2="632.5" stroke="#333" stroke-width="1" />
<line x1="1104" y1="652.5" x2="1108" y2="652.5" stroke="#333" stroke-width="1" />
<line x1="1104" y1="671.5" x2="1112" y2="671.5" stroke="#333" stroke-width="1" />
<line x1="1104" y1="690.5" x2="1108" y2="690.5" stroke="#333" stroke-width="1" />
<text x="1117" y="522.0" font-size="12.5" fill="#404040">10<tspan dx="0.8" dy="-6.5">4</tspan></text>
<text x="1117" y="561.0" font-size="12.5" fill="#404040">10<tspan dx="0.8" dy="-6.5">2</tspan></text>
<text x="1117" y="600.0" font-size="12.5" fill="#404040">10<tspan dx="0.8" dy="-6.5">0</tspan></text>
<text x="1117" y="639.0" font-size="12.5" fill="#404040">10<tspan dx="0.8" dy="-6.5">&#8211;2</tspan></text>
<text x="1117" y="678.0" font-size="12.5" fill="#404040">10<tspan dx="0.8" dy="-6.5">&#8211;4</tspan></text>
<text transform="translate(1159.5,601.5) rotate(90)" font-size="12.5" text-anchor="middle" fill="#404040" textLength="168" lengthAdjust="spacingAndGlyphs">intensity 1/(s cm^2 ster keV)</text>
<line x1="1091" y1="427" x2="1103" y2="431.5" stroke="#0000ff" stroke-width="1.5" />
<text x="1107" y="434" font-size="12.5" text-anchor="start" fill="#404040"  textLength="53.5" lengthAdjust="spacingAndGlyphs">CHEMS-P</text>
<line x1="1091" y1="444" x2="1103" y2="448.5" stroke="#ff0000" stroke-width="1.5" />
<text x="1107" y="451" font-size="12.5" text-anchor="start" fill="#404040"  textLength="52.5" lengthAdjust="spacingAndGlyphs">LEMMS-P</text>
<line x1="1091" y1="461" x2="1103" y2="465.5" stroke="#00ff00" stroke-width="1.5" />
<text x="1107" y="468" font-size="12.5" text-anchor="start" fill="#404040"  textLength="55.5" lengthAdjust="spacingAndGlyphs">CHEMS-O</text>
<rect x="215.4" y="802.6" width="150.49999999999997" height="147.69999999999993" fill="none" stroke="#333" stroke-width="1.2"/>
<line x1="206.4" y1="803.5" x2="215.4" y2="803.5" stroke="#333" stroke-width="1" />
<line x1="210.9" y1="804.5" x2="215.4" y2="804.5" stroke="#2a2a2a" stroke-width="1" />
<line x1="210.9" y1="806.5" x2="215.4" y2="806.5" stroke="#2a2a2a" stroke-width="1" />
<line x1="210.9" y1="808.5" x2="215.4" y2="808.5" stroke="#2a2a2a" stroke-width="1" />
<line x1="210.9" y1="810.5" x2="215.4" y2="810.5" stroke="#2a2a2a" stroke-width="1" />
<line x1="210.9" y1="812.5" x2="215.4" y2="812.5" stroke="#2a2a2a" stroke-width="1" />
<line x1="210.9" y1="814.5" x2="215.4" y2="814.5" stroke="#2a2a2a" stroke-width="1" />
<line x1="210.9" y1="816.5" x2="215.4" y2="816.5" stroke="#2a2a2a" stroke-width="1" />
<line x1="210.9" y1="817.5" x2="215.4" y2="817.5" stroke="#2a2a2a" stroke-width="1" />
<line x1="210.9" y1="819.5" x2="215.4" y2="819.5" stroke="#2a2a2a" stroke-width="1" />
<line x1="206.4" y1="821.5" x2="215.4" y2="821.5" stroke="#333" stroke-width="1" />
<line x1="210.9" y1="823.5" x2="215.4" y2="823.5" stroke="#2a2a2a" stroke-width="1" />
<line x1="210.9" y1="825.5" x2="215.4" y2="825.5" stroke="#2a2a2a" stroke-width="1" />
<line x1="210.9" y1="827.5" x2="215.4" y2="827.5" stroke="#2a2a2a" stroke-width="1" />
<line x1="210.9" y1="828.5" x2="215.4" y2="828.5" stroke="#2a2a2a" stroke-width="1" />
<line x1="210.9" y1="830.5" x2="215.4" y2="830.5" stroke="#2a2a2a" stroke-width="1" />
<line x1="210.9" y1="832.5" x2="215.4" y2="832.5" stroke="#2a2a2a" stroke-width="1" />
<line x1="210.9" y1="834.5" x2="215.4" y2="834.5" stroke="#2a2a2a" stroke-width="1" />
<line x1="210.9" y1="836.5" x2="215.4" y2="836.5" stroke="#2a2a2a" stroke-width="1" />
<line x1="210.9" y1="838.5" x2="215.4" y2="838.5" stroke="#2a2a2a" stroke-width="1" />
<line x1="206.4" y1="840.5" x2="215.4" y2="840.5" stroke="#333" stroke-width="1" />
<line x1="210.9" y1="841.5" x2="215.4" y2="841.5" stroke="#2a2a2a" stroke-width="1" />
<line x1="210.9" y1="843.5" x2="215.4" y2="843.5" stroke="#2a2a2a" stroke-width="1" />
<line x1="210.9" y1="845.5" x2="215.4" y2="845.5" stroke="#2a2a2a" stroke-width="1" />
<line x1="210.9" y1="847.5" x2="215.4" y2="847.5" stroke="#2a2a2a" stroke-width="1" />
<line x1="210.9" y1="849.5" x2="215.4" y2="849.5" stroke="#2a2a2a" stroke-width="1" />
<line x1="210.9" y1="851.5" x2="215.4" y2="851.5" stroke="#2a2a2a" stroke-width="1" />
<line x1="210.9" y1="852.5" x2="215.4" y2="852.5" stroke="#2a2a2a" stroke-width="1" />
<line x1="210.9" y1="854.5" x2="215.4" y2="854.5" stroke="#2a2a2a" stroke-width="1" />
<line x1="210.9" y1="856.5" x2="215.4" y2="856.5" stroke="#2a2a2a" stroke-width="1" />
<line x1="206.4" y1="858.5" x2="215.4" y2="858.5" stroke="#333" stroke-width="1" />
<line x1="210.9" y1="860.5" x2="215.4" y2="860.5" stroke="#2a2a2a" stroke-width="1" />
<line x1="210.9" y1="862.5" x2="215.4" y2="862.5" stroke="#2a2a2a" stroke-width="1" />
<line x1="210.9" y1="864.5" x2="215.4" y2="864.5" stroke="#2a2a2a" stroke-width="1" />
<line x1="210.9" y1="865.5" x2="215.4" y2="865.5" stroke="#2a2a2a" stroke-width="1" />
<line x1="210.9" y1="867.5" x2="215.4" y2="867.5" stroke="#2a2a2a" stroke-width="1" />
<line x1="210.9" y1="869.5" x2="215.4" y2="869.5" stroke="#2a2a2a" stroke-width="1" />
<line x1="210.9" y1="871.5" x2="215.4" y2="871.5" stroke="#2a2a2a" stroke-width="1" />
<line x1="210.9" y1="873.5" x2="215.4" y2="873.5" stroke="#2a2a2a" stroke-width="1" />
<line x1="210.9" y1="875.5" x2="215.4" y2="875.5" stroke="#2a2a2a" stroke-width="1" />
<line x1="206.4" y1="876.5" x2="215.4" y2="876.5" stroke="#333" stroke-width="1" />
<line x1="210.9" y1="878.5" x2="215.4" y2="878.5" stroke="#2a2a2a" stroke-width="1" />
<line x1="210.9" y1="880.5" x2="215.4" y2="880.5" stroke="#2a2a2a" stroke-width="1" />
<line x1="210.9" y1="882.5" x2="215.4" y2="882.5" stroke="#2a2a2a" stroke-width="1" />
<line x1="210.9" y1="884.5" x2="215.4" y2="884.5" stroke="#2a2a2a" stroke-width="1" />
<line x1="210.9" y1="886.5" x2="215.4" y2="886.5" stroke="#2a2a2a" stroke-width="1" />
<line x1="210.9" y1="888.5" x2="215.4" y2="888.5" stroke="#2a2a2a" stroke-width="1" />
<line x1="210.9" y1="889.5" x2="215.4" y2="889.5" stroke="#2a2a2a" stroke-width="1" />
<line x1="210.9" y1="891.5" x2="215.4" y2="891.5" stroke="#2a2a2a" stroke-width="1" />
<line x1="210.9" y1="893.5" x2="215.4" y2="893.5" stroke="#2a2a2a" stroke-width="1" />
<line x1="206.4" y1="895.5" x2="215.4" y2="895.5" stroke="#333" stroke-width="1" />
<line x1="210.9" y1="897.5" x2="215.4" y2="897.5" stroke="#2a2a2a" stroke-width="1" />
<line x1="210.9" y1="899.5" x2="215.4" y2="899.5" stroke="#2a2a2a" stroke-width="1" />
<line x1="210.9" y1="900.5" x2="215.4" y2="900.5" stroke="#2a2a2a" stroke-width="1" />
<line x1="210.9" y1="902.5" x2="215.4" y2="902.5" stroke="#2a2a2a" stroke-width="1" />
<line x1="210.9" y1="904.5" x2="215.4" y2="904.5" stroke="#2a2a2a" stroke-width="1" />
<line x1="210.9" y1="906.5" x2="215.4" y2="906.5" stroke="#2a2a2a" stroke-width="1" />
<line x1="210.9" y1="908.5" x2="215.4" y2="908.5" stroke="#2a2a2a" stroke-width="1" />
<line x1="210.9" y1="910.5" x2="215.4" y2="910.5" stroke="#2a2a2a" stroke-width="1" />
<line x1="210.9" y1="912.5" x2="215.4" y2="912.5" stroke="#2a2a2a" stroke-width="1" />
<line x1="206.4" y1="913.5" x2="215.4" y2="913.5" stroke="#333" stroke-width="1" />
<line x1="210.9" y1="915.5" x2="215.4" y2="915.5" stroke="#2a2a2a" stroke-width="1" />
<line x1="210.9" y1="917.5" x2="215.4" y2="917.5" stroke="#2a2a2a" stroke-width="1" />
<line x1="210.9" y1="919.5" x2="215.4" y2="919.5" stroke="#2a2a2a" stroke-width="1" />
<line x1="210.9" y1="921.5" x2="215.4" y2="921.5" stroke="#2a2a2a" stroke-width="1" />
<line x1="210.9" y1="923.5" x2="215.4" y2="923.5" stroke="#2a2a2a" stroke-width="1" />
<line x1="210.9" y1="924.5" x2="215.4" y2="924.5" stroke="#2a2a2a" stroke-width="1" />
<line x1="210.9" y1="926.5" x2="215.4" y2="926.5" stroke="#2a2a2a" stroke-width="1" />
<line x1="210.9" y1="928.5" x2="215.4" y2="928.5" stroke="#2a2a2a" stroke-width="1" />
<line x1="210.9" y1="930.5" x2="215.4" y2="930.5" stroke="#2a2a2a" stroke-width="1" />
<line x1="206.4" y1="932.5" x2="215.4" y2="932.5" stroke="#333" stroke-width="1" />
<line x1="210.9" y1="934.5" x2="215.4" y2="934.5" stroke="#2a2a2a" stroke-width="1" />
<line x1="210.9" y1="936.5" x2="215.4" y2="936.5" stroke="#2a2a2a" stroke-width="1" />
<line x1="210.9" y1="937.5" x2="215.4" y2="937.5" stroke="#2a2a2a" stroke-width="1" />
<line x1="210.9" y1="939.5" x2="215.4" y2="939.5" stroke="#2a2a2a" stroke-width="1" />
<line x1="210.9" y1="941.5" x2="215.4" y2="941.5" stroke="#2a2a2a" stroke-width="1" />
<line x1="210.9" y1="943.5" x2="215.4" y2="943.5" stroke="#2a2a2a" stroke-width="1" />
<line x1="210.9" y1="945.5" x2="215.4" y2="945.5" stroke="#2a2a2a" stroke-width="1" />
<line x1="210.9" y1="947.5" x2="215.4" y2="947.5" stroke="#2a2a2a" stroke-width="1" />
<line x1="210.9" y1="948.5" x2="215.4" y2="948.5" stroke="#2a2a2a" stroke-width="1" />
<line x1="206.4" y1="950.5" x2="215.4" y2="950.5" stroke="#333" stroke-width="1" />
<text x="201.4" y="807.6" font-size="12.5" text-anchor="end" fill="#404040" letter-spacing="0.5">-40.</text>
<text x="201.4" y="826.0625" font-size="12.5" text-anchor="end" fill="#404040" letter-spacing="0.5">-30.</text>
<text x="201.4" y="844.525" font-size="12.5" text-anchor="end" fill="#404040" letter-spacing="0.5">-20.</text>
<text x="201.4" y="862.9875" font-size="12.5" text-anchor="end" fill="#404040" letter-spacing="0.5">-10.</text>
<text x="201.4" y="881.45" font-size="12.5" text-anchor="end" fill="#404040" letter-spacing="0.5">0.</text>
<text x="201.4" y="899.9125" font-size="12.5" text-anchor="end" fill="#404040" letter-spacing="0.5">10.</text>
<text x="201.4" y="918.375" font-size="12.5" text-anchor="end" fill="#404040" letter-spacing="0.5">20.</text>
<text x="201.4" y="936.8375" font-size="12.5" text-anchor="end" fill="#404040" letter-spacing="0.5">30.</text>
<text x="201.4" y="955.3" font-size="12.5" text-anchor="end" fill="#404040" letter-spacing="0.5">40.</text>
<line x1="215.4" y1="950.3" x2="215.4" y2="958.3" stroke="#333" stroke-width="1" />
<line x1="234.2125" y1="950.3" x2="234.2125" y2="954.3" stroke="#333" stroke-width="1" />
<line x1="253.025" y1="950.3" x2="253.025" y2="958.3" stroke="#333" stroke-width="1" />
<line x1="271.8375" y1="950.3" x2="271.8375" y2="954.3" stroke="#333" stroke-width="1" />
<line x1="290.65" y1="950.3" x2="290.65" y2="958.3" stroke="#333" stroke-width="1" />
<line x1="309.4625" y1="950.3" x2="309.4625" y2="954.3" stroke="#333" stroke-width="1" />
<line x1="328.275" y1="950.3" x2="328.275" y2="958.3" stroke="#333" stroke-width="1" />
<line x1="347.0875" y1="950.3" x2="347.0875" y2="954.3" stroke="#333" stroke-width="1" />
<line x1="365.9" y1="950.3" x2="365.9" y2="958.3" stroke="#333" stroke-width="1" />
<text x="217.4" y="973.5" font-size="12.5" text-anchor="middle" fill="#404040" letter-spacing="0.5">40.</text>
<text x="255.025" y="973.5" font-size="12.5" text-anchor="middle" fill="#404040" letter-spacing="0.5">20.</text>
<text x="292.65" y="973.5" font-size="12.5" text-anchor="middle" fill="#404040" letter-spacing="0.5">0.</text>
<text x="330.275" y="973.5" font-size="12.5" text-anchor="middle" fill="#404040" letter-spacing="0.5">-20.</text>
<text x="367.9" y="973.5" font-size="12.5" text-anchor="middle" fill="#404040" letter-spacing="0.5">-40.</text>
<text x="290.65" y="991.5" font-size="12.5" text-anchor="middle" fill="#404040" letter-spacing="0.3">KSM-X</text>
<text transform="translate(166.4,876.5) rotate(-90)" font-size="12.5" text-anchor="middle" fill="#404040" letter-spacing="0.3">KSM-Y</text>
<rect x="509.7" y="802.6" width="150.50000000000006" height="147.69999999999993" fill="none" stroke="#333" stroke-width="1.2"/>
<line x1="500.7" y1="803.5" x2="509.7" y2="803.5" stroke="#333" stroke-width="1" />
<line x1="505.2" y1="804.5" x2="509.7" y2="804.5" stroke="#2a2a2a" stroke-width="1" />
<line x1="505.2" y1="806.5" x2="509.7" y2="806.5" stroke="#2a2a2a" stroke-width="1" />
<line x1="505.2" y1="808.5" x2="509.7" y2="808.5" stroke="#2a2a2a" stroke-width="1" />
<line x1="505.2" y1="810.5" x2="509.7" y2="810.5" stroke="#2a2a2a" stroke-width="1" />
<line x1="505.2" y1="812.5" x2="509.7" y2="812.5" stroke="#2a2a2a" stroke-width="1" />
<line x1="505.2" y1="814.5" x2="509.7" y2="814.5" stroke="#2a2a2a" stroke-width="1" />
<line x1="505.2" y1="816.5" x2="509.7" y2="816.5" stroke="#2a2a2a" stroke-width="1" />
<line x1="505.2" y1="817.5" x2="509.7" y2="817.5" stroke="#2a2a2a" stroke-width="1" />
<line x1="505.2" y1="819.5" x2="509.7" y2="819.5" stroke="#2a2a2a" stroke-width="1" />
<line x1="500.7" y1="821.5" x2="509.7" y2="821.5" stroke="#333" stroke-width="1" />
<line x1="505.2" y1="823.5" x2="509.7" y2="823.5" stroke="#2a2a2a" stroke-width="1" />
<line x1="505.2" y1="825.5" x2="509.7" y2="825.5" stroke="#2a2a2a" stroke-width="1" />
<line x1="505.2" y1="827.5" x2="509.7" y2="827.5" stroke="#2a2a2a" stroke-width="1" />
<line x1="505.2" y1="828.5" x2="509.7" y2="828.5" stroke="#2a2a2a" stroke-width="1" />
<line x1="505.2" y1="830.5" x2="509.7" y2="830.5" stroke="#2a2a2a" stroke-width="1" />
<line x1="505.2" y1="832.5" x2="509.7" y2="832.5" stroke="#2a2a2a" stroke-width="1" />
<line x1="505.2" y1="834.5" x2="509.7" y2="834.5" stroke="#2a2a2a" stroke-width="1" />
<line x1="505.2" y1="836.5" x2="509.7" y2="836.5" stroke="#2a2a2a" stroke-width="1" />
<line x1="505.2" y1="838.5" x2="509.7" y2="838.5" stroke="#2a2a2a" stroke-width="1" />
<line x1="500.7" y1="840.5" x2="509.7" y2="840.5" stroke="#333" stroke-width="1" />
<line x1="505.2" y1="841.5" x2="509.7" y2="841.5" stroke="#2a2a2a" stroke-width="1" />
<line x1="505.2" y1="843.5" x2="509.7" y2="843.5" stroke="#2a2a2a" stroke-width="1" />
<line x1="505.2" y1="845.5" x2="509.7" y2="845.5" stroke="#2a2a2a" stroke-width="1" />
<line x1="505.2" y1="847.5" x2="509.7" y2="847.5" stroke="#2a2a2a" stroke-width="1" />
<line x1="505.2" y1="849.5" x2="509.7" y2="849.5" stroke="#2a2a2a" stroke-width="1" />
<line x1="505.2" y1="851.5" x2="509.7" y2="851.5" stroke="#2a2a2a" stroke-width="1" />
<line x1="505.2" y1="852.5" x2="509.7" y2="852.5" stroke="#2a2a2a" stroke-width="1" />
<line x1="505.2" y1="854.5" x2="509.7" y2="854.5" stroke="#2a2a2a" stroke-width="1" />
<line x1="505.2" y1="856.5" x2="509.7" y2="856.5" stroke="#2a2a2a" stroke-width="1" />
<line x1="500.7" y1="858.5" x2="509.7" y2="858.5" stroke="#333" stroke-width="1" />
<line x1="505.2" y1="860.5" x2="509.7" y2="860.5" stroke="#2a2a2a" stroke-width="1" />
<line x1="505.2" y1="862.5" x2="509.7" y2="862.5" stroke="#2a2a2a" stroke-width="1" />
<line x1="505.2" y1="864.5" x2="509.7" y2="864.5" stroke="#2a2a2a" stroke-width="1" />
<line x1="505.2" y1="865.5" x2="509.7" y2="865.5" stroke="#2a2a2a" stroke-width="1" />
<line x1="505.2" y1="867.5" x2="509.7" y2="867.5" stroke="#2a2a2a" stroke-width="1" />
<line x1="505.2" y1="869.5" x2="509.7" y2="869.5" stroke="#2a2a2a" stroke-width="1" />
<line x1="505.2" y1="871.5" x2="509.7" y2="871.5" stroke="#2a2a2a" stroke-width="1" />
<line x1="505.2" y1="873.5" x2="509.7" y2="873.5" stroke="#2a2a2a" stroke-width="1" />
<line x1="505.2" y1="875.5" x2="509.7" y2="875.5" stroke="#2a2a2a" stroke-width="1" />
<line x1="500.7" y1="876.5" x2="509.7" y2="876.5" stroke="#333" stroke-width="1" />
<line x1="505.2" y1="878.5" x2="509.7" y2="878.5" stroke="#2a2a2a" stroke-width="1" />
<line x1="505.2" y1="880.5" x2="509.7" y2="880.5" stroke="#2a2a2a" stroke-width="1" />
<line x1="505.2" y1="882.5" x2="509.7" y2="882.5" stroke="#2a2a2a" stroke-width="1" />
<line x1="505.2" y1="884.5" x2="509.7" y2="884.5" stroke="#2a2a2a" stroke-width="1" />
<line x1="505.2" y1="886.5" x2="509.7" y2="886.5" stroke="#2a2a2a" stroke-width="1" />
<line x1="505.2" y1="888.5" x2="509.7" y2="888.5" stroke="#2a2a2a" stroke-width="1" />
<line x1="505.2" y1="889.5" x2="509.7" y2="889.5" stroke="#2a2a2a" stroke-width="1" />
<line x1="505.2" y1="891.5" x2="509.7" y2="891.5" stroke="#2a2a2a" stroke-width="1" />
<line x1="505.2" y1="893.5" x2="509.7" y2="893.5" stroke="#2a2a2a" stroke-width="1" />
<line x1="500.7" y1="895.5" x2="509.7" y2="895.5" stroke="#333" stroke-width="1" />
<line x1="505.2" y1="897.5" x2="509.7" y2="897.5" stroke="#2a2a2a" stroke-width="1" />
<line x1="505.2" y1="899.5" x2="509.7" y2="899.5" stroke="#2a2a2a" stroke-width="1" />
<line x1="505.2" y1="900.5" x2="509.7" y2="900.5" stroke="#2a2a2a" stroke-width="1" />
<line x1="505.2" y1="902.5" x2="509.7" y2="902.5" stroke="#2a2a2a" stroke-width="1" />
<line x1="505.2" y1="904.5" x2="509.7" y2="904.5" stroke="#2a2a2a" stroke-width="1" />
<line x1="505.2" y1="906.5" x2="509.7" y2="906.5" stroke="#2a2a2a" stroke-width="1" />
<line x1="505.2" y1="908.5" x2="509.7" y2="908.5" stroke="#2a2a2a" stroke-width="1" />
<line x1="505.2" y1="910.5" x2="509.7" y2="910.5" stroke="#2a2a2a" stroke-width="1" />
<line x1="505.2" y1="912.5" x2="509.7" y2="912.5" stroke="#2a2a2a" stroke-width="1" />
<line x1="500.7" y1="913.5" x2="509.7" y2="913.5" stroke="#333" stroke-width="1" />
<line x1="505.2" y1="915.5" x2="509.7" y2="915.5" stroke="#2a2a2a" stroke-width="1" />
<line x1="505.2" y1="917.5" x2="509.7" y2="917.5" stroke="#2a2a2a" stroke-width="1" />
<line x1="505.2" y1="919.5" x2="509.7" y2="919.5" stroke="#2a2a2a" stroke-width="1" />
<line x1="505.2" y1="921.5" x2="509.7" y2="921.5" stroke="#2a2a2a" stroke-width="1" />
<line x1="505.2" y1="923.5" x2="509.7" y2="923.5" stroke="#2a2a2a" stroke-width="1" />
<line x1="505.2" y1="924.5" x2="509.7" y2="924.5" stroke="#2a2a2a" stroke-width="1" />
<line x1="505.2" y1="926.5" x2="509.7" y2="926.5" stroke="#2a2a2a" stroke-width="1" />
<line x1="505.2" y1="928.5" x2="509.7" y2="928.5" stroke="#2a2a2a" stroke-width="1" />
<line x1="505.2" y1="930.5" x2="509.7" y2="930.5" stroke="#2a2a2a" stroke-width="1" />
<line x1="500.7" y1="932.5" x2="509.7" y2="932.5" stroke="#333" stroke-width="1" />
<line x1="505.2" y1="934.5" x2="509.7" y2="934.5" stroke="#2a2a2a" stroke-width="1" />
<line x1="505.2" y1="936.5" x2="509.7" y2="936.5" stroke="#2a2a2a" stroke-width="1" />
<line x1="505.2" y1="937.5" x2="509.7" y2="937.5" stroke="#2a2a2a" stroke-width="1" />
<line x1="505.2" y1="939.5" x2="509.7" y2="939.5" stroke="#2a2a2a" stroke-width="1" />
<line x1="505.2" y1="941.5" x2="509.7" y2="941.5" stroke="#2a2a2a" stroke-width="1" />
<line x1="505.2" y1="943.5" x2="509.7" y2="943.5" stroke="#2a2a2a" stroke-width="1" />
<line x1="505.2" y1="945.5" x2="509.7" y2="945.5" stroke="#2a2a2a" stroke-width="1" />
<line x1="505.2" y1="947.5" x2="509.7" y2="947.5" stroke="#2a2a2a" stroke-width="1" />
<line x1="505.2" y1="948.5" x2="509.7" y2="948.5" stroke="#2a2a2a" stroke-width="1" />
<line x1="500.7" y1="950.5" x2="509.7" y2="950.5" stroke="#333" stroke-width="1" />
<text x="495.7" y="807.6" font-size="12.5" text-anchor="end" fill="#404040" letter-spacing="0.5">40.</text>
<text x="495.7" y="826.0625" font-size="12.5" text-anchor="end" fill="#404040" letter-spacing="0.5">30.</text>
<text x="495.7" y="844.525" font-size="12.5" text-anchor="end" fill="#404040" letter-spacing="0.5">20.</text>
<text x="495.7" y="862.9875" font-size="12.5" text-anchor="end" fill="#404040" letter-spacing="0.5">10.</text>
<text x="495.7" y="881.45" font-size="12.5" text-anchor="end" fill="#404040" letter-spacing="0.5">0.</text>
<text x="495.7" y="899.9125" font-size="12.5" text-anchor="end" fill="#404040" letter-spacing="0.5">-10.</text>
<text x="495.7" y="918.375" font-size="12.5" text-anchor="end" fill="#404040" letter-spacing="0.5">-20.</text>
<text x="495.7" y="936.8375" font-size="12.5" text-anchor="end" fill="#404040" letter-spacing="0.5">-30.</text>
<text x="495.7" y="955.3" font-size="12.5" text-anchor="end" fill="#404040" letter-spacing="0.5">-40.</text>
<line x1="509.7" y1="950.3" x2="509.7" y2="958.3" stroke="#333" stroke-width="1" />
<line x1="528.5125" y1="950.3" x2="528.5125" y2="954.3" stroke="#333" stroke-width="1" />
<line x1="547.325" y1="950.3" x2="547.325" y2="958.3" stroke="#333" stroke-width="1" />
<line x1="566.1375" y1="950.3" x2="566.1375" y2="954.3" stroke="#333" stroke-width="1" />
<line x1="584.95" y1="950.3" x2="584.95" y2="958.3" stroke="#333" stroke-width="1" />
<line x1="603.7625" y1="950.3" x2="603.7625" y2="954.3" stroke="#333" stroke-width="1" />
<line x1="622.575" y1="950.3" x2="622.575" y2="958.3" stroke="#333" stroke-width="1" />
<line x1="641.3875" y1="950.3" x2="641.3875" y2="954.3" stroke="#333" stroke-width="1" />
<line x1="660.2" y1="950.3" x2="660.2" y2="958.3" stroke="#333" stroke-width="1" />
<text x="511.7" y="973.5" font-size="12.5" text-anchor="middle" fill="#404040" letter-spacing="0.5">40.</text>
<text x="549.325" y="973.5" font-size="12.5" text-anchor="middle" fill="#404040" letter-spacing="0.5">20.</text>
<text x="586.95" y="973.5" font-size="12.5" text-anchor="middle" fill="#404040" letter-spacing="0.5">0.</text>
<text x="624.575" y="973.5" font-size="12.5" text-anchor="middle" fill="#404040" letter-spacing="0.5">-20.</text>
<text x="662.2" y="973.5" font-size="12.5" text-anchor="middle" fill="#404040" letter-spacing="0.5">-40.</text>
<text x="584.95" y="991.5" font-size="12.5" text-anchor="middle" fill="#404040" letter-spacing="0.3">KSM-X</text>
<text transform="translate(460.7,876.5) rotate(-90)" font-size="12.5" text-anchor="middle" fill="#404040" letter-spacing="0.3">KSM-Z</text>
<rect x="803.7" y="802.6" width="150.5" height="147.69999999999993" fill="none" stroke="#333" stroke-width="1.2"/>
<line x1="794.7" y1="803.5" x2="803.7" y2="803.5" stroke="#333" stroke-width="1" />
<line x1="799.2" y1="804.5" x2="803.7" y2="804.5" stroke="#2a2a2a" stroke-width="1" />
<line x1="799.2" y1="806.5" x2="803.7" y2="806.5" stroke="#2a2a2a" stroke-width="1" />
<line x1="799.2" y1="808.5" x2="803.7" y2="808.5" stroke="#2a2a2a" stroke-width="1" />
<line x1="799.2" y1="810.5" x2="803.7" y2="810.5" stroke="#2a2a2a" stroke-width="1" />
<line x1="799.2" y1="812.5" x2="803.7" y2="812.5" stroke="#2a2a2a" stroke-width="1" />
<line x1="799.2" y1="814.5" x2="803.7" y2="814.5" stroke="#2a2a2a" stroke-width="1" />
<line x1="799.2" y1="816.5" x2="803.7" y2="816.5" stroke="#2a2a2a" stroke-width="1" />
<line x1="799.2" y1="817.5" x2="803.7" y2="817.5" stroke="#2a2a2a" stroke-width="1" />
<line x1="799.2" y1="819.5" x2="803.7" y2="819.5" stroke="#2a2a2a" stroke-width="1" />
<line x1="794.7" y1="821.5" x2="803.7" y2="821.5" stroke="#333" stroke-width="1" />
<line x1="799.2" y1="823.5" x2="803.7" y2="823.5" stroke="#2a2a2a" stroke-width="1" />
<line x1="799.2" y1="825.5" x2="803.7" y2="825.5" stroke="#2a2a2a" stroke-width="1" />
<line x1="799.2" y1="827.5" x2="803.7" y2="827.5" stroke="#2a2a2a" stroke-width="1" />
<line x1="799.2" y1="828.5" x2="803.7" y2="828.5" stroke="#2a2a2a" stroke-width="1" />
<line x1="799.2" y1="830.5" x2="803.7" y2="830.5" stroke="#2a2a2a" stroke-width="1" />
<line x1="799.2" y1="832.5" x2="803.7" y2="832.5" stroke="#2a2a2a" stroke-width="1" />
<line x1="799.2" y1="834.5" x2="803.7" y2="834.5" stroke="#2a2a2a" stroke-width="1" />
<line x1="799.2" y1="836.5" x2="803.7" y2="836.5" stroke="#2a2a2a" stroke-width="1" />
<line x1="799.2" y1="838.5" x2="803.7" y2="838.5" stroke="#2a2a2a" stroke-width="1" />
<line x1="794.7" y1="840.5" x2="803.7" y2="840.5" stroke="#333" stroke-width="1" />
<line x1="799.2" y1="841.5" x2="803.7" y2="841.5" stroke="#2a2a2a" stroke-width="1" />
<line x1="799.2" y1="843.5" x2="803.7" y2="843.5" stroke="#2a2a2a" stroke-width="1" />
<line x1="799.2" y1="845.5" x2="803.7" y2="845.5" stroke="#2a2a2a" stroke-width="1" />
<line x1="799.2" y1="847.5" x2="803.7" y2="847.5" stroke="#2a2a2a" stroke-width="1" />
<line x1="799.2" y1="849.5" x2="803.7" y2="849.5" stroke="#2a2a2a" stroke-width="1" />
<line x1="799.2" y1="851.5" x2="803.7" y2="851.5" stroke="#2a2a2a" stroke-width="1" />
<line x1="799.2" y1="852.5" x2="803.7" y2="852.5" stroke="#2a2a2a" stroke-width="1" />
<line x1="799.2" y1="854.5" x2="803.7" y2="854.5" stroke="#2a2a2a" stroke-width="1" />
<line x1="799.2" y1="856.5" x2="803.7" y2="856.5" stroke="#2a2a2a" stroke-width="1" />
<line x1="794.7" y1="858.5" x2="803.7" y2="858.5" stroke="#333" stroke-width="1" />
<line x1="799.2" y1="860.5" x2="803.7" y2="860.5" stroke="#2a2a2a" stroke-width="1" />
<line x1="799.2" y1="862.5" x2="803.7" y2="862.5" stroke="#2a2a2a" stroke-width="1" />
<line x1="799.2" y1="864.5" x2="803.7" y2="864.5" stroke="#2a2a2a" stroke-width="1" />
<line x1="799.2" y1="865.5" x2="803.7" y2="865.5" stroke="#2a2a2a" stroke-width="1" />
<line x1="799.2" y1="867.5" x2="803.7" y2="867.5" stroke="#2a2a2a" stroke-width="1" />
<line x1="799.2" y1="869.5" x2="803.7" y2="869.5" stroke="#2a2a2a" stroke-width="1" />
<line x1="799.2" y1="871.5" x2="803.7" y2="871.5" stroke="#2a2a2a" stroke-width="1" />
<line x1="799.2" y1="873.5" x2="803.7" y2="873.5" stroke="#2a2a2a" stroke-width="1" />
<line x1="799.2" y1="875.5" x2="803.7" y2="875.5" stroke="#2a2a2a" stroke-width="1" />
<line x1="794.7" y1="876.5" x2="803.7" y2="876.5" stroke="#333" stroke-width="1" />
<line x1="799.2" y1="878.5" x2="803.7" y2="878.5" stroke="#2a2a2a" stroke-width="1" />
<line x1="799.2" y1="880.5" x2="803.7" y2="880.5" stroke="#2a2a2a" stroke-width="1" />
<line x1="799.2" y1="882.5" x2="803.7" y2="882.5" stroke="#2a2a2a" stroke-width="1" />
<line x1="799.2" y1="884.5" x2="803.7" y2="884.5" stroke="#2a2a2a" stroke-width="1" />
<line x1="799.2" y1="886.5" x2="803.7" y2="886.5" stroke="#2a2a2a" stroke-width="1" />
<line x1="799.2" y1="888.5" x2="803.7" y2="888.5" stroke="#2a2a2a" stroke-width="1" />
<line x1="799.2" y1="889.5" x2="803.7" y2="889.5" stroke="#2a2a2a" stroke-width="1" />
<line x1="799.2" y1="891.5" x2="803.7" y2="891.5" stroke="#2a2a2a" stroke-width="1" />
<line x1="799.2" y1="893.5" x2="803.7" y2="893.5" stroke="#2a2a2a" stroke-width="1" />
<line x1="794.7" y1="895.5" x2="803.7" y2="895.5" stroke="#333" stroke-width="1" />
<line x1="799.2" y1="897.5" x2="803.7" y2="897.5" stroke="#2a2a2a" stroke-width="1" />
<line x1="799.2" y1="899.5" x2="803.7" y2="899.5" stroke="#2a2a2a" stroke-width="1" />
<line x1="799.2" y1="900.5" x2="803.7" y2="900.5" stroke="#2a2a2a" stroke-width="1" />
<line x1="799.2" y1="902.5" x2="803.7" y2="902.5" stroke="#2a2a2a" stroke-width="1" />
<line x1="799.2" y1="904.5" x2="803.7" y2="904.5" stroke="#2a2a2a" stroke-width="1" />
<line x1="799.2" y1="906.5" x2="803.7" y2="906.5" stroke="#2a2a2a" stroke-width="1" />
<line x1="799.2" y1="908.5" x2="803.7" y2="908.5" stroke="#2a2a2a" stroke-width="1" />
<line x1="799.2" y1="910.5" x2="803.7" y2="910.5" stroke="#2a2a2a" stroke-width="1" />
<line x1="799.2" y1="912.5" x2="803.7" y2="912.5" stroke="#2a2a2a" stroke-width="1" />
<line x1="794.7" y1="913.5" x2="803.7" y2="913.5" stroke="#333" stroke-width="1" />
<line x1="799.2" y1="915.5" x2="803.7" y2="915.5" stroke="#2a2a2a" stroke-width="1" />
<line x1="799.2" y1="917.5" x2="803.7" y2="917.5" stroke="#2a2a2a" stroke-width="1" />
<line x1="799.2" y1="919.5" x2="803.7" y2="919.5" stroke="#2a2a2a" stroke-width="1" />
<line x1="799.2" y1="921.5" x2="803.7" y2="921.5" stroke="#2a2a2a" stroke-width="1" />
<line x1="799.2" y1="923.5" x2="803.7" y2="923.5" stroke="#2a2a2a" stroke-width="1" />
<line x1="799.2" y1="924.5" x2="803.7" y2="924.5" stroke="#2a2a2a" stroke-width="1" />
<line x1="799.2" y1="926.5" x2="803.7" y2="926.5" stroke="#2a2a2a" stroke-width="1" />
<line x1="799.2" y1="928.5" x2="803.7" y2="928.5" stroke="#2a2a2a" stroke-width="1" />
<line x1="799.2" y1="930.5" x2="803.7" y2="930.5" stroke="#2a2a2a" stroke-width="1" />
<line x1="794.7" y1="932.5" x2="803.7" y2="932.5" stroke="#333" stroke-width="1" />
<line x1="799.2" y1="934.5" x2="803.7" y2="934.5" stroke="#2a2a2a" stroke-width="1" />
<line x1="799.2" y1="936.5" x2="803.7" y2="936.5" stroke="#2a2a2a" stroke-width="1" />
<line x1="799.2" y1="937.5" x2="803.7" y2="937.5" stroke="#2a2a2a" stroke-width="1" />
<line x1="799.2" y1="939.5" x2="803.7" y2="939.5" stroke="#2a2a2a" stroke-width="1" />
<line x1="799.2" y1="941.5" x2="803.7" y2="941.5" stroke="#2a2a2a" stroke-width="1" />
<line x1="799.2" y1="943.5" x2="803.7" y2="943.5" stroke="#2a2a2a" stroke-width="1" />
<line x1="799.2" y1="945.5" x2="803.7" y2="945.5" stroke="#2a2a2a" stroke-width="1" />
<line x1="799.2" y1="947.5" x2="803.7" y2="947.5" stroke="#2a2a2a" stroke-width="1" />
<line x1="799.2" y1="948.5" x2="803.7" y2="948.5" stroke="#2a2a2a" stroke-width="1" />
<line x1="794.7" y1="950.5" x2="803.7" y2="950.5" stroke="#333" stroke-width="1" />
<text x="789.7" y="807.6" font-size="12.5" text-anchor="end" fill="#404040" letter-spacing="0.5">40.</text>
<text x="789.7" y="826.0625" font-size="12.5" text-anchor="end" fill="#404040" letter-spacing="0.5">30.</text>
<text x="789.7" y="844.525" font-size="12.5" text-anchor="end" fill="#404040" letter-spacing="0.5">20.</text>
<text x="789.7" y="862.9875" font-size="12.5" text-anchor="end" fill="#404040" letter-spacing="0.5">10.</text>
<text x="789.7" y="881.45" font-size="12.5" text-anchor="end" fill="#404040" letter-spacing="0.5">0.</text>
<text x="789.7" y="899.9125" font-size="12.5" text-anchor="end" fill="#404040" letter-spacing="0.5">-10.</text>
<text x="789.7" y="918.375" font-size="12.5" text-anchor="end" fill="#404040" letter-spacing="0.5">-20.</text>
<text x="789.7" y="936.8375" font-size="12.5" text-anchor="end" fill="#404040" letter-spacing="0.5">-30.</text>
<text x="789.7" y="955.3" font-size="12.5" text-anchor="end" fill="#404040" letter-spacing="0.5">-40.</text>
<line x1="803.7" y1="950.3" x2="803.7" y2="958.3" stroke="#333" stroke-width="1" />
<line x1="822.5125" y1="950.3" x2="822.5125" y2="954.3" stroke="#333" stroke-width="1" />
<line x1="841.325" y1="950.3" x2="841.325" y2="958.3" stroke="#333" stroke-width="1" />
<line x1="860.1375" y1="950.3" x2="860.1375" y2="954.3" stroke="#333" stroke-width="1" />
<line x1="878.95" y1="950.3" x2="878.95" y2="958.3" stroke="#333" stroke-width="1" />
<line x1="897.7625" y1="950.3" x2="897.7625" y2="954.3" stroke="#333" stroke-width="1" />
<line x1="916.575" y1="950.3" x2="916.575" y2="958.3" stroke="#333" stroke-width="1" />
<line x1="935.3875" y1="950.3" x2="935.3875" y2="954.3" stroke="#333" stroke-width="1" />
<line x1="954.2" y1="950.3" x2="954.2" y2="958.3" stroke="#333" stroke-width="1" />
<text x="805.7" y="973.5" font-size="12.5" text-anchor="middle" fill="#404040" letter-spacing="0.5">-40.</text>
<text x="843.325" y="973.5" font-size="12.5" text-anchor="middle" fill="#404040" letter-spacing="0.5">-20.</text>
<text x="880.95" y="973.5" font-size="12.5" text-anchor="middle" fill="#404040" letter-spacing="0.5">0.</text>
<text x="918.575" y="973.5" font-size="12.5" text-anchor="middle" fill="#404040" letter-spacing="0.5">20.</text>
<text x="956.2" y="973.5" font-size="12.5" text-anchor="middle" fill="#404040" letter-spacing="0.5">40.</text>
<text x="878.95" y="991.5" font-size="12.5" text-anchor="middle" fill="#404040" letter-spacing="0.3">KSM-Y</text>
<text transform="translate(754.7,876.5) rotate(-90)" font-size="12.5" text-anchor="middle" fill="#404040" letter-spacing="0.3">KSM-Z</text>
<clipPath id="c1"><rect x="215.4" y="802.6" width="150.5" height="147.7"/></clipPath>
<clipPath id="c2"><rect x="509.7" y="802.6" width="150.5" height="147.7"/></clipPath>
<clipPath id="c3"><rect x="803.7" y="802.6" width="150.5" height="147.7"/></clipPath>
<g clip-path="url(#c1)">
<path d="M 249 800 Q 202 876.5 249 953" fill="none" stroke="#0000ff" stroke-width="1.2" stroke-dasharray="2.2 1.5"/>
<path d="M 284 800 Q 200 876.5 284 953" fill="none" stroke="#7a4620" stroke-width="1.1" stroke-dasharray="3 1.2"/>
<ellipse cx="292" cy="876.7" rx="36.8" ry="37.3" fill="none" stroke="#000" stroke-width="1.3"/>
<ellipse cx="291.5" cy="876.8" rx="1.8" ry="1.3" fill="none" stroke="#000" stroke-width="0.9"/>
<path d="M 258 893 Q 251 908 251.5 925 Q 252 940 259 952" fill="none" stroke="#000" stroke-width="1.3"/>
</g>
<circle cx="271" cy="847.3" r="2.6" fill="#ff0000"/>
<path d="M 252.5 934 L 254 940" stroke="#0000ff" stroke-width="4.5" stroke-linecap="round"/>
<path d="M 247.5 929.5 L 255 937.5 M 255 929.5 L 247.5 937.5" stroke="#ff2020" stroke-width="1.2"/>
<g clip-path="url(#c2)">
<path d="M 543.5 800 Q 494 876.5 543.5 953" fill="none" stroke="#0000ff" stroke-width="1.2" stroke-dasharray="2.2 1.5"/>
<path d="M 578 800 Q 494 876.5 578 953" fill="none" stroke="#7a4620" stroke-width="1.1" stroke-dasharray="3 1.2"/>
</g>
<path d="M 624 866.9 L 585 876.7 L 565.4 882.3 L 552 885.3 Q 545.5 889 545 896 L 545.5 900 Q 552 905 560 906.4" fill="none" stroke="#000" stroke-width="1.3"/>
<path d="M 623 867.2 L 565.4 882.3" fill="none" stroke="#000" stroke-width="1.9"/>
<ellipse cx="585.3" cy="876.8" rx="1.8" ry="1.3" fill="none" stroke="#000" stroke-width="0.9"/>
<circle cx="565.4" cy="882.5" r="2.6" fill="#ff0000"/>
<path d="M 546 899.5 L 547.5 901.5" stroke="#0000ff" stroke-width="4.5" stroke-linecap="round"/>
<path d="M 541.5 895.5 L 549 903.5 M 549 895.5 L 541.5 903.5" stroke="#ff2020" stroke-width="1.2"/>
<g clip-path="url(#c3)">
<circle cx="879" cy="876.5" r="79.5" fill="none" stroke="#0000ff" stroke-width="1.2" stroke-dasharray="2.2 1.5"/>
<circle cx="879" cy="876.5" r="37.3" fill="none" stroke="#7a4620" stroke-width="1.1" stroke-dasharray="3 1.2"/>
<line x1="896.8" y1="885.3" x2="956" y2="904.6" stroke="#000" stroke-width="1.3"/>
</g>
<ellipse cx="880" cy="876.8" rx="38.5" ry="9.5" fill="none" stroke="#000" stroke-width="1.3"/>
<ellipse cx="879.3" cy="876.8" rx="1.8" ry="1.3" fill="none" stroke="#000" stroke-width="0.9"/>
<circle cx="849.2" cy="882.5" r="2.6" fill="#ff0000"/>
<path d="M 938.5 899 L 944.5 901.5" stroke="#0000ff" stroke-width="4" stroke-linecap="round"/>
<path d="M 932.5 895.5 L 940 903.5 M 940 895.5 L 932.5 903.5" stroke="#ff2020" stroke-width="1.2"/>
<defs><clipPath id="p3clip"><rect x="96" y="421" width="984" height="88"/></clipPath></defs>
<defs><linearGradient id="ygrad" gradientUnits="userSpaceOnUse" x1="0" y1="620" x2="0" y2="690"><stop offset="0" stop-color="#12a8b0"/><stop offset="0.286" stop-color="#30c070"/><stop offset="0.386" stop-color="#50d050"/><stop offset="0.514" stop-color="#98e030"/><stop offset="0.629" stop-color="#c4ec10"/><stop offset="0.729" stop-color="#e0e400"/><stop offset="0.829" stop-color="#eccc00"/><stop offset="0.914" stop-color="#f0b400"/><stop offset="1" stop-color="#f09400"/></linearGradient></defs>
<defs><linearGradient id="bgrad" gradientUnits="userSpaceOnUse" x1="0" y1="526" x2="0" y2="556"><stop offset="0" stop-color="#0c10a0"/><stop offset="0.3" stop-color="#1220c8"/><stop offset="0.75" stop-color="#1c40f8"/><stop offset="0.85" stop-color="#1c50ff"/><stop offset="0.87" stop-color="#1018b8"/><stop offset="1" stop-color="#1018b8"/></linearGradient></defs>
</svg></body></html>
